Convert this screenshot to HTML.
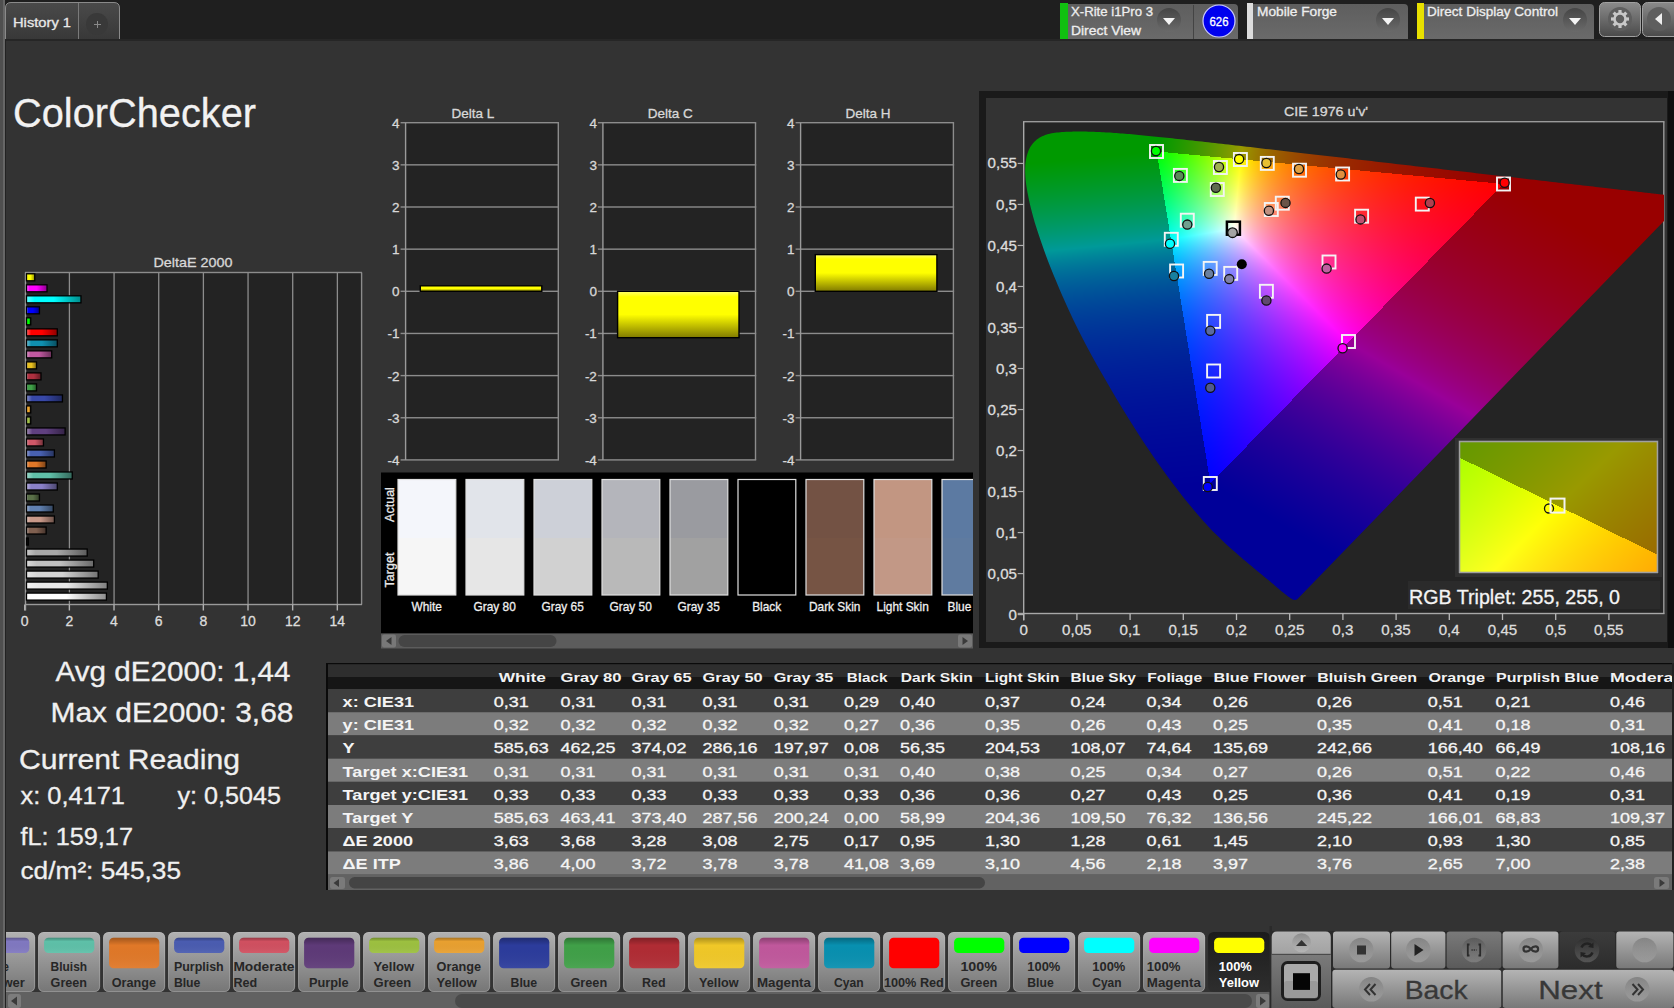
<!DOCTYPE html>
<html><head><meta charset="utf-8"><style>
html,body{margin:0;padding:0;background:#333;overflow:hidden;width:1674px;height:1008px}
svg,canvas{position:absolute;left:0;top:0}
text{font-family:"Liberation Sans", sans-serif}
</style></head><body>
<svg id="base" width="1674" height="1008" viewBox="0 0 1674 1008"><rect x="0" y="0" width="1674" height="1008" fill="#333333"/><rect x="0" y="0" width="1674" height="40" fill="#1f1f1f"/><rect x="5" y="39" width="1669" height="2" fill="#262626"/><rect x="0" y="0" width="5" height="1008" fill="#4f4f4f"/><rect x="3" y="0" width="2" height="1008" fill="#666"/><rect x="5" y="40" width="1" height="968" fill="#222"/><defs><linearGradient id="tabg" x1="0" y1="0" x2="0" y2="1"><stop offset="0" stop-color="#4a4a4a"/><stop offset="1" stop-color="#383838"/></linearGradient><linearGradient id="boxg" x1="0" y1="0" x2="0" y2="1"><stop offset="0" stop-color="#5e5e5e"/><stop offset="1" stop-color="#6a6a6a"/></linearGradient><radialGradient id="ddg" cx="0.5" cy="0.3" r="0.7"><stop offset="0" stop-color="#474747"/><stop offset="1" stop-color="#5a5a5a"/></radialGradient><linearGradient id="ddg2" x1="0" y1="0" x2="0" y2="1"><stop offset="0" stop-color="#454545"/><stop offset="1" stop-color="#6a6a6a"/></linearGradient><linearGradient id="btng" x1="0" y1="0" x2="0" y2="1"><stop offset="0" stop-color="#8a8a8a"/><stop offset="1" stop-color="#4a4a4a"/></linearGradient></defs><path d="M5.5,39 V8 Q5.5,2.5 11,2.5 H114 Q119.5,2.5 119.5,8 V39" fill="url(#tabg)" stroke="#8a8a8a" stroke-width="1"/><rect x="78" y="3" width="1" height="36" fill="#7a7a7a"/><circle cx="97" cy="24" r="11" fill="#393939"/><path d="M94,24.5 H101 M97.5,21 V28" stroke="#8a8a8a" stroke-width="1"/><text x="13" y="27" font-size="13" fill="#e8e8e8" stroke="#e8e8e8" stroke-width="0.3" text-anchor="start" font-weight="400" textLength="58" lengthAdjust="spacingAndGlyphs" >History 1</text><path d="M1060,39 V4 H1234 Q1238,4 1238,8 V39 Z" fill="url(#boxg)"/><rect x="1060" y="3" width="8" height="36" fill="#10c010"/><text x="1071" y="16" font-size="13" fill="#eeeeee" stroke="#eeeeee" stroke-width="0.3" text-anchor="start" font-weight="400" textLength="82" lengthAdjust="spacingAndGlyphs" >X-Rite i1Pro 3</text><text x="1071" y="35" font-size="13" fill="#eeeeee" stroke="#eeeeee" stroke-width="0.3" text-anchor="start" font-weight="400" textLength="70" lengthAdjust="spacingAndGlyphs" >Direct View</text><circle cx="1169" cy="20" r="12" fill="url(#ddg2)"/><path d="M1163,18 L1175,18 L1169,25 Z" fill="#f4f4f4"/><rect x="1193" y="5" width="1" height="34" fill="#444"/><circle cx="1219" cy="21" r="16" fill="#0000ee" stroke="#c8c8ff" stroke-width="1.2"/><text x="1219" y="25.5" font-size="12" fill="#ffffff" stroke="#ffffff" stroke-width="0.3" text-anchor="middle" font-weight="400" textLength="19" lengthAdjust="spacingAndGlyphs" >626</text><path d="M1247,39 V4 H1404 Q1408,4 1408,8 V39 Z" fill="url(#boxg)"/><rect x="1247" y="3" width="6" height="36" fill="#dddddd"/><text x="1257" y="16" font-size="13" fill="#eeeeee" stroke="#eeeeee" stroke-width="0.3" text-anchor="start" font-weight="400" textLength="80" lengthAdjust="spacingAndGlyphs" >Mobile Forge</text><circle cx="1388" cy="20" r="12" fill="url(#ddg2)"/><path d="M1382,18 L1394,18 L1388,25 Z" fill="#f4f4f4"/><path d="M1417,39 V4 H1590 Q1594,4 1594,8 V39 Z" fill="url(#boxg)"/><rect x="1417" y="3" width="7" height="36" fill="#e8e000"/><text x="1427" y="16" font-size="13" fill="#eeeeee" stroke="#eeeeee" stroke-width="0.3" text-anchor="start" font-weight="400" textLength="131" lengthAdjust="spacingAndGlyphs" >Direct Display Control</text><circle cx="1575" cy="20" r="12" fill="url(#ddg2)"/><path d="M1569,18 L1581,18 L1575,25 Z" fill="#f4f4f4"/><rect x="1599.5" y="2.5" width="41" height="34" rx="5" fill="url(#btng)" stroke="#a0a0a0" stroke-width="1"/><circle cx="1620" cy="19" r="12" fill="#5e5e5e"/><rect x="1618.4" y="10" width="3.2" height="4" fill="#c8c8c8" transform="rotate(0 1620 19)"/><rect x="1618.4" y="10" width="3.2" height="4" fill="#c8c8c8" transform="rotate(45 1620 19)"/><rect x="1618.4" y="10" width="3.2" height="4" fill="#c8c8c8" transform="rotate(90 1620 19)"/><rect x="1618.4" y="10" width="3.2" height="4" fill="#c8c8c8" transform="rotate(135 1620 19)"/><rect x="1618.4" y="10" width="3.2" height="4" fill="#c8c8c8" transform="rotate(180 1620 19)"/><rect x="1618.4" y="10" width="3.2" height="4" fill="#c8c8c8" transform="rotate(225 1620 19)"/><rect x="1618.4" y="10" width="3.2" height="4" fill="#c8c8c8" transform="rotate(270 1620 19)"/><rect x="1618.4" y="10" width="3.2" height="4" fill="#c8c8c8" transform="rotate(315 1620 19)"/><circle cx="1620" cy="19" r="5.5" fill="none" stroke="#c8c8c8" stroke-width="2.6"/><rect x="1642.5" y="2.5" width="40" height="34" rx="5" fill="url(#btng)" stroke="#a0a0a0" stroke-width="1"/><circle cx="1659" cy="19" r="12" fill="#5e5e5e"/><path d="M1655,19 L1662,13 L1662,25 Z" fill="#eeeeee"/><text x="13" y="127" font-size="40" fill="#f2f2f2" stroke="#f2f2f2" stroke-width="0.3" text-anchor="start" font-weight="400" textLength="243" lengthAdjust="spacingAndGlyphs" >ColorChecker</text><rect x="25.5" y="272.5" width="336.0" height="332.0" fill="#232323"/><rect x="68.76" y="272.5" width="1.3" height="332.0" fill="#8c8c8c"/><rect x="113.42" y="272.5" width="1.3" height="332.0" fill="#8c8c8c"/><rect x="158.08" y="272.5" width="1.3" height="332.0" fill="#8c8c8c"/><rect x="202.74" y="272.5" width="1.3" height="332.0" fill="#8c8c8c"/><rect x="247.40" y="272.5" width="1.3" height="332.0" fill="#8c8c8c"/><rect x="292.06" y="272.5" width="1.3" height="332.0" fill="#8c8c8c"/><rect x="336.72" y="272.5" width="1.3" height="332.0" fill="#8c8c8c"/><rect x="25.0" y="271.8" width="337.0" height="1.4" fill="#8c8c8c"/><rect x="360.9" y="272.5" width="1.4" height="332.0" fill="#8c8c8c"/><rect x="24.8" y="272.5" width="1.4" height="338.0" fill="#9a9a9a"/><rect x="25.0" y="603.8" width="337.0" height="1.4" fill="#9a9a9a"/><rect x="24.00" y="604.5" width="1.4" height="6" fill="#b0b0b0"/><text x="24.7" y="626" font-size="14" fill="#dcdcdc" stroke="#dcdcdc" stroke-width="0.3" text-anchor="middle" font-weight="400" >0</text><rect x="68.66" y="604.5" width="1.4" height="6" fill="#b0b0b0"/><text x="69.4" y="626" font-size="14" fill="#dcdcdc" stroke="#dcdcdc" stroke-width="0.3" text-anchor="middle" font-weight="400" >2</text><rect x="113.32" y="604.5" width="1.4" height="6" fill="#b0b0b0"/><text x="114.0" y="626" font-size="14" fill="#dcdcdc" stroke="#dcdcdc" stroke-width="0.3" text-anchor="middle" font-weight="400" >4</text><rect x="157.98" y="604.5" width="1.4" height="6" fill="#b0b0b0"/><text x="158.7" y="626" font-size="14" fill="#dcdcdc" stroke="#dcdcdc" stroke-width="0.3" text-anchor="middle" font-weight="400" >6</text><rect x="202.64" y="604.5" width="1.4" height="6" fill="#b0b0b0"/><text x="203.3" y="626" font-size="14" fill="#dcdcdc" stroke="#dcdcdc" stroke-width="0.3" text-anchor="middle" font-weight="400" >8</text><rect x="247.30" y="604.5" width="1.4" height="6" fill="#b0b0b0"/><text x="248.0" y="626" font-size="14" fill="#dcdcdc" stroke="#dcdcdc" stroke-width="0.3" text-anchor="middle" font-weight="400" >10</text><rect x="291.96" y="604.5" width="1.4" height="6" fill="#b0b0b0"/><text x="292.7" y="626" font-size="14" fill="#dcdcdc" stroke="#dcdcdc" stroke-width="0.3" text-anchor="middle" font-weight="400" >12</text><rect x="336.62" y="604.5" width="1.4" height="6" fill="#b0b0b0"/><text x="337.3" y="626" font-size="14" fill="#dcdcdc" stroke="#dcdcdc" stroke-width="0.3" text-anchor="middle" font-weight="400" >14</text><text x="193" y="267" font-size="13.5" fill="#d8d8d8" stroke="#d8d8d8" stroke-width="0.3" text-anchor="middle" font-weight="400" textLength="79" lengthAdjust="spacingAndGlyphs" >DeltaE 2000</text><rect x="26.5" y="273.80" width="8.25" height="7" fill="url(#bg0)" stroke="#000" stroke-width="1.3"/><rect x="26.5" y="284.81" width="20.53" height="7" fill="url(#bg1)" stroke="#000" stroke-width="1.3"/><rect x="26.5" y="295.82" width="54.47" height="7" fill="url(#bg2)" stroke="#000" stroke-width="1.3"/><rect x="26.5" y="306.83" width="12.94" height="7" fill="url(#bg3)" stroke="#000" stroke-width="1.3"/><rect x="26.5" y="317.84" width="4.23" height="7" fill="url(#bg4)" stroke="#000" stroke-width="1.3"/><rect x="26.5" y="328.85" width="30.80" height="7" fill="url(#bg5)" stroke="#000" stroke-width="1.3"/><rect x="26.5" y="339.86" width="30.80" height="7" fill="url(#bg6)" stroke="#000" stroke-width="1.3"/><rect x="26.5" y="350.87" width="25.22" height="7" fill="url(#bg7)" stroke="#000" stroke-width="1.3"/><rect x="26.5" y="361.88" width="10.03" height="7" fill="url(#bg8)" stroke="#000" stroke-width="1.3"/><rect x="26.5" y="372.89" width="14.50" height="7" fill="url(#bg9)" stroke="#000" stroke-width="1.3"/><rect x="26.5" y="383.90" width="10.03" height="7" fill="url(#bg10)" stroke="#000" stroke-width="1.3"/><rect x="26.5" y="394.91" width="35.94" height="7" fill="url(#bg11)" stroke="#000" stroke-width="1.3"/><rect x="26.5" y="405.92" width="4.23" height="7" fill="url(#bg12)" stroke="#000" stroke-width="1.3"/><rect x="26.5" y="416.93" width="4.23" height="7" fill="url(#bg13)" stroke="#000" stroke-width="1.3"/><rect x="26.5" y="427.94" width="38.62" height="7" fill="url(#bg14)" stroke="#000" stroke-width="1.3"/><rect x="26.5" y="438.95" width="16.96" height="7" fill="url(#bg15)" stroke="#000" stroke-width="1.3"/><rect x="26.5" y="449.96" width="27.90" height="7" fill="url(#bg16)" stroke="#000" stroke-width="1.3"/><rect x="26.5" y="460.97" width="19.64" height="7" fill="url(#bg17)" stroke="#000" stroke-width="1.3"/><rect x="26.5" y="471.98" width="45.76" height="7" fill="url(#bg18)" stroke="#000" stroke-width="1.3"/><rect x="26.5" y="482.99" width="30.80" height="7" fill="url(#bg19)" stroke="#000" stroke-width="1.3"/><rect x="26.5" y="494.00" width="12.94" height="7" fill="url(#bg20)" stroke="#000" stroke-width="1.3"/><rect x="26.5" y="505.01" width="26.78" height="7" fill="url(#bg21)" stroke="#000" stroke-width="1.3"/><rect x="26.5" y="516.02" width="27.90" height="7" fill="url(#bg22)" stroke="#000" stroke-width="1.3"/><rect x="26.5" y="527.03" width="19.64" height="7" fill="url(#bg23)" stroke="#000" stroke-width="1.3"/><rect x="26.5" y="538.04" width="1.77" height="7" fill="url(#bg24)" stroke="#000" stroke-width="1.3"/><rect x="26.5" y="549.05" width="60.72" height="7" fill="url(#bg25)" stroke="#000" stroke-width="1.3"/><rect x="26.5" y="560.06" width="67.20" height="7" fill="url(#bg26)" stroke="#000" stroke-width="1.3"/><rect x="26.5" y="571.07" width="71.67" height="7" fill="url(#bg27)" stroke="#000" stroke-width="1.3"/><rect x="26.5" y="582.08" width="80.82" height="7" fill="url(#bg28)" stroke="#000" stroke-width="1.3"/><rect x="26.5" y="593.09" width="79.93" height="7" fill="url(#bg29)" stroke="#000" stroke-width="1.3"/><defs><linearGradient id="bg0" x1="0" y1="0" x2="1" y2="0"><stop offset="0" stop-color="#ffff66"/><stop offset="0.15" stop-color="#ffff00"/><stop offset="0.5" stop-color="#ffff00"/><stop offset="1" stop-color="#8c8c00"/></linearGradient><linearGradient id="bg1" x1="0" y1="0" x2="1" y2="0"><stop offset="0" stop-color="#ff66ff"/><stop offset="0.15" stop-color="#ff00ff"/><stop offset="0.5" stop-color="#ff00ff"/><stop offset="1" stop-color="#8c008c"/></linearGradient><linearGradient id="bg2" x1="0" y1="0" x2="1" y2="0"><stop offset="0" stop-color="#66ffff"/><stop offset="0.15" stop-color="#00ffff"/><stop offset="0.5" stop-color="#00ffff"/><stop offset="1" stop-color="#008c8c"/></linearGradient><linearGradient id="bg3" x1="0" y1="0" x2="1" y2="0"><stop offset="0" stop-color="#6666ff"/><stop offset="0.15" stop-color="#0000ff"/><stop offset="0.5" stop-color="#0000ff"/><stop offset="1" stop-color="#00008c"/></linearGradient><linearGradient id="bg4" x1="0" y1="0" x2="1" y2="0"><stop offset="0" stop-color="#66ff66"/><stop offset="0.15" stop-color="#00ff00"/><stop offset="0.5" stop-color="#00ff00"/><stop offset="1" stop-color="#008c00"/></linearGradient><linearGradient id="bg5" x1="0" y1="0" x2="1" y2="0"><stop offset="0" stop-color="#ff6666"/><stop offset="0.15" stop-color="#ff0000"/><stop offset="0.5" stop-color="#ff0000"/><stop offset="1" stop-color="#8c0000"/></linearGradient><linearGradient id="bg6" x1="0" y1="0" x2="1" y2="0"><stop offset="0" stop-color="#6fbccf"/><stop offset="0.15" stop-color="#1090b0"/><stop offset="0.5" stop-color="#1090b0"/><stop offset="1" stop-color="#084f60"/></linearGradient><linearGradient id="bg7" x1="0" y1="0" x2="1" y2="0"><stop offset="0" stop-color="#d99ac6"/><stop offset="0.15" stop-color="#c058a0"/><stop offset="0.5" stop-color="#c058a0"/><stop offset="1" stop-color="#693058"/></linearGradient><linearGradient id="bg8" x1="0" y1="0" x2="1" y2="0"><stop offset="0" stop-color="#f1d979"/><stop offset="0.15" stop-color="#e8c020"/><stop offset="0.5" stop-color="#e8c020"/><stop offset="1" stop-color="#7f6911"/></linearGradient><linearGradient id="bg9" x1="0" y1="0" x2="1" y2="0"><stop offset="0" stop-color="#cf828c"/><stop offset="0.15" stop-color="#b03040"/><stop offset="0.5" stop-color="#b03040"/><stop offset="1" stop-color="#601a23"/></linearGradient><linearGradient id="bg10" x1="0" y1="0" x2="1" y2="0"><stop offset="0" stop-color="#8cc691"/><stop offset="0.15" stop-color="#40a048"/><stop offset="0.5" stop-color="#40a048"/><stop offset="1" stop-color="#235827"/></linearGradient><linearGradient id="bg11" x1="0" y1="0" x2="1" y2="0"><stop offset="0" stop-color="#8791ca"/><stop offset="0.15" stop-color="#3848a8"/><stop offset="0.5" stop-color="#3848a8"/><stop offset="1" stop-color="#1e275c"/></linearGradient><linearGradient id="bg12" x1="0" y1="0" x2="1" y2="0"><stop offset="0" stop-color="#f6ca82"/><stop offset="0.15" stop-color="#f0a830"/><stop offset="0.5" stop-color="#f0a830"/><stop offset="1" stop-color="#845c1a"/></linearGradient><linearGradient id="bg13" x1="0" y1="0" x2="1" y2="0"><stop offset="0" stop-color="#c6d991"/><stop offset="0.15" stop-color="#a0c048"/><stop offset="0.5" stop-color="#a0c048"/><stop offset="1" stop-color="#586927"/></linearGradient><linearGradient id="bg14" x1="0" y1="0" x2="1" y2="0"><stop offset="0" stop-color="#9f8cb2"/><stop offset="0.15" stop-color="#604080"/><stop offset="0.5" stop-color="#604080"/><stop offset="1" stop-color="#342346"/></linearGradient><linearGradient id="bg15" x1="0" y1="0" x2="1" y2="0"><stop offset="0" stop-color="#e29aa4"/><stop offset="0.15" stop-color="#d05868"/><stop offset="0.5" stop-color="#d05868"/><stop offset="1" stop-color="#723039"/></linearGradient><linearGradient id="bg16" x1="0" y1="0" x2="1" y2="0"><stop offset="0" stop-color="#919fcf"/><stop offset="0.15" stop-color="#4860b0"/><stop offset="0.5" stop-color="#4860b0"/><stop offset="1" stop-color="#273460"/></linearGradient><linearGradient id="bg17" x1="0" y1="0" x2="1" y2="0"><stop offset="0" stop-color="#ecae7e"/><stop offset="0.15" stop-color="#e07828"/><stop offset="0.5" stop-color="#e07828"/><stop offset="1" stop-color="#7b4216"/></linearGradient><linearGradient id="bg18" x1="0" y1="0" x2="1" y2="0"><stop offset="0" stop-color="#9fd9ca"/><stop offset="0.15" stop-color="#60c0a8"/><stop offset="0.5" stop-color="#60c0a8"/><stop offset="1" stop-color="#34695c"/></linearGradient><linearGradient id="bg19" x1="0" y1="0" x2="1" y2="0"><stop offset="0" stop-color="#b8b2de"/><stop offset="0.15" stop-color="#8a80c8"/><stop offset="0.5" stop-color="#8a80c8"/><stop offset="1" stop-color="#4b466e"/></linearGradient><linearGradient id="bg20" x1="0" y1="0" x2="1" y2="0"><stop offset="0" stop-color="#9ca991"/><stop offset="0.15" stop-color="#5a7048"/><stop offset="0.5" stop-color="#5a7048"/><stop offset="1" stop-color="#313d27"/></linearGradient><linearGradient id="bg21" x1="0" y1="0" x2="1" y2="0"><stop offset="0" stop-color="#9fb2cf"/><stop offset="0.15" stop-color="#6080b0"/><stop offset="0.5" stop-color="#6080b0"/><stop offset="1" stop-color="#344660"/></linearGradient><linearGradient id="bg22" x1="0" y1="0" x2="1" y2="0"><stop offset="0" stop-color="#dec1b7"/><stop offset="0.15" stop-color="#c89888"/><stop offset="0.5" stop-color="#c89888"/><stop offset="1" stop-color="#6e534a"/></linearGradient><linearGradient id="bg23" x1="0" y1="0" x2="1" y2="0"><stop offset="0" stop-color="#b29f96"/><stop offset="0.15" stop-color="#806050"/><stop offset="0.5" stop-color="#806050"/><stop offset="1" stop-color="#46342c"/></linearGradient><linearGradient id="bg24" x1="0" y1="0" x2="1" y2="0"><stop offset="0" stop-color="#6f6f6f"/><stop offset="0.15" stop-color="#101010"/><stop offset="0.5" stop-color="#101010"/><stop offset="1" stop-color="#080808"/></linearGradient><linearGradient id="bg25" x1="0" y1="0" x2="1" y2="0"><stop offset="0" stop-color="#cacaca"/><stop offset="0.15" stop-color="#a8a8a8"/><stop offset="0.5" stop-color="#a8a8a8"/><stop offset="1" stop-color="#5c5c5c"/></linearGradient><linearGradient id="bg26" x1="0" y1="0" x2="1" y2="0"><stop offset="0" stop-color="#d9d9d9"/><stop offset="0.15" stop-color="#c0c0c0"/><stop offset="0.5" stop-color="#c0c0c0"/><stop offset="1" stop-color="#696969"/></linearGradient><linearGradient id="bg27" x1="0" y1="0" x2="1" y2="0"><stop offset="0" stop-color="#e5e5e5"/><stop offset="0.15" stop-color="#d4d4d4"/><stop offset="0.5" stop-color="#d4d4d4"/><stop offset="1" stop-color="#747474"/></linearGradient><linearGradient id="bg28" x1="0" y1="0" x2="1" y2="0"><stop offset="0" stop-color="#f1f1f1"/><stop offset="0.15" stop-color="#e8e8e8"/><stop offset="0.5" stop-color="#e8e8e8"/><stop offset="1" stop-color="#7f7f7f"/></linearGradient><linearGradient id="bg29" x1="0" y1="0" x2="1" y2="0"><stop offset="0" stop-color="#ffffff"/><stop offset="0.15" stop-color="#ffffff"/><stop offset="0.5" stop-color="#ffffff"/><stop offset="1" stop-color="#8c8c8c"/></linearGradient></defs><defs><linearGradient id="ybar" x1="0" y1="0" x2="0" y2="1"><stop offset="0" stop-color="#ffff70"/><stop offset="0.12" stop-color="#ffff00"/><stop offset="0.5" stop-color="#ffff00"/><stop offset="1" stop-color="#807a00"/></linearGradient></defs><rect x="405.6" y="122.7" width="152.7" height="337.2" fill="#232323"/><rect x="400.6" y="459.20" width="158.4" height="1.4" fill="#8c8c8c"/><text x="399.6" y="464.9" font-size="13.5" fill="#d8d8d8" stroke="#d8d8d8" stroke-width="0.3" text-anchor="end" font-weight="400" >-4</text><rect x="400.6" y="417.05" width="158.4" height="1.4" fill="#8c8c8c"/><text x="399.6" y="422.8" font-size="13.5" fill="#d8d8d8" stroke="#d8d8d8" stroke-width="0.3" text-anchor="end" font-weight="400" >-3</text><rect x="400.6" y="374.90" width="158.4" height="1.4" fill="#8c8c8c"/><text x="399.6" y="380.6" font-size="13.5" fill="#d8d8d8" stroke="#d8d8d8" stroke-width="0.3" text-anchor="end" font-weight="400" >-2</text><rect x="400.6" y="332.75" width="158.4" height="1.4" fill="#8c8c8c"/><text x="399.6" y="338.4" font-size="13.5" fill="#d8d8d8" stroke="#d8d8d8" stroke-width="0.3" text-anchor="end" font-weight="400" >-1</text><rect x="400.6" y="290.60" width="158.4" height="1.4" fill="#8c8c8c"/><text x="399.6" y="296.3" font-size="13.5" fill="#d8d8d8" stroke="#d8d8d8" stroke-width="0.3" text-anchor="end" font-weight="400" >0</text><rect x="400.6" y="248.45" width="158.4" height="1.4" fill="#8c8c8c"/><text x="399.6" y="254.2" font-size="13.5" fill="#d8d8d8" stroke="#d8d8d8" stroke-width="0.3" text-anchor="end" font-weight="400" >1</text><rect x="400.6" y="206.30" width="158.4" height="1.4" fill="#8c8c8c"/><text x="399.6" y="212.0" font-size="13.5" fill="#d8d8d8" stroke="#d8d8d8" stroke-width="0.3" text-anchor="end" font-weight="400" >2</text><rect x="400.6" y="164.15" width="158.4" height="1.4" fill="#8c8c8c"/><text x="399.6" y="169.9" font-size="13.5" fill="#d8d8d8" stroke="#d8d8d8" stroke-width="0.3" text-anchor="end" font-weight="400" >3</text><rect x="400.6" y="122.00" width="158.4" height="1.4" fill="#8c8c8c"/><text x="399.6" y="127.7" font-size="13.5" fill="#d8d8d8" stroke="#d8d8d8" stroke-width="0.3" text-anchor="end" font-weight="400" >4</text><rect x="404.90000000000003" y="122.7" width="1.4" height="337.2" fill="#9a9a9a"/><rect x="557.5999999999999" y="122.7" width="1.4" height="337.2" fill="#8c8c8c"/><text x="472.95" y="118" font-size="13.5" fill="#d8d8d8" stroke="#d8d8d8" stroke-width="0.3" text-anchor="middle" font-weight="400" >Delta L</text><rect x="420.3" y="285.8" width="121.5" height="5.5" fill="url(#ybar)" stroke="#000" stroke-width="1.4"/><rect x="602.9" y="122.7" width="152.6" height="337.2" fill="#232323"/><rect x="597.9" y="459.20" width="158.3" height="1.4" fill="#8c8c8c"/><text x="596.9" y="464.9" font-size="13.5" fill="#d8d8d8" stroke="#d8d8d8" stroke-width="0.3" text-anchor="end" font-weight="400" >-4</text><rect x="597.9" y="417.05" width="158.3" height="1.4" fill="#8c8c8c"/><text x="596.9" y="422.8" font-size="13.5" fill="#d8d8d8" stroke="#d8d8d8" stroke-width="0.3" text-anchor="end" font-weight="400" >-3</text><rect x="597.9" y="374.90" width="158.3" height="1.4" fill="#8c8c8c"/><text x="596.9" y="380.6" font-size="13.5" fill="#d8d8d8" stroke="#d8d8d8" stroke-width="0.3" text-anchor="end" font-weight="400" >-2</text><rect x="597.9" y="332.75" width="158.3" height="1.4" fill="#8c8c8c"/><text x="596.9" y="338.4" font-size="13.5" fill="#d8d8d8" stroke="#d8d8d8" stroke-width="0.3" text-anchor="end" font-weight="400" >-1</text><rect x="597.9" y="290.60" width="158.3" height="1.4" fill="#8c8c8c"/><text x="596.9" y="296.3" font-size="13.5" fill="#d8d8d8" stroke="#d8d8d8" stroke-width="0.3" text-anchor="end" font-weight="400" >0</text><rect x="597.9" y="248.45" width="158.3" height="1.4" fill="#8c8c8c"/><text x="596.9" y="254.2" font-size="13.5" fill="#d8d8d8" stroke="#d8d8d8" stroke-width="0.3" text-anchor="end" font-weight="400" >1</text><rect x="597.9" y="206.30" width="158.3" height="1.4" fill="#8c8c8c"/><text x="596.9" y="212.0" font-size="13.5" fill="#d8d8d8" stroke="#d8d8d8" stroke-width="0.3" text-anchor="end" font-weight="400" >2</text><rect x="597.9" y="164.15" width="158.3" height="1.4" fill="#8c8c8c"/><text x="596.9" y="169.9" font-size="13.5" fill="#d8d8d8" stroke="#d8d8d8" stroke-width="0.3" text-anchor="end" font-weight="400" >3</text><rect x="597.9" y="122.00" width="158.3" height="1.4" fill="#8c8c8c"/><text x="596.9" y="127.7" font-size="13.5" fill="#d8d8d8" stroke="#d8d8d8" stroke-width="0.3" text-anchor="end" font-weight="400" >4</text><rect x="602.1999999999999" y="122.7" width="1.4" height="337.2" fill="#9a9a9a"/><rect x="754.8" y="122.7" width="1.4" height="337.2" fill="#8c8c8c"/><text x="670.2" y="118" font-size="13.5" fill="#d8d8d8" stroke="#d8d8d8" stroke-width="0.3" text-anchor="middle" font-weight="400" >Delta C</text><rect x="617.6" y="291.3" width="121.4" height="46.4" fill="url(#ybar)" stroke="#000" stroke-width="1.4"/><rect x="800.6" y="122.7" width="152.8" height="337.2" fill="#232323"/><rect x="795.6" y="459.20" width="158.5" height="1.4" fill="#8c8c8c"/><text x="794.6" y="464.9" font-size="13.5" fill="#d8d8d8" stroke="#d8d8d8" stroke-width="0.3" text-anchor="end" font-weight="400" >-4</text><rect x="795.6" y="417.05" width="158.5" height="1.4" fill="#8c8c8c"/><text x="794.6" y="422.8" font-size="13.5" fill="#d8d8d8" stroke="#d8d8d8" stroke-width="0.3" text-anchor="end" font-weight="400" >-3</text><rect x="795.6" y="374.90" width="158.5" height="1.4" fill="#8c8c8c"/><text x="794.6" y="380.6" font-size="13.5" fill="#d8d8d8" stroke="#d8d8d8" stroke-width="0.3" text-anchor="end" font-weight="400" >-2</text><rect x="795.6" y="332.75" width="158.5" height="1.4" fill="#8c8c8c"/><text x="794.6" y="338.4" font-size="13.5" fill="#d8d8d8" stroke="#d8d8d8" stroke-width="0.3" text-anchor="end" font-weight="400" >-1</text><rect x="795.6" y="290.60" width="158.5" height="1.4" fill="#8c8c8c"/><text x="794.6" y="296.3" font-size="13.5" fill="#d8d8d8" stroke="#d8d8d8" stroke-width="0.3" text-anchor="end" font-weight="400" >0</text><rect x="795.6" y="248.45" width="158.5" height="1.4" fill="#8c8c8c"/><text x="794.6" y="254.2" font-size="13.5" fill="#d8d8d8" stroke="#d8d8d8" stroke-width="0.3" text-anchor="end" font-weight="400" >1</text><rect x="795.6" y="206.30" width="158.5" height="1.4" fill="#8c8c8c"/><text x="794.6" y="212.0" font-size="13.5" fill="#d8d8d8" stroke="#d8d8d8" stroke-width="0.3" text-anchor="end" font-weight="400" >2</text><rect x="795.6" y="164.15" width="158.5" height="1.4" fill="#8c8c8c"/><text x="794.6" y="169.9" font-size="13.5" fill="#d8d8d8" stroke="#d8d8d8" stroke-width="0.3" text-anchor="end" font-weight="400" >3</text><rect x="795.6" y="122.00" width="158.5" height="1.4" fill="#8c8c8c"/><text x="794.6" y="127.7" font-size="13.5" fill="#d8d8d8" stroke="#d8d8d8" stroke-width="0.3" text-anchor="end" font-weight="400" >4</text><rect x="799.9" y="122.7" width="1.4" height="337.2" fill="#9a9a9a"/><rect x="952.6999999999999" y="122.7" width="1.4" height="337.2" fill="#8c8c8c"/><text x="868.0" y="118" font-size="13.5" fill="#d8d8d8" stroke="#d8d8d8" stroke-width="0.3" text-anchor="middle" font-weight="400" >Delta H</text><rect x="815.3" y="254.6" width="121.6" height="36.7" fill="url(#ybar)" stroke="#000" stroke-width="1.4"/><rect x="381" y="472.5" width="592" height="161" fill="#000"/><clipPath id="swclip"><rect x="381" y="472" width="592" height="162"/></clipPath><g clip-path="url(#swclip)"><rect x="398.0" y="479" width="57.8" height="59" fill="#f4f6fb"/><rect x="398.0" y="538" width="57.8" height="57" fill="#f6f6f6"/><rect x="398.0" y="479.5" width="57.8" height="115.5" fill="none" stroke="#e0e0e0" stroke-width="1.2"/><text x="426.7" y="611" font-size="13.5" fill="#f0f0f0" stroke="#f0f0f0" stroke-width="0.3" text-anchor="middle" font-weight="400" textLength="30.4" lengthAdjust="spacingAndGlyphs" >White</text><rect x="466.0" y="479" width="57.8" height="59" fill="#e1e4ea"/><rect x="466.0" y="538" width="57.8" height="57" fill="#e6e6e6"/><rect x="466.0" y="479.5" width="57.8" height="115.5" fill="none" stroke="#e0e0e0" stroke-width="1.2"/><text x="494.7" y="611" font-size="13.5" fill="#f0f0f0" stroke="#f0f0f0" stroke-width="0.3" text-anchor="middle" font-weight="400" textLength="42.3" lengthAdjust="spacingAndGlyphs" >Gray 80</text><rect x="534.0" y="479" width="57.8" height="59" fill="#cdd0d8"/><rect x="534.0" y="538" width="57.8" height="57" fill="#d1d1d1"/><rect x="534.0" y="479.5" width="57.8" height="115.5" fill="none" stroke="#e0e0e0" stroke-width="1.2"/><text x="562.7" y="611" font-size="13.5" fill="#f0f0f0" stroke="#f0f0f0" stroke-width="0.3" text-anchor="middle" font-weight="400" textLength="42.3" lengthAdjust="spacingAndGlyphs" >Gray 65</text><rect x="602.0" y="479" width="57.8" height="59" fill="#b4b5bb"/><rect x="602.0" y="538" width="57.8" height="57" fill="#b9b9b9"/><rect x="602.0" y="479.5" width="57.8" height="115.5" fill="none" stroke="#e0e0e0" stroke-width="1.2"/><text x="630.7" y="611" font-size="13.5" fill="#f0f0f0" stroke="#f0f0f0" stroke-width="0.3" text-anchor="middle" font-weight="400" textLength="42.3" lengthAdjust="spacingAndGlyphs" >Gray 50</text><rect x="670.0" y="479" width="57.8" height="59" fill="#9a9ba0"/><rect x="670.0" y="538" width="57.8" height="57" fill="#a1a1a1"/><rect x="670.0" y="479.5" width="57.8" height="115.5" fill="none" stroke="#e0e0e0" stroke-width="1.2"/><text x="698.7" y="611" font-size="13.5" fill="#f0f0f0" stroke="#f0f0f0" stroke-width="0.3" text-anchor="middle" font-weight="400" textLength="42.3" lengthAdjust="spacingAndGlyphs" >Gray 35</text><rect x="738.0" y="479" width="57.8" height="59" fill="#000000"/><rect x="738.0" y="538" width="57.8" height="57" fill="#000000"/><rect x="738.0" y="479.5" width="57.8" height="115.5" fill="none" stroke="#e0e0e0" stroke-width="1.2"/><text x="766.7" y="611" font-size="13.5" fill="#f0f0f0" stroke="#f0f0f0" stroke-width="0.3" text-anchor="middle" font-weight="400" textLength="29.1" lengthAdjust="spacingAndGlyphs" >Black</text><rect x="806.0" y="479" width="57.8" height="59" fill="#735244"/><rect x="806.0" y="538" width="57.8" height="57" fill="#765444"/><rect x="806.0" y="479.5" width="57.8" height="115.5" fill="none" stroke="#e0e0e0" stroke-width="1.2"/><text x="834.7" y="611" font-size="13.5" fill="#f0f0f0" stroke="#f0f0f0" stroke-width="0.3" text-anchor="middle" font-weight="400" textLength="51.5" lengthAdjust="spacingAndGlyphs" >Dark Skin</text><rect x="874.0" y="479" width="57.8" height="59" fill="#c29682"/><rect x="874.0" y="538" width="57.8" height="57" fill="#c29886"/><rect x="874.0" y="479.5" width="57.8" height="115.5" fill="none" stroke="#e0e0e0" stroke-width="1.2"/><text x="902.7" y="611" font-size="13.5" fill="#f0f0f0" stroke="#f0f0f0" stroke-width="0.3" text-anchor="middle" font-weight="400" textLength="52.2" lengthAdjust="spacingAndGlyphs" >Light Skin</text><rect x="942.0" y="479" width="57.8" height="59" fill="#5c7aa2"/><rect x="942.0" y="538" width="57.8" height="57" fill="#5f7ba0"/><rect x="942.0" y="479.5" width="57.8" height="115.5" fill="none" stroke="#e0e0e0" stroke-width="1.2"/><text x="947.5" y="611" font-size="13.5" fill="#f0f0f0" stroke="#f0f0f0" stroke-width="0.3" text-anchor="start" font-weight="400" textLength="23.8" lengthAdjust="spacingAndGlyphs" >Blue</text></g><text x="0" y="0" font-size="12.5" fill="#e8e8e8" stroke="#e8e8e8" stroke-width="0.3" text-anchor="middle" font-weight="400" transform="translate(394,504.5) rotate(-90)">Actual</text><text x="0" y="0" font-size="12.5" fill="#e8e8e8" stroke="#e8e8e8" stroke-width="0.3" text-anchor="middle" font-weight="400" transform="translate(394,570) rotate(-90)">Target</text><rect x="381" y="633.5" width="592" height="15" fill="#5c5c5c"/><rect x="398.5" y="635" width="158" height="12" rx="6" fill="#454545"/><rect x="382" y="634.5" width="14" height="13" rx="2" fill="#787878"/><path d="M386,641 L391.5,637 L391.5,645 Z" fill="#3a3a3a"/><rect x="958" y="634.5" width="14" height="13" rx="2" fill="#787878"/><path d="M968,641 L962.5,637 L962.5,645 Z" fill="#3a3a3a"/><text x="55.5" y="681" font-size="27.5" fill="#f0f0f0" stroke="#f0f0f0" stroke-width="0.3" text-anchor="start" font-weight="400" textLength="235" lengthAdjust="spacingAndGlyphs" >Avg dE2000: 1,44</text><text x="50.5" y="722" font-size="27.5" fill="#f0f0f0" stroke="#f0f0f0" stroke-width="0.3" text-anchor="start" font-weight="400" textLength="243" lengthAdjust="spacingAndGlyphs" >Max dE2000: 3,68</text><text x="19" y="769" font-size="27.5" fill="#f0f0f0" stroke="#f0f0f0" stroke-width="0.3" text-anchor="start" font-weight="400" textLength="221" lengthAdjust="spacingAndGlyphs" >Current Reading</text><text x="20.5" y="804" font-size="23.5" fill="#f0f0f0" stroke="#f0f0f0" stroke-width="0.3" text-anchor="start" font-weight="400" textLength="104.5" lengthAdjust="spacingAndGlyphs" >x: 0,4171</text><text x="177.5" y="804" font-size="23.5" fill="#f0f0f0" stroke="#f0f0f0" stroke-width="0.3" text-anchor="start" font-weight="400" textLength="103.5" lengthAdjust="spacingAndGlyphs" >y: 0,5045</text><text x="20.5" y="845" font-size="23.5" fill="#f0f0f0" stroke="#f0f0f0" stroke-width="0.3" text-anchor="start" font-weight="400" textLength="112.5" lengthAdjust="spacingAndGlyphs" >fL: 159,17</text><text x="20.5" y="879" font-size="23.5" fill="#f0f0f0" stroke="#f0f0f0" stroke-width="0.3" text-anchor="start" font-weight="400" textLength="160.5" lengthAdjust="spacingAndGlyphs" >cd/m²: 545,35</text><rect x="326" y="663" width="1346" height="227" fill="#2e2e2e"/><rect x="326" y="663" width="1346" height="1.2" fill="#0a0a0a"/><rect x="326" y="663" width="2" height="227" fill="#0a0a0a"/><rect x="328" y="677" width="1344" height="12" fill="#161616"/><clipPath id="tclip"><rect x="328" y="664" width="1344" height="226"/></clipPath><g clip-path="url(#tclip)"><text x="498.8" y="682" font-size="13" fill="#f2f2f2" text-anchor="start" font-weight="700" textLength="47" lengthAdjust="spacingAndGlyphs" >White</text><text x="560.5" y="682" font-size="13" fill="#f2f2f2" text-anchor="start" font-weight="700" textLength="61" lengthAdjust="spacingAndGlyphs" >Gray 80</text><text x="631.5" y="682" font-size="13" fill="#f2f2f2" text-anchor="start" font-weight="700" textLength="60" lengthAdjust="spacingAndGlyphs" >Gray 65</text><text x="702.6" y="682" font-size="13" fill="#f2f2f2" text-anchor="start" font-weight="700" textLength="60" lengthAdjust="spacingAndGlyphs" >Gray 50</text><text x="773.7" y="682" font-size="13" fill="#f2f2f2" text-anchor="start" font-weight="700" textLength="59.5" lengthAdjust="spacingAndGlyphs" >Gray 35</text><text x="846.8" y="682" font-size="13" fill="#f2f2f2" text-anchor="start" font-weight="700" textLength="40.6" lengthAdjust="spacingAndGlyphs" >Black</text><text x="900.8" y="682" font-size="13" fill="#f2f2f2" text-anchor="start" font-weight="700" textLength="72" lengthAdjust="spacingAndGlyphs" >Dark Skin</text><text x="985" y="682" font-size="13" fill="#f2f2f2" text-anchor="start" font-weight="700" textLength="74.5" lengthAdjust="spacingAndGlyphs" >Light Skin</text><text x="1070.5" y="682" font-size="13" fill="#f2f2f2" text-anchor="start" font-weight="700" textLength="65.4" lengthAdjust="spacingAndGlyphs" >Blue Sky</text><text x="1147.3" y="682" font-size="13" fill="#f2f2f2" text-anchor="start" font-weight="700" textLength="54.8" lengthAdjust="spacingAndGlyphs" >Foliage</text><text x="1213.5" y="682" font-size="13" fill="#f2f2f2" text-anchor="start" font-weight="700" textLength="92.4" lengthAdjust="spacingAndGlyphs" >Blue Flower</text><text x="1317.3" y="682" font-size="13" fill="#f2f2f2" text-anchor="start" font-weight="700" textLength="99.7" lengthAdjust="spacingAndGlyphs" >Bluish Green</text><text x="1428.5" y="682" font-size="13" fill="#f2f2f2" text-anchor="start" font-weight="700" textLength="56.4" lengthAdjust="spacingAndGlyphs" >Orange</text><text x="1496" y="682" font-size="13" fill="#f2f2f2" text-anchor="start" font-weight="700" textLength="103" lengthAdjust="spacingAndGlyphs" >Purplish Blue</text><text x="1610" y="682" font-size="13" fill="#f2f2f2" text-anchor="start" font-weight="700" textLength="118" lengthAdjust="spacingAndGlyphs" >Moderate Red</text><rect x="328" y="689.0" width="1344" height="23.3" fill="#3e3e3e"/><text x="342.6" y="707.0" font-size="14.5" fill="#f4f4f4" text-anchor="start" font-weight="700" textLength="71.5" lengthAdjust="spacingAndGlyphs" >x: CIE31</text><text x="493.8" y="707.0" font-size="14.5" fill="#f4f4f4" stroke="#f4f4f4" stroke-width="0.3" text-anchor="start" font-weight="400" textLength="35.0" lengthAdjust="spacingAndGlyphs" >0,31</text><text x="560.5" y="707.0" font-size="14.5" fill="#f4f4f4" stroke="#f4f4f4" stroke-width="0.3" text-anchor="start" font-weight="400" textLength="35.0" lengthAdjust="spacingAndGlyphs" >0,31</text><text x="631.5" y="707.0" font-size="14.5" fill="#f4f4f4" stroke="#f4f4f4" stroke-width="0.3" text-anchor="start" font-weight="400" textLength="35.0" lengthAdjust="spacingAndGlyphs" >0,31</text><text x="702.6" y="707.0" font-size="14.5" fill="#f4f4f4" stroke="#f4f4f4" stroke-width="0.3" text-anchor="start" font-weight="400" textLength="35.0" lengthAdjust="spacingAndGlyphs" >0,31</text><text x="773.7" y="707.0" font-size="14.5" fill="#f4f4f4" stroke="#f4f4f4" stroke-width="0.3" text-anchor="start" font-weight="400" textLength="35.0" lengthAdjust="spacingAndGlyphs" >0,31</text><text x="844" y="707.0" font-size="14.5" fill="#f4f4f4" stroke="#f4f4f4" stroke-width="0.3" text-anchor="start" font-weight="400" textLength="35.0" lengthAdjust="spacingAndGlyphs" >0,29</text><text x="900" y="707.0" font-size="14.5" fill="#f4f4f4" stroke="#f4f4f4" stroke-width="0.3" text-anchor="start" font-weight="400" textLength="35.0" lengthAdjust="spacingAndGlyphs" >0,40</text><text x="985" y="707.0" font-size="14.5" fill="#f4f4f4" stroke="#f4f4f4" stroke-width="0.3" text-anchor="start" font-weight="400" textLength="35.0" lengthAdjust="spacingAndGlyphs" >0,37</text><text x="1070.5" y="707.0" font-size="14.5" fill="#f4f4f4" stroke="#f4f4f4" stroke-width="0.3" text-anchor="start" font-weight="400" textLength="35.0" lengthAdjust="spacingAndGlyphs" >0,24</text><text x="1146.5" y="707.0" font-size="14.5" fill="#f4f4f4" stroke="#f4f4f4" stroke-width="0.3" text-anchor="start" font-weight="400" textLength="35.0" lengthAdjust="spacingAndGlyphs" >0,34</text><text x="1213" y="707.0" font-size="14.5" fill="#f4f4f4" stroke="#f4f4f4" stroke-width="0.3" text-anchor="start" font-weight="400" textLength="35.0" lengthAdjust="spacingAndGlyphs" >0,26</text><text x="1317" y="707.0" font-size="14.5" fill="#f4f4f4" stroke="#f4f4f4" stroke-width="0.3" text-anchor="start" font-weight="400" textLength="35.0" lengthAdjust="spacingAndGlyphs" >0,26</text><text x="1427.7" y="707.0" font-size="14.5" fill="#f4f4f4" stroke="#f4f4f4" stroke-width="0.3" text-anchor="start" font-weight="400" textLength="35.0" lengthAdjust="spacingAndGlyphs" >0,51</text><text x="1495.5" y="707.0" font-size="14.5" fill="#f4f4f4" stroke="#f4f4f4" stroke-width="0.3" text-anchor="start" font-weight="400" textLength="35.0" lengthAdjust="spacingAndGlyphs" >0,21</text><text x="1610" y="707.0" font-size="14.5" fill="#f4f4f4" stroke="#f4f4f4" stroke-width="0.3" text-anchor="start" font-weight="400" textLength="35.0" lengthAdjust="spacingAndGlyphs" >0,46</text><rect x="328" y="712.2" width="1344" height="23.3" fill="#7c7c7c"/><text x="342.6" y="730.2" font-size="14.5" fill="#f4f4f4" text-anchor="start" font-weight="700" textLength="71.5" lengthAdjust="spacingAndGlyphs" >y: CIE31</text><text x="493.8" y="730.2" font-size="14.5" fill="#f4f4f4" stroke="#f4f4f4" stroke-width="0.3" text-anchor="start" font-weight="400" textLength="35.0" lengthAdjust="spacingAndGlyphs" >0,32</text><text x="560.5" y="730.2" font-size="14.5" fill="#f4f4f4" stroke="#f4f4f4" stroke-width="0.3" text-anchor="start" font-weight="400" textLength="35.0" lengthAdjust="spacingAndGlyphs" >0,32</text><text x="631.5" y="730.2" font-size="14.5" fill="#f4f4f4" stroke="#f4f4f4" stroke-width="0.3" text-anchor="start" font-weight="400" textLength="35.0" lengthAdjust="spacingAndGlyphs" >0,32</text><text x="702.6" y="730.2" font-size="14.5" fill="#f4f4f4" stroke="#f4f4f4" stroke-width="0.3" text-anchor="start" font-weight="400" textLength="35.0" lengthAdjust="spacingAndGlyphs" >0,32</text><text x="773.7" y="730.2" font-size="14.5" fill="#f4f4f4" stroke="#f4f4f4" stroke-width="0.3" text-anchor="start" font-weight="400" textLength="35.0" lengthAdjust="spacingAndGlyphs" >0,32</text><text x="844" y="730.2" font-size="14.5" fill="#f4f4f4" stroke="#f4f4f4" stroke-width="0.3" text-anchor="start" font-weight="400" textLength="35.0" lengthAdjust="spacingAndGlyphs" >0,27</text><text x="900" y="730.2" font-size="14.5" fill="#f4f4f4" stroke="#f4f4f4" stroke-width="0.3" text-anchor="start" font-weight="400" textLength="35.0" lengthAdjust="spacingAndGlyphs" >0,36</text><text x="985" y="730.2" font-size="14.5" fill="#f4f4f4" stroke="#f4f4f4" stroke-width="0.3" text-anchor="start" font-weight="400" textLength="35.0" lengthAdjust="spacingAndGlyphs" >0,35</text><text x="1070.5" y="730.2" font-size="14.5" fill="#f4f4f4" stroke="#f4f4f4" stroke-width="0.3" text-anchor="start" font-weight="400" textLength="35.0" lengthAdjust="spacingAndGlyphs" >0,26</text><text x="1146.5" y="730.2" font-size="14.5" fill="#f4f4f4" stroke="#f4f4f4" stroke-width="0.3" text-anchor="start" font-weight="400" textLength="35.0" lengthAdjust="spacingAndGlyphs" >0,43</text><text x="1213" y="730.2" font-size="14.5" fill="#f4f4f4" stroke="#f4f4f4" stroke-width="0.3" text-anchor="start" font-weight="400" textLength="35.0" lengthAdjust="spacingAndGlyphs" >0,25</text><text x="1317" y="730.2" font-size="14.5" fill="#f4f4f4" stroke="#f4f4f4" stroke-width="0.3" text-anchor="start" font-weight="400" textLength="35.0" lengthAdjust="spacingAndGlyphs" >0,35</text><text x="1427.7" y="730.2" font-size="14.5" fill="#f4f4f4" stroke="#f4f4f4" stroke-width="0.3" text-anchor="start" font-weight="400" textLength="35.0" lengthAdjust="spacingAndGlyphs" >0,41</text><text x="1495.5" y="730.2" font-size="14.5" fill="#f4f4f4" stroke="#f4f4f4" stroke-width="0.3" text-anchor="start" font-weight="400" textLength="35.0" lengthAdjust="spacingAndGlyphs" >0,18</text><text x="1610" y="730.2" font-size="14.5" fill="#f4f4f4" stroke="#f4f4f4" stroke-width="0.3" text-anchor="start" font-weight="400" textLength="35.0" lengthAdjust="spacingAndGlyphs" >0,31</text><rect x="328" y="735.4" width="1344" height="23.3" fill="#3e3e3e"/><text x="342.6" y="753.4" font-size="14.5" fill="#f4f4f4" text-anchor="start" font-weight="700" textLength="12.1" lengthAdjust="spacingAndGlyphs" >Y</text><text x="493.8" y="753.4" font-size="14.5" fill="#f4f4f4" stroke="#f4f4f4" stroke-width="0.3" text-anchor="start" font-weight="400" textLength="55.0" lengthAdjust="spacingAndGlyphs" >585,63</text><text x="560.5" y="753.4" font-size="14.5" fill="#f4f4f4" stroke="#f4f4f4" stroke-width="0.3" text-anchor="start" font-weight="400" textLength="55.0" lengthAdjust="spacingAndGlyphs" >462,25</text><text x="631.5" y="753.4" font-size="14.5" fill="#f4f4f4" stroke="#f4f4f4" stroke-width="0.3" text-anchor="start" font-weight="400" textLength="55.0" lengthAdjust="spacingAndGlyphs" >374,02</text><text x="702.6" y="753.4" font-size="14.5" fill="#f4f4f4" stroke="#f4f4f4" stroke-width="0.3" text-anchor="start" font-weight="400" textLength="55.0" lengthAdjust="spacingAndGlyphs" >286,16</text><text x="773.7" y="753.4" font-size="14.5" fill="#f4f4f4" stroke="#f4f4f4" stroke-width="0.3" text-anchor="start" font-weight="400" textLength="55.0" lengthAdjust="spacingAndGlyphs" >197,97</text><text x="844" y="753.4" font-size="14.5" fill="#f4f4f4" stroke="#f4f4f4" stroke-width="0.3" text-anchor="start" font-weight="400" textLength="35.0" lengthAdjust="spacingAndGlyphs" >0,08</text><text x="900" y="753.4" font-size="14.5" fill="#f4f4f4" stroke="#f4f4f4" stroke-width="0.3" text-anchor="start" font-weight="400" textLength="45.0" lengthAdjust="spacingAndGlyphs" >56,35</text><text x="985" y="753.4" font-size="14.5" fill="#f4f4f4" stroke="#f4f4f4" stroke-width="0.3" text-anchor="start" font-weight="400" textLength="55.0" lengthAdjust="spacingAndGlyphs" >204,53</text><text x="1070.5" y="753.4" font-size="14.5" fill="#f4f4f4" stroke="#f4f4f4" stroke-width="0.3" text-anchor="start" font-weight="400" textLength="55.0" lengthAdjust="spacingAndGlyphs" >108,07</text><text x="1146.5" y="753.4" font-size="14.5" fill="#f4f4f4" stroke="#f4f4f4" stroke-width="0.3" text-anchor="start" font-weight="400" textLength="45.0" lengthAdjust="spacingAndGlyphs" >74,64</text><text x="1213" y="753.4" font-size="14.5" fill="#f4f4f4" stroke="#f4f4f4" stroke-width="0.3" text-anchor="start" font-weight="400" textLength="55.0" lengthAdjust="spacingAndGlyphs" >135,69</text><text x="1317" y="753.4" font-size="14.5" fill="#f4f4f4" stroke="#f4f4f4" stroke-width="0.3" text-anchor="start" font-weight="400" textLength="55.0" lengthAdjust="spacingAndGlyphs" >242,66</text><text x="1427.7" y="753.4" font-size="14.5" fill="#f4f4f4" stroke="#f4f4f4" stroke-width="0.3" text-anchor="start" font-weight="400" textLength="55.0" lengthAdjust="spacingAndGlyphs" >166,40</text><text x="1495.5" y="753.4" font-size="14.5" fill="#f4f4f4" stroke="#f4f4f4" stroke-width="0.3" text-anchor="start" font-weight="400" textLength="45.0" lengthAdjust="spacingAndGlyphs" >66,49</text><text x="1610" y="753.4" font-size="14.5" fill="#f4f4f4" stroke="#f4f4f4" stroke-width="0.3" text-anchor="start" font-weight="400" textLength="55.0" lengthAdjust="spacingAndGlyphs" >108,16</text><rect x="328" y="758.6" width="1344" height="23.3" fill="#7c7c7c"/><text x="342.6" y="776.6" font-size="14.5" fill="#f4f4f4" text-anchor="start" font-weight="700" textLength="125.6" lengthAdjust="spacingAndGlyphs" >Target x:CIE31</text><text x="493.8" y="776.6" font-size="14.5" fill="#f4f4f4" stroke="#f4f4f4" stroke-width="0.3" text-anchor="start" font-weight="400" textLength="35.0" lengthAdjust="spacingAndGlyphs" >0,31</text><text x="560.5" y="776.6" font-size="14.5" fill="#f4f4f4" stroke="#f4f4f4" stroke-width="0.3" text-anchor="start" font-weight="400" textLength="35.0" lengthAdjust="spacingAndGlyphs" >0,31</text><text x="631.5" y="776.6" font-size="14.5" fill="#f4f4f4" stroke="#f4f4f4" stroke-width="0.3" text-anchor="start" font-weight="400" textLength="35.0" lengthAdjust="spacingAndGlyphs" >0,31</text><text x="702.6" y="776.6" font-size="14.5" fill="#f4f4f4" stroke="#f4f4f4" stroke-width="0.3" text-anchor="start" font-weight="400" textLength="35.0" lengthAdjust="spacingAndGlyphs" >0,31</text><text x="773.7" y="776.6" font-size="14.5" fill="#f4f4f4" stroke="#f4f4f4" stroke-width="0.3" text-anchor="start" font-weight="400" textLength="35.0" lengthAdjust="spacingAndGlyphs" >0,31</text><text x="844" y="776.6" font-size="14.5" fill="#f4f4f4" stroke="#f4f4f4" stroke-width="0.3" text-anchor="start" font-weight="400" textLength="35.0" lengthAdjust="spacingAndGlyphs" >0,31</text><text x="900" y="776.6" font-size="14.5" fill="#f4f4f4" stroke="#f4f4f4" stroke-width="0.3" text-anchor="start" font-weight="400" textLength="35.0" lengthAdjust="spacingAndGlyphs" >0,40</text><text x="985" y="776.6" font-size="14.5" fill="#f4f4f4" stroke="#f4f4f4" stroke-width="0.3" text-anchor="start" font-weight="400" textLength="35.0" lengthAdjust="spacingAndGlyphs" >0,38</text><text x="1070.5" y="776.6" font-size="14.5" fill="#f4f4f4" stroke="#f4f4f4" stroke-width="0.3" text-anchor="start" font-weight="400" textLength="35.0" lengthAdjust="spacingAndGlyphs" >0,25</text><text x="1146.5" y="776.6" font-size="14.5" fill="#f4f4f4" stroke="#f4f4f4" stroke-width="0.3" text-anchor="start" font-weight="400" textLength="35.0" lengthAdjust="spacingAndGlyphs" >0,34</text><text x="1213" y="776.6" font-size="14.5" fill="#f4f4f4" stroke="#f4f4f4" stroke-width="0.3" text-anchor="start" font-weight="400" textLength="35.0" lengthAdjust="spacingAndGlyphs" >0,27</text><text x="1317" y="776.6" font-size="14.5" fill="#f4f4f4" stroke="#f4f4f4" stroke-width="0.3" text-anchor="start" font-weight="400" textLength="35.0" lengthAdjust="spacingAndGlyphs" >0,26</text><text x="1427.7" y="776.6" font-size="14.5" fill="#f4f4f4" stroke="#f4f4f4" stroke-width="0.3" text-anchor="start" font-weight="400" textLength="35.0" lengthAdjust="spacingAndGlyphs" >0,51</text><text x="1495.5" y="776.6" font-size="14.5" fill="#f4f4f4" stroke="#f4f4f4" stroke-width="0.3" text-anchor="start" font-weight="400" textLength="35.0" lengthAdjust="spacingAndGlyphs" >0,22</text><text x="1610" y="776.6" font-size="14.5" fill="#f4f4f4" stroke="#f4f4f4" stroke-width="0.3" text-anchor="start" font-weight="400" textLength="35.0" lengthAdjust="spacingAndGlyphs" >0,46</text><rect x="328" y="781.8" width="1344" height="23.3" fill="#3e3e3e"/><text x="342.6" y="799.8" font-size="14.5" fill="#f4f4f4" text-anchor="start" font-weight="700" textLength="125.6" lengthAdjust="spacingAndGlyphs" >Target y:CIE31</text><text x="493.8" y="799.8" font-size="14.5" fill="#f4f4f4" stroke="#f4f4f4" stroke-width="0.3" text-anchor="start" font-weight="400" textLength="35.0" lengthAdjust="spacingAndGlyphs" >0,33</text><text x="560.5" y="799.8" font-size="14.5" fill="#f4f4f4" stroke="#f4f4f4" stroke-width="0.3" text-anchor="start" font-weight="400" textLength="35.0" lengthAdjust="spacingAndGlyphs" >0,33</text><text x="631.5" y="799.8" font-size="14.5" fill="#f4f4f4" stroke="#f4f4f4" stroke-width="0.3" text-anchor="start" font-weight="400" textLength="35.0" lengthAdjust="spacingAndGlyphs" >0,33</text><text x="702.6" y="799.8" font-size="14.5" fill="#f4f4f4" stroke="#f4f4f4" stroke-width="0.3" text-anchor="start" font-weight="400" textLength="35.0" lengthAdjust="spacingAndGlyphs" >0,33</text><text x="773.7" y="799.8" font-size="14.5" fill="#f4f4f4" stroke="#f4f4f4" stroke-width="0.3" text-anchor="start" font-weight="400" textLength="35.0" lengthAdjust="spacingAndGlyphs" >0,33</text><text x="844" y="799.8" font-size="14.5" fill="#f4f4f4" stroke="#f4f4f4" stroke-width="0.3" text-anchor="start" font-weight="400" textLength="35.0" lengthAdjust="spacingAndGlyphs" >0,33</text><text x="900" y="799.8" font-size="14.5" fill="#f4f4f4" stroke="#f4f4f4" stroke-width="0.3" text-anchor="start" font-weight="400" textLength="35.0" lengthAdjust="spacingAndGlyphs" >0,36</text><text x="985" y="799.8" font-size="14.5" fill="#f4f4f4" stroke="#f4f4f4" stroke-width="0.3" text-anchor="start" font-weight="400" textLength="35.0" lengthAdjust="spacingAndGlyphs" >0,36</text><text x="1070.5" y="799.8" font-size="14.5" fill="#f4f4f4" stroke="#f4f4f4" stroke-width="0.3" text-anchor="start" font-weight="400" textLength="35.0" lengthAdjust="spacingAndGlyphs" >0,27</text><text x="1146.5" y="799.8" font-size="14.5" fill="#f4f4f4" stroke="#f4f4f4" stroke-width="0.3" text-anchor="start" font-weight="400" textLength="35.0" lengthAdjust="spacingAndGlyphs" >0,43</text><text x="1213" y="799.8" font-size="14.5" fill="#f4f4f4" stroke="#f4f4f4" stroke-width="0.3" text-anchor="start" font-weight="400" textLength="35.0" lengthAdjust="spacingAndGlyphs" >0,25</text><text x="1317" y="799.8" font-size="14.5" fill="#f4f4f4" stroke="#f4f4f4" stroke-width="0.3" text-anchor="start" font-weight="400" textLength="35.0" lengthAdjust="spacingAndGlyphs" >0,36</text><text x="1427.7" y="799.8" font-size="14.5" fill="#f4f4f4" stroke="#f4f4f4" stroke-width="0.3" text-anchor="start" font-weight="400" textLength="35.0" lengthAdjust="spacingAndGlyphs" >0,41</text><text x="1495.5" y="799.8" font-size="14.5" fill="#f4f4f4" stroke="#f4f4f4" stroke-width="0.3" text-anchor="start" font-weight="400" textLength="35.0" lengthAdjust="spacingAndGlyphs" >0,19</text><text x="1610" y="799.8" font-size="14.5" fill="#f4f4f4" stroke="#f4f4f4" stroke-width="0.3" text-anchor="start" font-weight="400" textLength="35.0" lengthAdjust="spacingAndGlyphs" >0,31</text><rect x="328" y="805.0" width="1344" height="23.3" fill="#7c7c7c"/><text x="342.6" y="823.0" font-size="14.5" fill="#f4f4f4" text-anchor="start" font-weight="700" textLength="70.8" lengthAdjust="spacingAndGlyphs" >Target Y</text><text x="493.8" y="823.0" font-size="14.5" fill="#f4f4f4" stroke="#f4f4f4" stroke-width="0.3" text-anchor="start" font-weight="400" textLength="55.0" lengthAdjust="spacingAndGlyphs" >585,63</text><text x="560.5" y="823.0" font-size="14.5" fill="#f4f4f4" stroke="#f4f4f4" stroke-width="0.3" text-anchor="start" font-weight="400" textLength="55.0" lengthAdjust="spacingAndGlyphs" >463,41</text><text x="631.5" y="823.0" font-size="14.5" fill="#f4f4f4" stroke="#f4f4f4" stroke-width="0.3" text-anchor="start" font-weight="400" textLength="55.0" lengthAdjust="spacingAndGlyphs" >373,40</text><text x="702.6" y="823.0" font-size="14.5" fill="#f4f4f4" stroke="#f4f4f4" stroke-width="0.3" text-anchor="start" font-weight="400" textLength="55.0" lengthAdjust="spacingAndGlyphs" >287,56</text><text x="773.7" y="823.0" font-size="14.5" fill="#f4f4f4" stroke="#f4f4f4" stroke-width="0.3" text-anchor="start" font-weight="400" textLength="55.0" lengthAdjust="spacingAndGlyphs" >200,24</text><text x="844" y="823.0" font-size="14.5" fill="#f4f4f4" stroke="#f4f4f4" stroke-width="0.3" text-anchor="start" font-weight="400" textLength="35.0" lengthAdjust="spacingAndGlyphs" >0,00</text><text x="900" y="823.0" font-size="14.5" fill="#f4f4f4" stroke="#f4f4f4" stroke-width="0.3" text-anchor="start" font-weight="400" textLength="45.0" lengthAdjust="spacingAndGlyphs" >58,99</text><text x="985" y="823.0" font-size="14.5" fill="#f4f4f4" stroke="#f4f4f4" stroke-width="0.3" text-anchor="start" font-weight="400" textLength="55.0" lengthAdjust="spacingAndGlyphs" >204,36</text><text x="1070.5" y="823.0" font-size="14.5" fill="#f4f4f4" stroke="#f4f4f4" stroke-width="0.3" text-anchor="start" font-weight="400" textLength="55.0" lengthAdjust="spacingAndGlyphs" >109,50</text><text x="1146.5" y="823.0" font-size="14.5" fill="#f4f4f4" stroke="#f4f4f4" stroke-width="0.3" text-anchor="start" font-weight="400" textLength="45.0" lengthAdjust="spacingAndGlyphs" >76,32</text><text x="1213" y="823.0" font-size="14.5" fill="#f4f4f4" stroke="#f4f4f4" stroke-width="0.3" text-anchor="start" font-weight="400" textLength="55.0" lengthAdjust="spacingAndGlyphs" >136,56</text><text x="1317" y="823.0" font-size="14.5" fill="#f4f4f4" stroke="#f4f4f4" stroke-width="0.3" text-anchor="start" font-weight="400" textLength="55.0" lengthAdjust="spacingAndGlyphs" >245,22</text><text x="1427.7" y="823.0" font-size="14.5" fill="#f4f4f4" stroke="#f4f4f4" stroke-width="0.3" text-anchor="start" font-weight="400" textLength="55.0" lengthAdjust="spacingAndGlyphs" >166,01</text><text x="1495.5" y="823.0" font-size="14.5" fill="#f4f4f4" stroke="#f4f4f4" stroke-width="0.3" text-anchor="start" font-weight="400" textLength="45.0" lengthAdjust="spacingAndGlyphs" >68,83</text><text x="1610" y="823.0" font-size="14.5" fill="#f4f4f4" stroke="#f4f4f4" stroke-width="0.3" text-anchor="start" font-weight="400" textLength="55.0" lengthAdjust="spacingAndGlyphs" >109,37</text><rect x="328" y="828.2" width="1344" height="23.3" fill="#3e3e3e"/><text x="342.6" y="846.2" font-size="14.5" fill="#f4f4f4" text-anchor="start" font-weight="700" textLength="70.5" lengthAdjust="spacingAndGlyphs" >ΔE 2000</text><text x="493.8" y="846.2" font-size="14.5" fill="#f4f4f4" stroke="#f4f4f4" stroke-width="0.3" text-anchor="start" font-weight="400" textLength="35.0" lengthAdjust="spacingAndGlyphs" >3,63</text><text x="560.5" y="846.2" font-size="14.5" fill="#f4f4f4" stroke="#f4f4f4" stroke-width="0.3" text-anchor="start" font-weight="400" textLength="35.0" lengthAdjust="spacingAndGlyphs" >3,68</text><text x="631.5" y="846.2" font-size="14.5" fill="#f4f4f4" stroke="#f4f4f4" stroke-width="0.3" text-anchor="start" font-weight="400" textLength="35.0" lengthAdjust="spacingAndGlyphs" >3,28</text><text x="702.6" y="846.2" font-size="14.5" fill="#f4f4f4" stroke="#f4f4f4" stroke-width="0.3" text-anchor="start" font-weight="400" textLength="35.0" lengthAdjust="spacingAndGlyphs" >3,08</text><text x="773.7" y="846.2" font-size="14.5" fill="#f4f4f4" stroke="#f4f4f4" stroke-width="0.3" text-anchor="start" font-weight="400" textLength="35.0" lengthAdjust="spacingAndGlyphs" >2,75</text><text x="844" y="846.2" font-size="14.5" fill="#f4f4f4" stroke="#f4f4f4" stroke-width="0.3" text-anchor="start" font-weight="400" textLength="35.0" lengthAdjust="spacingAndGlyphs" >0,17</text><text x="900" y="846.2" font-size="14.5" fill="#f4f4f4" stroke="#f4f4f4" stroke-width="0.3" text-anchor="start" font-weight="400" textLength="35.0" lengthAdjust="spacingAndGlyphs" >0,95</text><text x="985" y="846.2" font-size="14.5" fill="#f4f4f4" stroke="#f4f4f4" stroke-width="0.3" text-anchor="start" font-weight="400" textLength="35.0" lengthAdjust="spacingAndGlyphs" >1,30</text><text x="1070.5" y="846.2" font-size="14.5" fill="#f4f4f4" stroke="#f4f4f4" stroke-width="0.3" text-anchor="start" font-weight="400" textLength="35.0" lengthAdjust="spacingAndGlyphs" >1,28</text><text x="1146.5" y="846.2" font-size="14.5" fill="#f4f4f4" stroke="#f4f4f4" stroke-width="0.3" text-anchor="start" font-weight="400" textLength="35.0" lengthAdjust="spacingAndGlyphs" >0,61</text><text x="1213" y="846.2" font-size="14.5" fill="#f4f4f4" stroke="#f4f4f4" stroke-width="0.3" text-anchor="start" font-weight="400" textLength="35.0" lengthAdjust="spacingAndGlyphs" >1,45</text><text x="1317" y="846.2" font-size="14.5" fill="#f4f4f4" stroke="#f4f4f4" stroke-width="0.3" text-anchor="start" font-weight="400" textLength="35.0" lengthAdjust="spacingAndGlyphs" >2,10</text><text x="1427.7" y="846.2" font-size="14.5" fill="#f4f4f4" stroke="#f4f4f4" stroke-width="0.3" text-anchor="start" font-weight="400" textLength="35.0" lengthAdjust="spacingAndGlyphs" >0,93</text><text x="1495.5" y="846.2" font-size="14.5" fill="#f4f4f4" stroke="#f4f4f4" stroke-width="0.3" text-anchor="start" font-weight="400" textLength="35.0" lengthAdjust="spacingAndGlyphs" >1,30</text><text x="1610" y="846.2" font-size="14.5" fill="#f4f4f4" stroke="#f4f4f4" stroke-width="0.3" text-anchor="start" font-weight="400" textLength="35.0" lengthAdjust="spacingAndGlyphs" >0,85</text><rect x="328" y="851.4" width="1344" height="23.3" fill="#7c7c7c"/><text x="342.6" y="869.4" font-size="14.5" fill="#f4f4f4" text-anchor="start" font-weight="700" textLength="58.3" lengthAdjust="spacingAndGlyphs" >ΔE ITP</text><text x="493.8" y="869.4" font-size="14.5" fill="#f4f4f4" stroke="#f4f4f4" stroke-width="0.3" text-anchor="start" font-weight="400" textLength="35.0" lengthAdjust="spacingAndGlyphs" >3,86</text><text x="560.5" y="869.4" font-size="14.5" fill="#f4f4f4" stroke="#f4f4f4" stroke-width="0.3" text-anchor="start" font-weight="400" textLength="35.0" lengthAdjust="spacingAndGlyphs" >4,00</text><text x="631.5" y="869.4" font-size="14.5" fill="#f4f4f4" stroke="#f4f4f4" stroke-width="0.3" text-anchor="start" font-weight="400" textLength="35.0" lengthAdjust="spacingAndGlyphs" >3,72</text><text x="702.6" y="869.4" font-size="14.5" fill="#f4f4f4" stroke="#f4f4f4" stroke-width="0.3" text-anchor="start" font-weight="400" textLength="35.0" lengthAdjust="spacingAndGlyphs" >3,78</text><text x="773.7" y="869.4" font-size="14.5" fill="#f4f4f4" stroke="#f4f4f4" stroke-width="0.3" text-anchor="start" font-weight="400" textLength="35.0" lengthAdjust="spacingAndGlyphs" >3,78</text><text x="844" y="869.4" font-size="14.5" fill="#f4f4f4" stroke="#f4f4f4" stroke-width="0.3" text-anchor="start" font-weight="400" textLength="45.0" lengthAdjust="spacingAndGlyphs" >41,08</text><text x="900" y="869.4" font-size="14.5" fill="#f4f4f4" stroke="#f4f4f4" stroke-width="0.3" text-anchor="start" font-weight="400" textLength="35.0" lengthAdjust="spacingAndGlyphs" >3,69</text><text x="985" y="869.4" font-size="14.5" fill="#f4f4f4" stroke="#f4f4f4" stroke-width="0.3" text-anchor="start" font-weight="400" textLength="35.0" lengthAdjust="spacingAndGlyphs" >3,10</text><text x="1070.5" y="869.4" font-size="14.5" fill="#f4f4f4" stroke="#f4f4f4" stroke-width="0.3" text-anchor="start" font-weight="400" textLength="35.0" lengthAdjust="spacingAndGlyphs" >4,56</text><text x="1146.5" y="869.4" font-size="14.5" fill="#f4f4f4" stroke="#f4f4f4" stroke-width="0.3" text-anchor="start" font-weight="400" textLength="35.0" lengthAdjust="spacingAndGlyphs" >2,18</text><text x="1213" y="869.4" font-size="14.5" fill="#f4f4f4" stroke="#f4f4f4" stroke-width="0.3" text-anchor="start" font-weight="400" textLength="35.0" lengthAdjust="spacingAndGlyphs" >3,97</text><text x="1317" y="869.4" font-size="14.5" fill="#f4f4f4" stroke="#f4f4f4" stroke-width="0.3" text-anchor="start" font-weight="400" textLength="35.0" lengthAdjust="spacingAndGlyphs" >3,76</text><text x="1427.7" y="869.4" font-size="14.5" fill="#f4f4f4" stroke="#f4f4f4" stroke-width="0.3" text-anchor="start" font-weight="400" textLength="35.0" lengthAdjust="spacingAndGlyphs" >2,65</text><text x="1495.5" y="869.4" font-size="14.5" fill="#f4f4f4" stroke="#f4f4f4" stroke-width="0.3" text-anchor="start" font-weight="400" textLength="35.0" lengthAdjust="spacingAndGlyphs" >7,00</text><text x="1610" y="869.4" font-size="14.5" fill="#f4f4f4" stroke="#f4f4f4" stroke-width="0.3" text-anchor="start" font-weight="400" textLength="35.0" lengthAdjust="spacingAndGlyphs" >2,38</text></g><rect x="328" y="875" width="1344" height="15" fill="#626262"/><rect x="349" y="877" width="636" height="11.5" rx="5.7" fill="#444"/><rect x="330" y="877" width="15" height="12" rx="2.5" fill="#7a7a7a"/><path d="M333.5,883 L339,879 L339,887 Z" fill="#3a3a3a"/><rect x="1654" y="877" width="15" height="12" rx="2.5" fill="#7a7a7a"/><path d="M1665,883 L1659.5,879 L1659.5,887 Z" fill="#3a3a3a"/><rect x="1672" y="663" width="2" height="227" fill="#222"/><rect x="979" y="91" width="695" height="557" fill="#1a1a1a"/><rect x="1668" y="91" width="6" height="557" fill="#0f0f0f"/><rect x="986" y="98" width="681" height="544" fill="#333333"/><rect x="1023.7" y="121.7" width="640.1" height="491.8" fill="#242424"/><rect x="1023.0" y="121.0" width="641.5" height="1.4" fill="#9a9a9a"/><rect x="1663.1" y="121.7" width="1.4" height="491.8" fill="#9a9a9a"/><rect x="1023.0" y="121.7" width="1.4" height="498.8" fill="#a8a8a8"/><rect x="1017.7" y="612.8" width="646.8" height="1.4" fill="#a8a8a8"/><text x="1326" y="116" font-size="13.5" fill="#d8d8d8" stroke="#d8d8d8" stroke-width="0.3" text-anchor="middle" font-weight="400" textLength="84" lengthAdjust="spacingAndGlyphs" >CIE 1976 u'v'</text><rect x="1017.7" y="614.00" width="6" height="1.2" fill="#b0b0b0"/><text x="1017" y="619.6" font-size="14" fill="#dcdcdc" stroke="#dcdcdc" stroke-width="0.3" text-anchor="end" font-weight="400" textLength="8.4" lengthAdjust="spacingAndGlyphs" >0</text><rect x="1023.05" y="613.5" width="1.3" height="6.5" fill="#b8b8b8"/><text x="1023.6" y="635" font-size="14" fill="#dcdcdc" stroke="#dcdcdc" stroke-width="0.3" text-anchor="middle" font-weight="400" textLength="8.4" lengthAdjust="spacingAndGlyphs" >0</text><rect x="1017.7" y="572.99" width="6" height="1.2" fill="#b0b0b0"/><text x="1017" y="578.6" font-size="14" fill="#dcdcdc" stroke="#dcdcdc" stroke-width="0.3" text-anchor="end" font-weight="400" textLength="29.4" lengthAdjust="spacingAndGlyphs" >0,05</text><rect x="1076.25" y="613.5" width="1.3" height="6.5" fill="#b8b8b8"/><text x="1076.8" y="635" font-size="14" fill="#dcdcdc" stroke="#dcdcdc" stroke-width="0.3" text-anchor="middle" font-weight="400" textLength="29.4" lengthAdjust="spacingAndGlyphs" >0,05</text><rect x="1017.7" y="531.97" width="6" height="1.2" fill="#b0b0b0"/><text x="1017" y="537.6" font-size="14" fill="#dcdcdc" stroke="#dcdcdc" stroke-width="0.3" text-anchor="end" font-weight="400" textLength="21.0" lengthAdjust="spacingAndGlyphs" >0,1</text><rect x="1129.45" y="613.5" width="1.3" height="6.5" fill="#b8b8b8"/><text x="1130.0" y="635" font-size="14" fill="#dcdcdc" stroke="#dcdcdc" stroke-width="0.3" text-anchor="middle" font-weight="400" textLength="21.0" lengthAdjust="spacingAndGlyphs" >0,1</text><rect x="1017.7" y="490.95" width="6" height="1.2" fill="#b0b0b0"/><text x="1017" y="496.6" font-size="14" fill="#dcdcdc" stroke="#dcdcdc" stroke-width="0.3" text-anchor="end" font-weight="400" textLength="29.4" lengthAdjust="spacingAndGlyphs" >0,15</text><rect x="1182.65" y="613.5" width="1.3" height="6.5" fill="#b8b8b8"/><text x="1183.2" y="635" font-size="14" fill="#dcdcdc" stroke="#dcdcdc" stroke-width="0.3" text-anchor="middle" font-weight="400" textLength="29.4" lengthAdjust="spacingAndGlyphs" >0,15</text><rect x="1017.7" y="449.94" width="6" height="1.2" fill="#b0b0b0"/><text x="1017" y="455.5" font-size="14" fill="#dcdcdc" stroke="#dcdcdc" stroke-width="0.3" text-anchor="end" font-weight="400" textLength="21.0" lengthAdjust="spacingAndGlyphs" >0,2</text><rect x="1235.85" y="613.5" width="1.3" height="6.5" fill="#b8b8b8"/><text x="1236.5" y="635" font-size="14" fill="#dcdcdc" stroke="#dcdcdc" stroke-width="0.3" text-anchor="middle" font-weight="400" textLength="21.0" lengthAdjust="spacingAndGlyphs" >0,2</text><rect x="1017.7" y="408.93" width="6" height="1.2" fill="#b0b0b0"/><text x="1017" y="414.5" font-size="14" fill="#dcdcdc" stroke="#dcdcdc" stroke-width="0.3" text-anchor="end" font-weight="400" textLength="29.4" lengthAdjust="spacingAndGlyphs" >0,25</text><rect x="1289.05" y="613.5" width="1.3" height="6.5" fill="#b8b8b8"/><text x="1289.7" y="635" font-size="14" fill="#dcdcdc" stroke="#dcdcdc" stroke-width="0.3" text-anchor="middle" font-weight="400" textLength="29.4" lengthAdjust="spacingAndGlyphs" >0,25</text><rect x="1017.7" y="367.91" width="6" height="1.2" fill="#b0b0b0"/><text x="1017" y="373.5" font-size="14" fill="#dcdcdc" stroke="#dcdcdc" stroke-width="0.3" text-anchor="end" font-weight="400" textLength="21.0" lengthAdjust="spacingAndGlyphs" >0,3</text><rect x="1342.25" y="613.5" width="1.3" height="6.5" fill="#b8b8b8"/><text x="1342.8" y="635" font-size="14" fill="#dcdcdc" stroke="#dcdcdc" stroke-width="0.3" text-anchor="middle" font-weight="400" textLength="21.0" lengthAdjust="spacingAndGlyphs" >0,3</text><rect x="1017.7" y="326.89" width="6" height="1.2" fill="#b0b0b0"/><text x="1017" y="332.5" font-size="14" fill="#dcdcdc" stroke="#dcdcdc" stroke-width="0.3" text-anchor="end" font-weight="400" textLength="29.4" lengthAdjust="spacingAndGlyphs" >0,35</text><rect x="1395.45" y="613.5" width="1.3" height="6.5" fill="#b8b8b8"/><text x="1396.0" y="635" font-size="14" fill="#dcdcdc" stroke="#dcdcdc" stroke-width="0.3" text-anchor="middle" font-weight="400" textLength="29.4" lengthAdjust="spacingAndGlyphs" >0,35</text><rect x="1017.7" y="285.88" width="6" height="1.2" fill="#b0b0b0"/><text x="1017" y="291.5" font-size="14" fill="#dcdcdc" stroke="#dcdcdc" stroke-width="0.3" text-anchor="end" font-weight="400" textLength="21.0" lengthAdjust="spacingAndGlyphs" >0,4</text><rect x="1448.65" y="613.5" width="1.3" height="6.5" fill="#b8b8b8"/><text x="1449.2" y="635" font-size="14" fill="#dcdcdc" stroke="#dcdcdc" stroke-width="0.3" text-anchor="middle" font-weight="400" textLength="21.0" lengthAdjust="spacingAndGlyphs" >0,4</text><rect x="1017.7" y="244.87" width="6" height="1.2" fill="#b0b0b0"/><text x="1017" y="250.5" font-size="14" fill="#dcdcdc" stroke="#dcdcdc" stroke-width="0.3" text-anchor="end" font-weight="400" textLength="29.4" lengthAdjust="spacingAndGlyphs" >0,45</text><rect x="1501.85" y="613.5" width="1.3" height="6.5" fill="#b8b8b8"/><text x="1502.5" y="635" font-size="14" fill="#dcdcdc" stroke="#dcdcdc" stroke-width="0.3" text-anchor="middle" font-weight="400" textLength="29.4" lengthAdjust="spacingAndGlyphs" >0,45</text><rect x="1017.7" y="203.85" width="6" height="1.2" fill="#b0b0b0"/><text x="1017" y="209.5" font-size="14" fill="#dcdcdc" stroke="#dcdcdc" stroke-width="0.3" text-anchor="end" font-weight="400" textLength="21.0" lengthAdjust="spacingAndGlyphs" >0,5</text><rect x="1555.05" y="613.5" width="1.3" height="6.5" fill="#b8b8b8"/><text x="1555.7" y="635" font-size="14" fill="#dcdcdc" stroke="#dcdcdc" stroke-width="0.3" text-anchor="middle" font-weight="400" textLength="21.0" lengthAdjust="spacingAndGlyphs" >0,5</text><rect x="1017.7" y="162.84" width="6" height="1.2" fill="#b0b0b0"/><text x="1017" y="168.4" font-size="14" fill="#dcdcdc" stroke="#dcdcdc" stroke-width="0.3" text-anchor="end" font-weight="400" textLength="29.4" lengthAdjust="spacingAndGlyphs" >0,55</text><rect x="1608.25" y="613.5" width="1.3" height="6.5" fill="#b8b8b8"/><text x="1608.8" y="635" font-size="14" fill="#dcdcdc" stroke="#dcdcdc" stroke-width="0.3" text-anchor="middle" font-weight="400" textLength="29.4" lengthAdjust="spacingAndGlyphs" >0,55</text><defs><clipPath id="fbclip"><path d="M1297.0,599.5 L1296.8,599.4 L1296.5,599.6 L1296.1,599.6 L1295.8,599.9 L1295.3,600.0 L1294.5,599.9 L1293.6,599.9 L1292.1,599.1 L1289.3,597.3 L1285.5,594.4 L1280.2,590.2 L1273.5,584.4 L1264.8,577.2 L1253.7,567.9 L1240.0,556.5 L1223.4,541.5 L1203.5,521.2 L1177.0,489.1 L1145.7,445.3 L1111.8,390.8 L1079.2,331.8 L1053.7,275.2 L1036.3,227.5 L1027.4,192.0 L1025.2,167.3 L1028.6,150.4 L1036.8,139.6 L1048.3,134.1 L1062.0,132.1 L1077.0,131.6 L1092.1,131.8 L1108.0,132.5 L1125.1,133.7 L1143.6,135.4 L1164.0,137.5 L1186.6,139.9 L1211.6,142.7 L1239.2,145.8 L1269.6,149.3 L1302.8,153.2 L1338.6,157.3 L1376.4,161.6 L1415.3,166.1 L1453.0,170.5 L1489.7,174.7 L1522.8,178.5 L1552.2,181.9 L1577.2,184.8 L1598.2,187.2 L1615.8,189.2 L1631.1,191.0 L1644.0,192.5 L1654.6,193.7 L1662.6,194.6 L1668.9,195.3 L1673.6,195.9 L1676.7,196.2 L1679.3,196.5 L1681.3,196.8 L1683.3,197.0 L1685.1,197.2 L1686.1,197.3 L1686.7,197.4 L1687.0,197.4 Z"/></clipPath><filter id="fbblur" x="-5%" y="-5%" width="110%" height="110%"><feGaussianBlur stdDeviation="6"/></filter></defs><g id="ciefb" clip-path="url(#fbclip)"><g filter="url(#fbblur)"><rect x="1024" y="120" width="16" height="16" fill="#009900"/><rect x="1040" y="120" width="16" height="16" fill="#009900"/><rect x="1056" y="120" width="16" height="16" fill="#009900"/><rect x="1072" y="120" width="16" height="16" fill="#009900"/><rect x="1088" y="120" width="16" height="16" fill="#009900"/><rect x="1104" y="120" width="16" height="16" fill="#009900"/><rect x="1120" y="120" width="16" height="16" fill="#009900"/><rect x="1136" y="120" width="16" height="16" fill="#009900"/><rect x="1152" y="120" width="16" height="16" fill="#009900"/><rect x="1168" y="120" width="16" height="16" fill="#169900"/><rect x="1184" y="120" width="16" height="16" fill="#2f9900"/><rect x="1200" y="120" width="16" height="16" fill="#4a9900"/><rect x="1216" y="120" width="16" height="16" fill="#699900"/><rect x="1232" y="120" width="16" height="16" fill="#8b9900"/><rect x="1248" y="120" width="16" height="16" fill="#998300"/><rect x="1264" y="120" width="16" height="16" fill="#996900"/><rect x="1280" y="120" width="16" height="16" fill="#995600"/><rect x="1296" y="120" width="16" height="16" fill="#994700"/><rect x="1312" y="120" width="16" height="16" fill="#993a00"/><rect x="1328" y="120" width="16" height="16" fill="#993100"/><rect x="1344" y="120" width="16" height="16" fill="#992800"/><rect x="1360" y="120" width="16" height="16" fill="#992200"/><rect x="1376" y="120" width="16" height="16" fill="#991c00"/><rect x="1392" y="120" width="16" height="16" fill="#991600"/><rect x="1408" y="120" width="16" height="16" fill="#991200"/><rect x="1424" y="120" width="16" height="16" fill="#990e00"/><rect x="1440" y="120" width="16" height="16" fill="#990a00"/><rect x="1456" y="120" width="16" height="16" fill="#990700"/><rect x="1472" y="120" width="16" height="16" fill="#990400"/><rect x="1488" y="120" width="16" height="16" fill="#990200"/><rect x="1504" y="120" width="16" height="16" fill="#990000"/><rect x="1520" y="120" width="16" height="16" fill="#990000"/><rect x="1536" y="120" width="16" height="16" fill="#990000"/><rect x="1552" y="120" width="16" height="16" fill="#990000"/><rect x="1568" y="120" width="16" height="16" fill="#990000"/><rect x="1584" y="120" width="16" height="16" fill="#990000"/><rect x="1600" y="120" width="16" height="16" fill="#990000"/><rect x="1616" y="120" width="16" height="16" fill="#990000"/><rect x="1632" y="120" width="16" height="16" fill="#990000"/><rect x="1648" y="120" width="16" height="16" fill="#990000"/><rect x="1024" y="136" width="16" height="16" fill="#009900"/><rect x="1040" y="136" width="16" height="16" fill="#009900"/><rect x="1056" y="136" width="16" height="16" fill="#009900"/><rect x="1072" y="136" width="16" height="16" fill="#009900"/><rect x="1088" y="136" width="16" height="16" fill="#009900"/><rect x="1104" y="136" width="16" height="16" fill="#009900"/><rect x="1120" y="136" width="16" height="16" fill="#009900"/><rect x="1136" y="136" width="16" height="16" fill="#009900"/><rect x="1152" y="136" width="16" height="16" fill="#039900"/><rect x="1168" y="136" width="16" height="16" fill="#1a9900"/><rect x="1184" y="136" width="16" height="16" fill="#339900"/><rect x="1200" y="136" width="16" height="16" fill="#4f9900"/><rect x="1216" y="136" width="16" height="16" fill="#6e9900"/><rect x="1232" y="136" width="16" height="16" fill="#919900"/><rect x="1248" y="136" width="16" height="16" fill="#997e00"/><rect x="1264" y="136" width="16" height="16" fill="#996500"/><rect x="1280" y="136" width="16" height="16" fill="#995300"/><rect x="1296" y="136" width="16" height="16" fill="#994400"/><rect x="1312" y="136" width="16" height="16" fill="#993900"/><rect x="1328" y="136" width="16" height="16" fill="#992f00"/><rect x="1344" y="136" width="16" height="16" fill="#992700"/><rect x="1360" y="136" width="16" height="16" fill="#992100"/><rect x="1376" y="136" width="16" height="16" fill="#991b00"/><rect x="1392" y="136" width="16" height="16" fill="#991600"/><rect x="1408" y="136" width="16" height="16" fill="#991100"/><rect x="1424" y="136" width="16" height="16" fill="#990d00"/><rect x="1440" y="136" width="16" height="16" fill="#990a00"/><rect x="1456" y="136" width="16" height="16" fill="#990700"/><rect x="1472" y="136" width="16" height="16" fill="#990400"/><rect x="1488" y="136" width="16" height="16" fill="#990200"/><rect x="1504" y="136" width="16" height="16" fill="#990000"/><rect x="1520" y="136" width="16" height="16" fill="#990000"/><rect x="1536" y="136" width="16" height="16" fill="#990000"/><rect x="1552" y="136" width="16" height="16" fill="#990000"/><rect x="1568" y="136" width="16" height="16" fill="#990000"/><rect x="1584" y="136" width="16" height="16" fill="#990000"/><rect x="1600" y="136" width="16" height="16" fill="#990000"/><rect x="1616" y="136" width="16" height="16" fill="#990000"/><rect x="1632" y="136" width="16" height="16" fill="#990000"/><rect x="1648" y="136" width="16" height="16" fill="#990000"/><rect x="1024" y="152" width="16" height="16" fill="#009900"/><rect x="1040" y="152" width="16" height="16" fill="#009900"/><rect x="1056" y="152" width="16" height="16" fill="#009900"/><rect x="1072" y="152" width="16" height="16" fill="#009901"/><rect x="1088" y="152" width="16" height="16" fill="#009903"/><rect x="1104" y="152" width="16" height="16" fill="#009905"/><rect x="1120" y="152" width="16" height="16" fill="#009907"/><rect x="1136" y="152" width="16" height="16" fill="#009909"/><rect x="1152" y="152" width="16" height="16" fill="#04ff12"/><rect x="1168" y="152" width="16" height="16" fill="#2dff0f"/><rect x="1184" y="152" width="16" height="16" fill="#59ff0c"/><rect x="1200" y="152" width="16" height="16" fill="#8aff09"/><rect x="1216" y="152" width="16" height="16" fill="#c0ff06"/><rect x="1232" y="152" width="16" height="16" fill="#fcff02"/><rect x="1248" y="152" width="16" height="16" fill="#997a00"/><rect x="1264" y="152" width="16" height="16" fill="#996200"/><rect x="1280" y="152" width="16" height="16" fill="#995000"/><rect x="1296" y="152" width="16" height="16" fill="#994200"/><rect x="1312" y="152" width="16" height="16" fill="#993700"/><rect x="1328" y="152" width="16" height="16" fill="#992e00"/><rect x="1344" y="152" width="16" height="16" fill="#992600"/><rect x="1360" y="152" width="16" height="16" fill="#992000"/><rect x="1376" y="152" width="16" height="16" fill="#991a00"/><rect x="1392" y="152" width="16" height="16" fill="#991500"/><rect x="1408" y="152" width="16" height="16" fill="#991100"/><rect x="1424" y="152" width="16" height="16" fill="#990d00"/><rect x="1440" y="152" width="16" height="16" fill="#990900"/><rect x="1456" y="152" width="16" height="16" fill="#990600"/><rect x="1472" y="152" width="16" height="16" fill="#990400"/><rect x="1488" y="152" width="16" height="16" fill="#990100"/><rect x="1504" y="152" width="16" height="16" fill="#990000"/><rect x="1520" y="152" width="16" height="16" fill="#990000"/><rect x="1536" y="152" width="16" height="16" fill="#990000"/><rect x="1552" y="152" width="16" height="16" fill="#990000"/><rect x="1568" y="152" width="16" height="16" fill="#990000"/><rect x="1584" y="152" width="16" height="16" fill="#990000"/><rect x="1600" y="152" width="16" height="16" fill="#990000"/><rect x="1616" y="152" width="16" height="16" fill="#990000"/><rect x="1632" y="152" width="16" height="16" fill="#990000"/><rect x="1648" y="152" width="16" height="16" fill="#990000"/><rect x="1024" y="168" width="16" height="16" fill="#009910"/><rect x="1040" y="168" width="16" height="16" fill="#009912"/><rect x="1056" y="168" width="16" height="16" fill="#009914"/><rect x="1072" y="168" width="16" height="16" fill="#009916"/><rect x="1088" y="168" width="16" height="16" fill="#009919"/><rect x="1104" y="168" width="16" height="16" fill="#00991b"/><rect x="1120" y="168" width="16" height="16" fill="#00991d"/><rect x="1136" y="168" width="16" height="16" fill="#00991f"/><rect x="1152" y="168" width="16" height="16" fill="#009922"/><rect x="1168" y="168" width="16" height="16" fill="#28ff37"/><rect x="1184" y="168" width="16" height="16" fill="#56ff36"/><rect x="1200" y="168" width="16" height="16" fill="#8aff35"/><rect x="1216" y="168" width="16" height="16" fill="#c2ff34"/><rect x="1232" y="168" width="16" height="16" fill="#fffb31"/><rect x="1248" y="168" width="16" height="16" fill="#ffc425"/><rect x="1264" y="168" width="16" height="16" fill="#ff9e1d"/><rect x="1280" y="168" width="16" height="16" fill="#ff8016"/><rect x="1296" y="168" width="16" height="16" fill="#ff6a11"/><rect x="1312" y="168" width="16" height="16" fill="#ff580d"/><rect x="1328" y="168" width="16" height="16" fill="#ff490a"/><rect x="1344" y="168" width="16" height="16" fill="#ff3d07"/><rect x="1360" y="168" width="16" height="16" fill="#ff3205"/><rect x="1376" y="168" width="16" height="16" fill="#ff2903"/><rect x="1392" y="168" width="16" height="16" fill="#ff2201"/><rect x="1408" y="168" width="16" height="16" fill="#ff1b00"/><rect x="1424" y="168" width="16" height="16" fill="#990c00"/><rect x="1440" y="168" width="16" height="16" fill="#990900"/><rect x="1456" y="168" width="16" height="16" fill="#990600"/><rect x="1472" y="168" width="16" height="16" fill="#990300"/><rect x="1488" y="168" width="16" height="16" fill="#990100"/><rect x="1504" y="168" width="16" height="16" fill="#990000"/><rect x="1520" y="168" width="16" height="16" fill="#990000"/><rect x="1536" y="168" width="16" height="16" fill="#990000"/><rect x="1552" y="168" width="16" height="16" fill="#990000"/><rect x="1568" y="168" width="16" height="16" fill="#990000"/><rect x="1584" y="168" width="16" height="16" fill="#990000"/><rect x="1600" y="168" width="16" height="16" fill="#990000"/><rect x="1616" y="168" width="16" height="16" fill="#990000"/><rect x="1632" y="168" width="16" height="16" fill="#990000"/><rect x="1648" y="168" width="16" height="16" fill="#990000"/><rect x="1024" y="184" width="16" height="16" fill="#009927"/><rect x="1040" y="184" width="16" height="16" fill="#009929"/><rect x="1056" y="184" width="16" height="16" fill="#00992c"/><rect x="1072" y="184" width="16" height="16" fill="#00992e"/><rect x="1088" y="184" width="16" height="16" fill="#009930"/><rect x="1104" y="184" width="16" height="16" fill="#009933"/><rect x="1120" y="184" width="16" height="16" fill="#009935"/><rect x="1136" y="184" width="16" height="16" fill="#009938"/><rect x="1152" y="184" width="16" height="16" fill="#00993a"/><rect x="1168" y="184" width="16" height="16" fill="#23ff63"/><rect x="1184" y="184" width="16" height="16" fill="#53ff64"/><rect x="1200" y="184" width="16" height="16" fill="#89ff65"/><rect x="1216" y="184" width="16" height="16" fill="#c5ff67"/><rect x="1232" y="184" width="16" height="16" fill="#fff464"/><rect x="1248" y="184" width="16" height="16" fill="#ffbd4f"/><rect x="1264" y="184" width="16" height="16" fill="#ff9740"/><rect x="1280" y="184" width="16" height="16" fill="#ff7a35"/><rect x="1296" y="184" width="16" height="16" fill="#ff642c"/><rect x="1312" y="184" width="16" height="16" fill="#ff5226"/><rect x="1328" y="184" width="16" height="16" fill="#ff4320"/><rect x="1344" y="184" width="16" height="16" fill="#ff371b"/><rect x="1360" y="184" width="16" height="16" fill="#ff2d17"/><rect x="1376" y="184" width="16" height="16" fill="#ff2514"/><rect x="1392" y="184" width="16" height="16" fill="#ff1d11"/><rect x="1408" y="184" width="16" height="16" fill="#ff170f"/><rect x="1424" y="184" width="16" height="16" fill="#ff110c"/><rect x="1440" y="184" width="16" height="16" fill="#ff0c0a"/><rect x="1456" y="184" width="16" height="16" fill="#ff0709"/><rect x="1472" y="184" width="16" height="16" fill="#ff0307"/><rect x="1488" y="184" width="16" height="16" fill="#990003"/><rect x="1504" y="184" width="16" height="16" fill="#990000"/><rect x="1520" y="184" width="16" height="16" fill="#990000"/><rect x="1536" y="184" width="16" height="16" fill="#990000"/><rect x="1552" y="184" width="16" height="16" fill="#990000"/><rect x="1568" y="184" width="16" height="16" fill="#990000"/><rect x="1584" y="184" width="16" height="16" fill="#990000"/><rect x="1600" y="184" width="16" height="16" fill="#990000"/><rect x="1616" y="184" width="16" height="16" fill="#990000"/><rect x="1632" y="184" width="16" height="16" fill="#990000"/><rect x="1648" y="184" width="16" height="16" fill="#990000"/><rect x="1024" y="200" width="16" height="16" fill="#009940"/><rect x="1040" y="200" width="16" height="16" fill="#009943"/><rect x="1056" y="200" width="16" height="16" fill="#009946"/><rect x="1072" y="200" width="16" height="16" fill="#009948"/><rect x="1088" y="200" width="16" height="16" fill="#00994b"/><rect x="1104" y="200" width="16" height="16" fill="#00994e"/><rect x="1120" y="200" width="16" height="16" fill="#009950"/><rect x="1136" y="200" width="16" height="16" fill="#009953"/><rect x="1152" y="200" width="16" height="16" fill="#009956"/><rect x="1168" y="200" width="16" height="16" fill="#1dff93"/><rect x="1184" y="200" width="16" height="16" fill="#50ff97"/><rect x="1200" y="200" width="16" height="16" fill="#89ff9c"/><rect x="1216" y="200" width="16" height="16" fill="#c8ffa1"/><rect x="1232" y="200" width="16" height="16" fill="#ffed9b"/><rect x="1248" y="200" width="16" height="16" fill="#ffb67c"/><rect x="1264" y="200" width="16" height="16" fill="#ff9065"/><rect x="1280" y="200" width="16" height="16" fill="#ff7355"/><rect x="1296" y="200" width="16" height="16" fill="#ff5d49"/><rect x="1312" y="200" width="16" height="16" fill="#ff4c3f"/><rect x="1328" y="200" width="16" height="16" fill="#ff3e37"/><rect x="1344" y="200" width="16" height="16" fill="#ff3230"/><rect x="1360" y="200" width="16" height="16" fill="#ff282b"/><rect x="1376" y="200" width="16" height="16" fill="#ff2026"/><rect x="1392" y="200" width="16" height="16" fill="#ff1922"/><rect x="1408" y="200" width="16" height="16" fill="#ff121e"/><rect x="1424" y="200" width="16" height="16" fill="#ff0d1b"/><rect x="1440" y="200" width="16" height="16" fill="#ff0818"/><rect x="1456" y="200" width="16" height="16" fill="#ff0316"/><rect x="1472" y="200" width="16" height="16" fill="#99000b"/><rect x="1488" y="200" width="16" height="16" fill="#990008"/><rect x="1504" y="200" width="16" height="16" fill="#990005"/><rect x="1520" y="200" width="16" height="16" fill="#990002"/><rect x="1536" y="200" width="16" height="16" fill="#990000"/><rect x="1552" y="200" width="16" height="16" fill="#990000"/><rect x="1568" y="200" width="16" height="16" fill="#990000"/><rect x="1584" y="200" width="16" height="16" fill="#990000"/><rect x="1600" y="200" width="16" height="16" fill="#990000"/><rect x="1616" y="200" width="16" height="16" fill="#990000"/><rect x="1632" y="200" width="16" height="16" fill="#990000"/><rect x="1648" y="200" width="16" height="16" fill="#990000"/><rect x="1024" y="216" width="16" height="16" fill="#00995d"/><rect x="1040" y="216" width="16" height="16" fill="#009960"/><rect x="1056" y="216" width="16" height="16" fill="#009963"/><rect x="1072" y="216" width="16" height="16" fill="#009966"/><rect x="1088" y="216" width="16" height="16" fill="#009969"/><rect x="1104" y="216" width="16" height="16" fill="#00996c"/><rect x="1120" y="216" width="16" height="16" fill="#00996f"/><rect x="1136" y="216" width="16" height="16" fill="#009972"/><rect x="1152" y="216" width="16" height="16" fill="#009975"/><rect x="1168" y="216" width="16" height="16" fill="#17ffc9"/><rect x="1184" y="216" width="16" height="16" fill="#4cffd0"/><rect x="1200" y="216" width="16" height="16" fill="#88ffd8"/><rect x="1216" y="216" width="16" height="16" fill="#ccffe2"/><rect x="1232" y="216" width="16" height="16" fill="#ffe6d6"/><rect x="1248" y="216" width="16" height="16" fill="#ffaeaa"/><rect x="1264" y="216" width="16" height="16" fill="#ff888d"/><rect x="1280" y="216" width="16" height="16" fill="#ff6c77"/><rect x="1296" y="216" width="16" height="16" fill="#ff5666"/><rect x="1312" y="216" width="16" height="16" fill="#ff4559"/><rect x="1328" y="216" width="16" height="16" fill="#ff384e"/><rect x="1344" y="216" width="16" height="16" fill="#ff2c45"/><rect x="1360" y="216" width="16" height="16" fill="#ff233e"/><rect x="1376" y="216" width="16" height="16" fill="#ff1b38"/><rect x="1392" y="216" width="16" height="16" fill="#ff1432"/><rect x="1408" y="216" width="16" height="16" fill="#ff0e2e"/><rect x="1424" y="216" width="16" height="16" fill="#ff0829"/><rect x="1440" y="216" width="16" height="16" fill="#ff0426"/><rect x="1456" y="216" width="16" height="16" fill="#ff0023"/><rect x="1472" y="216" width="16" height="16" fill="#990011"/><rect x="1488" y="216" width="16" height="16" fill="#99000e"/><rect x="1504" y="216" width="16" height="16" fill="#99000a"/><rect x="1520" y="216" width="16" height="16" fill="#990007"/><rect x="1536" y="216" width="16" height="16" fill="#990004"/><rect x="1552" y="216" width="16" height="16" fill="#990002"/><rect x="1568" y="216" width="16" height="16" fill="#990000"/><rect x="1584" y="216" width="16" height="16" fill="#990000"/><rect x="1600" y="216" width="16" height="16" fill="#990000"/><rect x="1616" y="216" width="16" height="16" fill="#990000"/><rect x="1632" y="216" width="16" height="16" fill="#990000"/><rect x="1648" y="216" width="16" height="16" fill="#990000"/><rect x="1024" y="232" width="16" height="16" fill="#00997d"/><rect x="1040" y="232" width="16" height="16" fill="#009980"/><rect x="1056" y="232" width="16" height="16" fill="#009983"/><rect x="1072" y="232" width="16" height="16" fill="#009986"/><rect x="1088" y="232" width="16" height="16" fill="#00998a"/><rect x="1104" y="232" width="16" height="16" fill="#00998d"/><rect x="1120" y="232" width="16" height="16" fill="#009991"/><rect x="1136" y="232" width="16" height="16" fill="#009994"/><rect x="1152" y="232" width="16" height="16" fill="#009998"/><rect x="1168" y="232" width="16" height="16" fill="#0ff8ff"/><rect x="1184" y="232" width="16" height="16" fill="#43eeff"/><rect x="1200" y="232" width="16" height="16" fill="#79e3ff"/><rect x="1216" y="232" width="16" height="16" fill="#b0d8ff"/><rect x="1232" y="232" width="16" height="16" fill="#eaccff"/><rect x="1248" y="232" width="16" height="16" fill="#ffa6dc"/><rect x="1264" y="232" width="16" height="16" fill="#ff80b6"/><rect x="1280" y="232" width="16" height="16" fill="#ff649a"/><rect x="1296" y="232" width="16" height="16" fill="#ff4f85"/><rect x="1312" y="232" width="16" height="16" fill="#ff3f74"/><rect x="1328" y="232" width="16" height="16" fill="#ff3266"/><rect x="1344" y="232" width="16" height="16" fill="#ff275b"/><rect x="1360" y="232" width="16" height="16" fill="#ff1e52"/><rect x="1376" y="232" width="16" height="16" fill="#ff164a"/><rect x="1392" y="232" width="16" height="16" fill="#ff0f43"/><rect x="1408" y="232" width="16" height="16" fill="#ff093e"/><rect x="1424" y="232" width="16" height="16" fill="#ff0438"/><rect x="1440" y="232" width="16" height="16" fill="#ff0034"/><rect x="1456" y="232" width="16" height="16" fill="#99001b"/><rect x="1472" y="232" width="16" height="16" fill="#990017"/><rect x="1488" y="232" width="16" height="16" fill="#990014"/><rect x="1504" y="232" width="16" height="16" fill="#990010"/><rect x="1520" y="232" width="16" height="16" fill="#99000d"/><rect x="1536" y="232" width="16" height="16" fill="#99000a"/><rect x="1552" y="232" width="16" height="16" fill="#990007"/><rect x="1568" y="232" width="16" height="16" fill="#990004"/><rect x="1584" y="232" width="16" height="16" fill="#990001"/><rect x="1600" y="232" width="16" height="16" fill="#990000"/><rect x="1616" y="232" width="16" height="16" fill="#990000"/><rect x="1632" y="232" width="16" height="16" fill="#990000"/><rect x="1648" y="232" width="16" height="16" fill="#990000"/><rect x="1024" y="248" width="16" height="16" fill="#009199"/><rect x="1040" y="248" width="16" height="16" fill="#008e99"/><rect x="1056" y="248" width="16" height="16" fill="#008a99"/><rect x="1072" y="248" width="16" height="16" fill="#008799"/><rect x="1088" y="248" width="16" height="16" fill="#008499"/><rect x="1104" y="248" width="16" height="16" fill="#008299"/><rect x="1120" y="248" width="16" height="16" fill="#007f99"/><rect x="1136" y="248" width="16" height="16" fill="#007c99"/><rect x="1152" y="248" width="16" height="16" fill="#007999"/><rect x="1168" y="248" width="16" height="16" fill="#06c6ff"/><rect x="1184" y="248" width="16" height="16" fill="#31bcff"/><rect x="1200" y="248" width="16" height="16" fill="#5eb2ff"/><rect x="1216" y="248" width="16" height="16" fill="#8ca8ff"/><rect x="1232" y="248" width="16" height="16" fill="#bc9dff"/><rect x="1248" y="248" width="16" height="16" fill="#ed93ff"/><rect x="1264" y="248" width="16" height="16" fill="#ff78e1"/><rect x="1280" y="248" width="16" height="16" fill="#ff5dbe"/><rect x="1296" y="248" width="16" height="16" fill="#ff48a4"/><rect x="1312" y="248" width="16" height="16" fill="#ff3890"/><rect x="1328" y="248" width="16" height="16" fill="#ff2b7f"/><rect x="1344" y="248" width="16" height="16" fill="#ff2172"/><rect x="1360" y="248" width="16" height="16" fill="#ff1867"/><rect x="1376" y="248" width="16" height="16" fill="#ff115d"/><rect x="1392" y="248" width="16" height="16" fill="#ff0a55"/><rect x="1408" y="248" width="16" height="16" fill="#ff054e"/><rect x="1424" y="248" width="16" height="16" fill="#ff0048"/><rect x="1440" y="248" width="16" height="16" fill="#990026"/><rect x="1456" y="248" width="16" height="16" fill="#990022"/><rect x="1472" y="248" width="16" height="16" fill="#99001e"/><rect x="1488" y="248" width="16" height="16" fill="#99001a"/><rect x="1504" y="248" width="16" height="16" fill="#990016"/><rect x="1520" y="248" width="16" height="16" fill="#990013"/><rect x="1536" y="248" width="16" height="16" fill="#99000f"/><rect x="1552" y="248" width="16" height="16" fill="#99000c"/><rect x="1568" y="248" width="16" height="16" fill="#990009"/><rect x="1584" y="248" width="16" height="16" fill="#990006"/><rect x="1600" y="248" width="16" height="16" fill="#990003"/><rect x="1616" y="248" width="16" height="16" fill="#990000"/><rect x="1632" y="248" width="16" height="16" fill="#990000"/><rect x="1648" y="248" width="16" height="16" fill="#990000"/><rect x="1024" y="264" width="16" height="16" fill="#007399"/><rect x="1040" y="264" width="16" height="16" fill="#007199"/><rect x="1056" y="264" width="16" height="16" fill="#006f99"/><rect x="1072" y="264" width="16" height="16" fill="#006c99"/><rect x="1088" y="264" width="16" height="16" fill="#006a99"/><rect x="1104" y="264" width="16" height="16" fill="#006899"/><rect x="1120" y="264" width="16" height="16" fill="#006699"/><rect x="1136" y="264" width="16" height="16" fill="#006499"/><rect x="1152" y="264" width="16" height="16" fill="#006299"/><rect x="1168" y="264" width="16" height="16" fill="#006099"/><rect x="1184" y="264" width="16" height="16" fill="#2598ff"/><rect x="1200" y="264" width="16" height="16" fill="#4b8fff"/><rect x="1216" y="264" width="16" height="16" fill="#7286ff"/><rect x="1232" y="264" width="16" height="16" fill="#9b7cff"/><rect x="1248" y="264" width="16" height="16" fill="#c572ff"/><rect x="1264" y="264" width="16" height="16" fill="#ef68ff"/><rect x="1280" y="264" width="16" height="16" fill="#ff55e5"/><rect x="1296" y="264" width="16" height="16" fill="#ff41c5"/><rect x="1312" y="264" width="16" height="16" fill="#ff31ad"/><rect x="1328" y="264" width="16" height="16" fill="#ff2599"/><rect x="1344" y="264" width="16" height="16" fill="#ff1b89"/><rect x="1360" y="264" width="16" height="16" fill="#ff127c"/><rect x="1376" y="264" width="16" height="16" fill="#ff0b71"/><rect x="1392" y="264" width="16" height="16" fill="#ff0567"/><rect x="1408" y="264" width="16" height="16" fill="#ff005f"/><rect x="1424" y="264" width="16" height="16" fill="#990033"/><rect x="1440" y="264" width="16" height="16" fill="#99002e"/><rect x="1456" y="264" width="16" height="16" fill="#99002a"/><rect x="1472" y="264" width="16" height="16" fill="#990025"/><rect x="1488" y="264" width="16" height="16" fill="#990021"/><rect x="1504" y="264" width="16" height="16" fill="#99001d"/><rect x="1520" y="264" width="16" height="16" fill="#990019"/><rect x="1536" y="264" width="16" height="16" fill="#990015"/><rect x="1552" y="264" width="16" height="16" fill="#990012"/><rect x="1568" y="264" width="16" height="16" fill="#99000e"/><rect x="1584" y="264" width="16" height="16" fill="#99000b"/><rect x="1600" y="264" width="16" height="16" fill="#990008"/><rect x="1616" y="264" width="16" height="16" fill="#990005"/><rect x="1632" y="264" width="16" height="16" fill="#990002"/><rect x="1648" y="264" width="16" height="16" fill="#990000"/><rect x="1024" y="280" width="16" height="16" fill="#005d99"/><rect x="1040" y="280" width="16" height="16" fill="#005c99"/><rect x="1056" y="280" width="16" height="16" fill="#005a99"/><rect x="1072" y="280" width="16" height="16" fill="#005899"/><rect x="1088" y="280" width="16" height="16" fill="#005699"/><rect x="1104" y="280" width="16" height="16" fill="#005599"/><rect x="1120" y="280" width="16" height="16" fill="#005399"/><rect x="1136" y="280" width="16" height="16" fill="#005299"/><rect x="1152" y="280" width="16" height="16" fill="#005099"/><rect x="1168" y="280" width="16" height="16" fill="#004f99"/><rect x="1184" y="280" width="16" height="16" fill="#1b7cff"/><rect x="1200" y="280" width="16" height="16" fill="#3c74ff"/><rect x="1216" y="280" width="16" height="16" fill="#5f6cff"/><rect x="1232" y="280" width="16" height="16" fill="#8263ff"/><rect x="1248" y="280" width="16" height="16" fill="#a65aff"/><rect x="1264" y="280" width="16" height="16" fill="#cb51ff"/><rect x="1280" y="280" width="16" height="16" fill="#f148ff"/><rect x="1296" y="280" width="16" height="16" fill="#ff39e8"/><rect x="1312" y="280" width="16" height="16" fill="#ff2acb"/><rect x="1328" y="280" width="16" height="16" fill="#ff1eb4"/><rect x="1344" y="280" width="16" height="16" fill="#ff15a1"/><rect x="1360" y="280" width="16" height="16" fill="#ff0d92"/><rect x="1376" y="280" width="16" height="16" fill="#ff0684"/><rect x="1392" y="280" width="16" height="16" fill="#ff0079"/><rect x="1408" y="280" width="16" height="16" fill="#990042"/><rect x="1424" y="280" width="16" height="16" fill="#99003d"/><rect x="1440" y="280" width="16" height="16" fill="#990037"/><rect x="1456" y="280" width="16" height="16" fill="#990032"/><rect x="1472" y="280" width="16" height="16" fill="#99002d"/><rect x="1488" y="280" width="16" height="16" fill="#990028"/><rect x="1504" y="280" width="16" height="16" fill="#990024"/><rect x="1520" y="280" width="16" height="16" fill="#990020"/><rect x="1536" y="280" width="16" height="16" fill="#99001c"/><rect x="1552" y="280" width="16" height="16" fill="#990018"/><rect x="1568" y="280" width="16" height="16" fill="#990014"/><rect x="1584" y="280" width="16" height="16" fill="#990011"/><rect x="1600" y="280" width="16" height="16" fill="#99000d"/><rect x="1616" y="280" width="16" height="16" fill="#99000a"/><rect x="1632" y="280" width="16" height="16" fill="#990007"/><rect x="1648" y="280" width="16" height="16" fill="#990004"/><rect x="1024" y="296" width="16" height="16" fill="#004d99"/><rect x="1040" y="296" width="16" height="16" fill="#004b99"/><rect x="1056" y="296" width="16" height="16" fill="#004a99"/><rect x="1072" y="296" width="16" height="16" fill="#004899"/><rect x="1088" y="296" width="16" height="16" fill="#004799"/><rect x="1104" y="296" width="16" height="16" fill="#004699"/><rect x="1120" y="296" width="16" height="16" fill="#004499"/><rect x="1136" y="296" width="16" height="16" fill="#004399"/><rect x="1152" y="296" width="16" height="16" fill="#004299"/><rect x="1168" y="296" width="16" height="16" fill="#004199"/><rect x="1184" y="296" width="16" height="16" fill="#1366ff"/><rect x="1200" y="296" width="16" height="16" fill="#315fff"/><rect x="1216" y="296" width="16" height="16" fill="#5057ff"/><rect x="1232" y="296" width="16" height="16" fill="#6f4fff"/><rect x="1248" y="296" width="16" height="16" fill="#8f47ff"/><rect x="1264" y="296" width="16" height="16" fill="#af3fff"/><rect x="1280" y="296" width="16" height="16" fill="#d037ff"/><rect x="1296" y="296" width="16" height="16" fill="#f22eff"/><rect x="1312" y="296" width="16" height="16" fill="#ff22ea"/><rect x="1328" y="296" width="16" height="16" fill="#ff17cf"/><rect x="1344" y="296" width="16" height="16" fill="#ff0eba"/><rect x="1360" y="296" width="16" height="16" fill="#ff07a8"/><rect x="1376" y="296" width="16" height="16" fill="#ff0099"/><rect x="1392" y="296" width="16" height="16" fill="#990054"/><rect x="1408" y="296" width="16" height="16" fill="#99004d"/><rect x="1424" y="296" width="16" height="16" fill="#990047"/><rect x="1440" y="296" width="16" height="16" fill="#990041"/><rect x="1456" y="296" width="16" height="16" fill="#99003b"/><rect x="1472" y="296" width="16" height="16" fill="#990036"/><rect x="1488" y="296" width="16" height="16" fill="#990030"/><rect x="1504" y="296" width="16" height="16" fill="#99002c"/><rect x="1520" y="296" width="16" height="16" fill="#990027"/><rect x="1536" y="296" width="16" height="16" fill="#990023"/><rect x="1552" y="296" width="16" height="16" fill="#99001e"/><rect x="1568" y="296" width="16" height="16" fill="#99001b"/><rect x="1584" y="296" width="16" height="16" fill="#990017"/><rect x="1600" y="296" width="16" height="16" fill="#990013"/><rect x="1616" y="296" width="16" height="16" fill="#990010"/><rect x="1632" y="296" width="16" height="16" fill="#99000c"/><rect x="1648" y="296" width="16" height="16" fill="#990009"/><rect x="1024" y="312" width="16" height="16" fill="#003f99"/><rect x="1040" y="312" width="16" height="16" fill="#003e99"/><rect x="1056" y="312" width="16" height="16" fill="#003d99"/><rect x="1072" y="312" width="16" height="16" fill="#003c99"/><rect x="1088" y="312" width="16" height="16" fill="#003b99"/><rect x="1104" y="312" width="16" height="16" fill="#003a99"/><rect x="1120" y="312" width="16" height="16" fill="#003899"/><rect x="1136" y="312" width="16" height="16" fill="#003799"/><rect x="1152" y="312" width="16" height="16" fill="#003699"/><rect x="1168" y="312" width="16" height="16" fill="#003599"/><rect x="1184" y="312" width="16" height="16" fill="#0d55ff"/><rect x="1200" y="312" width="16" height="16" fill="#284eff"/><rect x="1216" y="312" width="16" height="16" fill="#4347ff"/><rect x="1232" y="312" width="16" height="16" fill="#5f40ff"/><rect x="1248" y="312" width="16" height="16" fill="#7c38ff"/><rect x="1264" y="312" width="16" height="16" fill="#9931ff"/><rect x="1280" y="312" width="16" height="16" fill="#b629ff"/><rect x="1296" y="312" width="16" height="16" fill="#d521ff"/><rect x="1312" y="312" width="16" height="16" fill="#f319ff"/><rect x="1328" y="312" width="16" height="16" fill="#ff10ec"/><rect x="1344" y="312" width="16" height="16" fill="#ff08d3"/><rect x="1360" y="312" width="16" height="16" fill="#ff00bf"/><rect x="1376" y="312" width="16" height="16" fill="#990069"/><rect x="1392" y="312" width="16" height="16" fill="#990061"/><rect x="1408" y="312" width="16" height="16" fill="#990059"/><rect x="1424" y="312" width="16" height="16" fill="#990052"/><rect x="1440" y="312" width="16" height="16" fill="#99004b"/><rect x="1456" y="312" width="16" height="16" fill="#990045"/><rect x="1472" y="312" width="16" height="16" fill="#99003f"/><rect x="1488" y="312" width="16" height="16" fill="#990039"/><rect x="1504" y="312" width="16" height="16" fill="#990034"/><rect x="1520" y="312" width="16" height="16" fill="#99002f"/><rect x="1536" y="312" width="16" height="16" fill="#99002a"/><rect x="1552" y="312" width="16" height="16" fill="#990026"/><rect x="1568" y="312" width="16" height="16" fill="#990021"/><rect x="1584" y="312" width="16" height="16" fill="#99001d"/><rect x="1600" y="312" width="16" height="16" fill="#990019"/><rect x="1616" y="312" width="16" height="16" fill="#990016"/><rect x="1632" y="312" width="16" height="16" fill="#990012"/><rect x="1648" y="312" width="16" height="16" fill="#99000f"/><rect x="1024" y="328" width="16" height="16" fill="#003499"/><rect x="1040" y="328" width="16" height="16" fill="#003399"/><rect x="1056" y="328" width="16" height="16" fill="#003299"/><rect x="1072" y="328" width="16" height="16" fill="#003199"/><rect x="1088" y="328" width="16" height="16" fill="#003099"/><rect x="1104" y="328" width="16" height="16" fill="#002f99"/><rect x="1120" y="328" width="16" height="16" fill="#002f99"/><rect x="1136" y="328" width="16" height="16" fill="#002e99"/><rect x="1152" y="328" width="16" height="16" fill="#002d99"/><rect x="1168" y="328" width="16" height="16" fill="#002c99"/><rect x="1184" y="328" width="16" height="16" fill="#0847ff"/><rect x="1200" y="328" width="16" height="16" fill="#2040ff"/><rect x="1216" y="328" width="16" height="16" fill="#393aff"/><rect x="1232" y="328" width="16" height="16" fill="#5333ff"/><rect x="1248" y="328" width="16" height="16" fill="#6c2cff"/><rect x="1264" y="328" width="16" height="16" fill="#8725ff"/><rect x="1280" y="328" width="16" height="16" fill="#a11eff"/><rect x="1296" y="328" width="16" height="16" fill="#bc17ff"/><rect x="1312" y="328" width="16" height="16" fill="#d810ff"/><rect x="1328" y="328" width="16" height="16" fill="#f408ff"/><rect x="1344" y="328" width="16" height="16" fill="#ff01ed"/><rect x="1360" y="328" width="16" height="16" fill="#990083"/><rect x="1376" y="328" width="16" height="16" fill="#990079"/><rect x="1392" y="328" width="16" height="16" fill="#990070"/><rect x="1408" y="328" width="16" height="16" fill="#990067"/><rect x="1424" y="328" width="16" height="16" fill="#99005f"/><rect x="1440" y="328" width="16" height="16" fill="#990057"/><rect x="1456" y="328" width="16" height="16" fill="#990050"/><rect x="1472" y="328" width="16" height="16" fill="#99004a"/><rect x="1488" y="328" width="16" height="16" fill="#990043"/><rect x="1504" y="328" width="16" height="16" fill="#99003d"/><rect x="1520" y="328" width="16" height="16" fill="#990038"/><rect x="1536" y="328" width="16" height="16" fill="#990033"/><rect x="1552" y="328" width="16" height="16" fill="#99002e"/><rect x="1568" y="328" width="16" height="16" fill="#990029"/><rect x="1584" y="328" width="16" height="16" fill="#990025"/><rect x="1600" y="328" width="16" height="16" fill="#990020"/><rect x="1616" y="328" width="16" height="16" fill="#99001c"/><rect x="1632" y="328" width="16" height="16" fill="#990018"/><rect x="1648" y="328" width="16" height="16" fill="#990015"/><rect x="1024" y="344" width="16" height="16" fill="#002b99"/><rect x="1040" y="344" width="16" height="16" fill="#002a99"/><rect x="1056" y="344" width="16" height="16" fill="#002999"/><rect x="1072" y="344" width="16" height="16" fill="#002999"/><rect x="1088" y="344" width="16" height="16" fill="#002899"/><rect x="1104" y="344" width="16" height="16" fill="#002799"/><rect x="1120" y="344" width="16" height="16" fill="#002699"/><rect x="1136" y="344" width="16" height="16" fill="#002699"/><rect x="1152" y="344" width="16" height="16" fill="#002599"/><rect x="1168" y="344" width="16" height="16" fill="#002499"/><rect x="1184" y="344" width="16" height="16" fill="#043bff"/><rect x="1200" y="344" width="16" height="16" fill="#1a35ff"/><rect x="1216" y="344" width="16" height="16" fill="#312eff"/><rect x="1232" y="344" width="16" height="16" fill="#4828ff"/><rect x="1248" y="344" width="16" height="16" fill="#6022ff"/><rect x="1264" y="344" width="16" height="16" fill="#771bff"/><rect x="1280" y="344" width="16" height="16" fill="#9015ff"/><rect x="1296" y="344" width="16" height="16" fill="#a80eff"/><rect x="1312" y="344" width="16" height="16" fill="#c208ff"/><rect x="1328" y="344" width="16" height="16" fill="#db01ff"/><rect x="1344" y="344" width="16" height="16" fill="#8f0099"/><rect x="1360" y="344" width="16" height="16" fill="#990096"/><rect x="1376" y="344" width="16" height="16" fill="#99008b"/><rect x="1392" y="344" width="16" height="16" fill="#990080"/><rect x="1408" y="344" width="16" height="16" fill="#990076"/><rect x="1424" y="344" width="16" height="16" fill="#99006d"/><rect x="1440" y="344" width="16" height="16" fill="#990065"/><rect x="1456" y="344" width="16" height="16" fill="#99005d"/><rect x="1472" y="344" width="16" height="16" fill="#990055"/><rect x="1488" y="344" width="16" height="16" fill="#99004e"/><rect x="1504" y="344" width="16" height="16" fill="#990048"/><rect x="1520" y="344" width="16" height="16" fill="#990042"/><rect x="1536" y="344" width="16" height="16" fill="#99003c"/><rect x="1552" y="344" width="16" height="16" fill="#990036"/><rect x="1568" y="344" width="16" height="16" fill="#990031"/><rect x="1584" y="344" width="16" height="16" fill="#99002c"/><rect x="1600" y="344" width="16" height="16" fill="#990028"/><rect x="1616" y="344" width="16" height="16" fill="#990023"/><rect x="1632" y="344" width="16" height="16" fill="#99001f"/><rect x="1648" y="344" width="16" height="16" fill="#99001b"/><rect x="1024" y="360" width="16" height="16" fill="#002399"/><rect x="1040" y="360" width="16" height="16" fill="#002399"/><rect x="1056" y="360" width="16" height="16" fill="#002299"/><rect x="1072" y="360" width="16" height="16" fill="#002199"/><rect x="1088" y="360" width="16" height="16" fill="#002199"/><rect x="1104" y="360" width="16" height="16" fill="#002099"/><rect x="1120" y="360" width="16" height="16" fill="#001f99"/><rect x="1136" y="360" width="16" height="16" fill="#001f99"/><rect x="1152" y="360" width="16" height="16" fill="#001e99"/><rect x="1168" y="360" width="16" height="16" fill="#001e99"/><rect x="1184" y="360" width="16" height="16" fill="#0030ff"/><rect x="1200" y="360" width="16" height="16" fill="#152bff"/><rect x="1216" y="360" width="16" height="16" fill="#2a25ff"/><rect x="1232" y="360" width="16" height="16" fill="#3f1fff"/><rect x="1248" y="360" width="16" height="16" fill="#5519ff"/><rect x="1264" y="360" width="16" height="16" fill="#6b13ff"/><rect x="1280" y="360" width="16" height="16" fill="#810dff"/><rect x="1296" y="360" width="16" height="16" fill="#9807ff"/><rect x="1312" y="360" width="16" height="16" fill="#af01ff"/><rect x="1328" y="360" width="16" height="16" fill="#730099"/><rect x="1344" y="360" width="16" height="16" fill="#7d0099"/><rect x="1360" y="360" width="16" height="16" fill="#870099"/><rect x="1376" y="360" width="16" height="16" fill="#920099"/><rect x="1392" y="360" width="16" height="16" fill="#990093"/><rect x="1408" y="360" width="16" height="16" fill="#990087"/><rect x="1424" y="360" width="16" height="16" fill="#99007d"/><rect x="1440" y="360" width="16" height="16" fill="#990074"/><rect x="1456" y="360" width="16" height="16" fill="#99006b"/><rect x="1472" y="360" width="16" height="16" fill="#990062"/><rect x="1488" y="360" width="16" height="16" fill="#99005b"/><rect x="1504" y="360" width="16" height="16" fill="#990053"/><rect x="1520" y="360" width="16" height="16" fill="#99004c"/><rect x="1536" y="360" width="16" height="16" fill="#990046"/><rect x="1552" y="360" width="16" height="16" fill="#990040"/><rect x="1568" y="360" width="16" height="16" fill="#99003a"/><rect x="1584" y="360" width="16" height="16" fill="#990035"/><rect x="1600" y="360" width="16" height="16" fill="#990030"/><rect x="1616" y="360" width="16" height="16" fill="#99002b"/><rect x="1632" y="360" width="16" height="16" fill="#990026"/><rect x="1648" y="360" width="16" height="16" fill="#990022"/><rect x="1024" y="376" width="16" height="16" fill="#001d99"/><rect x="1040" y="376" width="16" height="16" fill="#001c99"/><rect x="1056" y="376" width="16" height="16" fill="#001c99"/><rect x="1072" y="376" width="16" height="16" fill="#001b99"/><rect x="1088" y="376" width="16" height="16" fill="#001a99"/><rect x="1104" y="376" width="16" height="16" fill="#001a99"/><rect x="1120" y="376" width="16" height="16" fill="#001999"/><rect x="1136" y="376" width="16" height="16" fill="#001999"/><rect x="1152" y="376" width="16" height="16" fill="#001899"/><rect x="1168" y="376" width="16" height="16" fill="#001899"/><rect x="1184" y="376" width="16" height="16" fill="#001799"/><rect x="1200" y="376" width="16" height="16" fill="#1022ff"/><rect x="1216" y="376" width="16" height="16" fill="#241dff"/><rect x="1232" y="376" width="16" height="16" fill="#3717ff"/><rect x="1248" y="376" width="16" height="16" fill="#4b12ff"/><rect x="1264" y="376" width="16" height="16" fill="#600cff"/><rect x="1280" y="376" width="16" height="16" fill="#7407ff"/><rect x="1296" y="376" width="16" height="16" fill="#8901ff"/><rect x="1312" y="376" width="16" height="16" fill="#5b0099"/><rect x="1328" y="376" width="16" height="16" fill="#630099"/><rect x="1344" y="376" width="16" height="16" fill="#6c0099"/><rect x="1360" y="376" width="16" height="16" fill="#750099"/><rect x="1376" y="376" width="16" height="16" fill="#7f0099"/><rect x="1392" y="376" width="16" height="16" fill="#8a0099"/><rect x="1408" y="376" width="16" height="16" fill="#960099"/><rect x="1424" y="376" width="16" height="16" fill="#99008f"/><rect x="1440" y="376" width="16" height="16" fill="#990084"/><rect x="1456" y="376" width="16" height="16" fill="#99007a"/><rect x="1472" y="376" width="16" height="16" fill="#990071"/><rect x="1488" y="376" width="16" height="16" fill="#990068"/><rect x="1504" y="376" width="16" height="16" fill="#990060"/><rect x="1520" y="376" width="16" height="16" fill="#990058"/><rect x="1536" y="376" width="16" height="16" fill="#990051"/><rect x="1552" y="376" width="16" height="16" fill="#99004b"/><rect x="1568" y="376" width="16" height="16" fill="#990044"/><rect x="1584" y="376" width="16" height="16" fill="#99003e"/><rect x="1600" y="376" width="16" height="16" fill="#990039"/><rect x="1616" y="376" width="16" height="16" fill="#990034"/><rect x="1632" y="376" width="16" height="16" fill="#99002f"/><rect x="1648" y="376" width="16" height="16" fill="#99002a"/><rect x="1024" y="392" width="16" height="16" fill="#001799"/><rect x="1040" y="392" width="16" height="16" fill="#001699"/><rect x="1056" y="392" width="16" height="16" fill="#001699"/><rect x="1072" y="392" width="16" height="16" fill="#001599"/><rect x="1088" y="392" width="16" height="16" fill="#001599"/><rect x="1104" y="392" width="16" height="16" fill="#001599"/><rect x="1120" y="392" width="16" height="16" fill="#001499"/><rect x="1136" y="392" width="16" height="16" fill="#001499"/><rect x="1152" y="392" width="16" height="16" fill="#001399"/><rect x="1168" y="392" width="16" height="16" fill="#001399"/><rect x="1184" y="392" width="16" height="16" fill="#001299"/><rect x="1200" y="392" width="16" height="16" fill="#0c1bff"/><rect x="1216" y="392" width="16" height="16" fill="#1e16ff"/><rect x="1232" y="392" width="16" height="16" fill="#3111ff"/><rect x="1248" y="392" width="16" height="16" fill="#430bff"/><rect x="1264" y="392" width="16" height="16" fill="#5606ff"/><rect x="1280" y="392" width="16" height="16" fill="#6901ff"/><rect x="1296" y="392" width="16" height="16" fill="#470099"/><rect x="1312" y="392" width="16" height="16" fill="#4e0099"/><rect x="1328" y="392" width="16" height="16" fill="#550099"/><rect x="1344" y="392" width="16" height="16" fill="#5d0099"/><rect x="1360" y="392" width="16" height="16" fill="#660099"/><rect x="1376" y="392" width="16" height="16" fill="#6f0099"/><rect x="1392" y="392" width="16" height="16" fill="#780099"/><rect x="1408" y="392" width="16" height="16" fill="#820099"/><rect x="1424" y="392" width="16" height="16" fill="#8d0099"/><rect x="1440" y="392" width="16" height="16" fill="#990098"/><rect x="1456" y="392" width="16" height="16" fill="#99008c"/><rect x="1472" y="392" width="16" height="16" fill="#990082"/><rect x="1488" y="392" width="16" height="16" fill="#990078"/><rect x="1504" y="392" width="16" height="16" fill="#99006e"/><rect x="1520" y="392" width="16" height="16" fill="#990066"/><rect x="1536" y="392" width="16" height="16" fill="#99005e"/><rect x="1552" y="392" width="16" height="16" fill="#990056"/><rect x="1568" y="392" width="16" height="16" fill="#99004f"/><rect x="1584" y="392" width="16" height="16" fill="#990049"/><rect x="1600" y="392" width="16" height="16" fill="#990043"/><rect x="1616" y="392" width="16" height="16" fill="#99003d"/><rect x="1632" y="392" width="16" height="16" fill="#990037"/><rect x="1648" y="392" width="16" height="16" fill="#990032"/><rect x="1024" y="408" width="16" height="16" fill="#001299"/><rect x="1040" y="408" width="16" height="16" fill="#001299"/><rect x="1056" y="408" width="16" height="16" fill="#001199"/><rect x="1072" y="408" width="16" height="16" fill="#001199"/><rect x="1088" y="408" width="16" height="16" fill="#001099"/><rect x="1104" y="408" width="16" height="16" fill="#001099"/><rect x="1120" y="408" width="16" height="16" fill="#000f99"/><rect x="1136" y="408" width="16" height="16" fill="#000f99"/><rect x="1152" y="408" width="16" height="16" fill="#000f99"/><rect x="1168" y="408" width="16" height="16" fill="#000e99"/><rect x="1184" y="408" width="16" height="16" fill="#000e99"/><rect x="1200" y="408" width="16" height="16" fill="#0914ff"/><rect x="1216" y="408" width="16" height="16" fill="#1a10ff"/><rect x="1232" y="408" width="16" height="16" fill="#2b0bff"/><rect x="1248" y="408" width="16" height="16" fill="#3c06ff"/><rect x="1264" y="408" width="16" height="16" fill="#4e01ff"/><rect x="1280" y="408" width="16" height="16" fill="#360099"/><rect x="1296" y="408" width="16" height="16" fill="#3c0099"/><rect x="1312" y="408" width="16" height="16" fill="#420099"/><rect x="1328" y="408" width="16" height="16" fill="#490099"/><rect x="1344" y="408" width="16" height="16" fill="#500099"/><rect x="1360" y="408" width="16" height="16" fill="#580099"/><rect x="1376" y="408" width="16" height="16" fill="#600099"/><rect x="1392" y="408" width="16" height="16" fill="#680099"/><rect x="1408" y="408" width="16" height="16" fill="#710099"/><rect x="1424" y="408" width="16" height="16" fill="#7b0099"/><rect x="1440" y="408" width="16" height="16" fill="#850099"/><rect x="1456" y="408" width="16" height="16" fill="#910099"/><rect x="1472" y="408" width="16" height="16" fill="#990095"/><rect x="1488" y="408" width="16" height="16" fill="#990089"/><rect x="1504" y="408" width="16" height="16" fill="#99007f"/><rect x="1520" y="408" width="16" height="16" fill="#990075"/><rect x="1536" y="408" width="16" height="16" fill="#99006c"/><rect x="1552" y="408" width="16" height="16" fill="#990064"/><rect x="1568" y="408" width="16" height="16" fill="#99005c"/><rect x="1584" y="408" width="16" height="16" fill="#990054"/><rect x="1600" y="408" width="16" height="16" fill="#99004e"/><rect x="1616" y="408" width="16" height="16" fill="#990047"/><rect x="1632" y="408" width="16" height="16" fill="#990041"/><rect x="1648" y="408" width="16" height="16" fill="#99003b"/><rect x="1024" y="424" width="16" height="16" fill="#000e99"/><rect x="1040" y="424" width="16" height="16" fill="#000d99"/><rect x="1056" y="424" width="16" height="16" fill="#000d99"/><rect x="1072" y="424" width="16" height="16" fill="#000c99"/><rect x="1088" y="424" width="16" height="16" fill="#000c99"/><rect x="1104" y="424" width="16" height="16" fill="#000c99"/><rect x="1120" y="424" width="16" height="16" fill="#000b99"/><rect x="1136" y="424" width="16" height="16" fill="#000b99"/><rect x="1152" y="424" width="16" height="16" fill="#000b99"/><rect x="1168" y="424" width="16" height="16" fill="#000a99"/><rect x="1184" y="424" width="16" height="16" fill="#000a99"/><rect x="1200" y="424" width="16" height="16" fill="#050fff"/><rect x="1216" y="424" width="16" height="16" fill="#150aff"/><rect x="1232" y="424" width="16" height="16" fill="#2606ff"/><rect x="1248" y="424" width="16" height="16" fill="#3601ff"/><rect x="1264" y="424" width="16" height="16" fill="#270099"/><rect x="1280" y="424" width="16" height="16" fill="#2c0099"/><rect x="1296" y="424" width="16" height="16" fill="#320099"/><rect x="1312" y="424" width="16" height="16" fill="#370099"/><rect x="1328" y="424" width="16" height="16" fill="#3e0099"/><rect x="1344" y="424" width="16" height="16" fill="#440099"/><rect x="1360" y="424" width="16" height="16" fill="#4b0099"/><rect x="1376" y="424" width="16" height="16" fill="#520099"/><rect x="1392" y="424" width="16" height="16" fill="#5a0099"/><rect x="1408" y="424" width="16" height="16" fill="#620099"/><rect x="1424" y="424" width="16" height="16" fill="#6b0099"/><rect x="1440" y="424" width="16" height="16" fill="#740099"/><rect x="1456" y="424" width="16" height="16" fill="#7e0099"/><rect x="1472" y="424" width="16" height="16" fill="#880099"/><rect x="1488" y="424" width="16" height="16" fill="#940099"/><rect x="1504" y="424" width="16" height="16" fill="#990091"/><rect x="1520" y="424" width="16" height="16" fill="#990086"/><rect x="1536" y="424" width="16" height="16" fill="#99007c"/><rect x="1552" y="424" width="16" height="16" fill="#990072"/><rect x="1568" y="424" width="16" height="16" fill="#99006a"/><rect x="1584" y="424" width="16" height="16" fill="#990061"/><rect x="1600" y="424" width="16" height="16" fill="#99005a"/><rect x="1616" y="424" width="16" height="16" fill="#990052"/><rect x="1632" y="424" width="16" height="16" fill="#99004c"/><rect x="1648" y="424" width="16" height="16" fill="#990045"/><rect x="1024" y="440" width="16" height="16" fill="#000a99"/><rect x="1040" y="440" width="16" height="16" fill="#000999"/><rect x="1056" y="440" width="16" height="16" fill="#000999"/><rect x="1072" y="440" width="16" height="16" fill="#000999"/><rect x="1088" y="440" width="16" height="16" fill="#000899"/><rect x="1104" y="440" width="16" height="16" fill="#000899"/><rect x="1120" y="440" width="16" height="16" fill="#000899"/><rect x="1136" y="440" width="16" height="16" fill="#000799"/><rect x="1152" y="440" width="16" height="16" fill="#000799"/><rect x="1168" y="440" width="16" height="16" fill="#000799"/><rect x="1184" y="440" width="16" height="16" fill="#000699"/><rect x="1200" y="440" width="16" height="16" fill="#030aff"/><rect x="1216" y="440" width="16" height="16" fill="#1205ff"/><rect x="1232" y="440" width="16" height="16" fill="#2101ff"/><rect x="1248" y="440" width="16" height="16" fill="#1a0099"/><rect x="1264" y="440" width="16" height="16" fill="#1e0099"/><rect x="1280" y="440" width="16" height="16" fill="#230099"/><rect x="1296" y="440" width="16" height="16" fill="#280099"/><rect x="1312" y="440" width="16" height="16" fill="#2e0099"/><rect x="1328" y="440" width="16" height="16" fill="#330099"/><rect x="1344" y="440" width="16" height="16" fill="#390099"/><rect x="1360" y="440" width="16" height="16" fill="#3f0099"/><rect x="1376" y="440" width="16" height="16" fill="#460099"/><rect x="1392" y="440" width="16" height="16" fill="#4d0099"/><rect x="1408" y="440" width="16" height="16" fill="#540099"/><rect x="1424" y="440" width="16" height="16" fill="#5c0099"/><rect x="1440" y="440" width="16" height="16" fill="#640099"/><rect x="1456" y="440" width="16" height="16" fill="#6d0099"/><rect x="1472" y="440" width="16" height="16" fill="#770099"/><rect x="1488" y="440" width="16" height="16" fill="#810099"/><rect x="1504" y="440" width="16" height="16" fill="#8c0099"/><rect x="1520" y="440" width="16" height="16" fill="#970099"/><rect x="1536" y="440" width="16" height="16" fill="#99008e"/><rect x="1552" y="440" width="16" height="16" fill="#990083"/><rect x="1568" y="440" width="16" height="16" fill="#990079"/><rect x="1584" y="440" width="16" height="16" fill="#990070"/><rect x="1600" y="440" width="16" height="16" fill="#990067"/><rect x="1616" y="440" width="16" height="16" fill="#99005f"/><rect x="1632" y="440" width="16" height="16" fill="#990058"/><rect x="1648" y="440" width="16" height="16" fill="#990050"/><rect x="1024" y="456" width="16" height="16" fill="#000699"/><rect x="1040" y="456" width="16" height="16" fill="#000699"/><rect x="1056" y="456" width="16" height="16" fill="#000699"/><rect x="1072" y="456" width="16" height="16" fill="#000599"/><rect x="1088" y="456" width="16" height="16" fill="#000599"/><rect x="1104" y="456" width="16" height="16" fill="#000599"/><rect x="1120" y="456" width="16" height="16" fill="#000499"/><rect x="1136" y="456" width="16" height="16" fill="#000499"/><rect x="1152" y="456" width="16" height="16" fill="#000499"/><rect x="1168" y="456" width="16" height="16" fill="#000499"/><rect x="1184" y="456" width="16" height="16" fill="#000399"/><rect x="1200" y="456" width="16" height="16" fill="#0005ff"/><rect x="1216" y="456" width="16" height="16" fill="#0f01ff"/><rect x="1232" y="456" width="16" height="16" fill="#0e0099"/><rect x="1248" y="456" width="16" height="16" fill="#120099"/><rect x="1264" y="456" width="16" height="16" fill="#160099"/><rect x="1280" y="456" width="16" height="16" fill="#1b0099"/><rect x="1296" y="456" width="16" height="16" fill="#200099"/><rect x="1312" y="456" width="16" height="16" fill="#250099"/><rect x="1328" y="456" width="16" height="16" fill="#2a0099"/><rect x="1344" y="456" width="16" height="16" fill="#2f0099"/><rect x="1360" y="456" width="16" height="16" fill="#350099"/><rect x="1376" y="456" width="16" height="16" fill="#3b0099"/><rect x="1392" y="456" width="16" height="16" fill="#410099"/><rect x="1408" y="456" width="16" height="16" fill="#480099"/><rect x="1424" y="456" width="16" height="16" fill="#4f0099"/><rect x="1440" y="456" width="16" height="16" fill="#560099"/><rect x="1456" y="456" width="16" height="16" fill="#5e0099"/><rect x="1472" y="456" width="16" height="16" fill="#670099"/><rect x="1488" y="456" width="16" height="16" fill="#700099"/><rect x="1504" y="456" width="16" height="16" fill="#790099"/><rect x="1520" y="456" width="16" height="16" fill="#840099"/><rect x="1536" y="456" width="16" height="16" fill="#8f0099"/><rect x="1552" y="456" width="16" height="16" fill="#990096"/><rect x="1568" y="456" width="16" height="16" fill="#99008b"/><rect x="1584" y="456" width="16" height="16" fill="#990080"/><rect x="1600" y="456" width="16" height="16" fill="#990076"/><rect x="1616" y="456" width="16" height="16" fill="#99006d"/><rect x="1632" y="456" width="16" height="16" fill="#990065"/><rect x="1648" y="456" width="16" height="16" fill="#99005d"/><rect x="1024" y="472" width="16" height="16" fill="#000399"/><rect x="1040" y="472" width="16" height="16" fill="#000399"/><rect x="1056" y="472" width="16" height="16" fill="#000399"/><rect x="1072" y="472" width="16" height="16" fill="#000299"/><rect x="1088" y="472" width="16" height="16" fill="#000299"/><rect x="1104" y="472" width="16" height="16" fill="#000299"/><rect x="1120" y="472" width="16" height="16" fill="#000199"/><rect x="1136" y="472" width="16" height="16" fill="#000199"/><rect x="1152" y="472" width="16" height="16" fill="#000199"/><rect x="1168" y="472" width="16" height="16" fill="#000199"/><rect x="1184" y="472" width="16" height="16" fill="#000099"/><rect x="1200" y="472" width="16" height="16" fill="#000099"/><rect x="1216" y="472" width="16" height="16" fill="#040099"/><rect x="1232" y="472" width="16" height="16" fill="#070099"/><rect x="1248" y="472" width="16" height="16" fill="#0b0099"/><rect x="1264" y="472" width="16" height="16" fill="#0f0099"/><rect x="1280" y="472" width="16" height="16" fill="#130099"/><rect x="1296" y="472" width="16" height="16" fill="#180099"/><rect x="1312" y="472" width="16" height="16" fill="#1c0099"/><rect x="1328" y="472" width="16" height="16" fill="#210099"/><rect x="1344" y="472" width="16" height="16" fill="#260099"/><rect x="1360" y="472" width="16" height="16" fill="#2b0099"/><rect x="1376" y="472" width="16" height="16" fill="#310099"/><rect x="1392" y="472" width="16" height="16" fill="#360099"/><rect x="1408" y="472" width="16" height="16" fill="#3d0099"/><rect x="1424" y="472" width="16" height="16" fill="#430099"/><rect x="1440" y="472" width="16" height="16" fill="#4a0099"/><rect x="1456" y="472" width="16" height="16" fill="#510099"/><rect x="1472" y="472" width="16" height="16" fill="#590099"/><rect x="1488" y="472" width="16" height="16" fill="#610099"/><rect x="1504" y="472" width="16" height="16" fill="#690099"/><rect x="1520" y="472" width="16" height="16" fill="#720099"/><rect x="1536" y="472" width="16" height="16" fill="#7c0099"/><rect x="1552" y="472" width="16" height="16" fill="#870099"/><rect x="1568" y="472" width="16" height="16" fill="#920099"/><rect x="1584" y="472" width="16" height="16" fill="#990093"/><rect x="1600" y="472" width="16" height="16" fill="#990088"/><rect x="1616" y="472" width="16" height="16" fill="#99007d"/><rect x="1632" y="472" width="16" height="16" fill="#990074"/><rect x="1648" y="472" width="16" height="16" fill="#99006b"/><rect x="1024" y="488" width="16" height="16" fill="#000099"/><rect x="1040" y="488" width="16" height="16" fill="#000099"/><rect x="1056" y="488" width="16" height="16" fill="#000099"/><rect x="1072" y="488" width="16" height="16" fill="#000099"/><rect x="1088" y="488" width="16" height="16" fill="#000099"/><rect x="1104" y="488" width="16" height="16" fill="#000099"/><rect x="1120" y="488" width="16" height="16" fill="#000099"/><rect x="1136" y="488" width="16" height="16" fill="#000099"/><rect x="1152" y="488" width="16" height="16" fill="#000099"/><rect x="1168" y="488" width="16" height="16" fill="#000099"/><rect x="1184" y="488" width="16" height="16" fill="#000099"/><rect x="1200" y="488" width="16" height="16" fill="#000099"/><rect x="1216" y="488" width="16" height="16" fill="#000099"/><rect x="1232" y="488" width="16" height="16" fill="#010099"/><rect x="1248" y="488" width="16" height="16" fill="#050099"/><rect x="1264" y="488" width="16" height="16" fill="#090099"/><rect x="1280" y="488" width="16" height="16" fill="#0c0099"/><rect x="1296" y="488" width="16" height="16" fill="#100099"/><rect x="1312" y="488" width="16" height="16" fill="#150099"/><rect x="1328" y="488" width="16" height="16" fill="#190099"/><rect x="1344" y="488" width="16" height="16" fill="#1e0099"/><rect x="1360" y="488" width="16" height="16" fill="#220099"/><rect x="1376" y="488" width="16" height="16" fill="#270099"/><rect x="1392" y="488" width="16" height="16" fill="#2d0099"/><rect x="1408" y="488" width="16" height="16" fill="#320099"/><rect x="1424" y="488" width="16" height="16" fill="#380099"/><rect x="1440" y="488" width="16" height="16" fill="#3e0099"/><rect x="1456" y="488" width="16" height="16" fill="#450099"/><rect x="1472" y="488" width="16" height="16" fill="#4c0099"/><rect x="1488" y="488" width="16" height="16" fill="#530099"/><rect x="1504" y="488" width="16" height="16" fill="#5b0099"/><rect x="1520" y="488" width="16" height="16" fill="#630099"/><rect x="1536" y="488" width="16" height="16" fill="#6c0099"/><rect x="1552" y="488" width="16" height="16" fill="#750099"/><rect x="1568" y="488" width="16" height="16" fill="#7f0099"/><rect x="1584" y="488" width="16" height="16" fill="#8a0099"/><rect x="1600" y="488" width="16" height="16" fill="#950099"/><rect x="1616" y="488" width="16" height="16" fill="#990090"/><rect x="1632" y="488" width="16" height="16" fill="#990085"/><rect x="1648" y="488" width="16" height="16" fill="#99007b"/><rect x="1024" y="504" width="16" height="16" fill="#000099"/><rect x="1040" y="504" width="16" height="16" fill="#000099"/><rect x="1056" y="504" width="16" height="16" fill="#000099"/><rect x="1072" y="504" width="16" height="16" fill="#000099"/><rect x="1088" y="504" width="16" height="16" fill="#000099"/><rect x="1104" y="504" width="16" height="16" fill="#000099"/><rect x="1120" y="504" width="16" height="16" fill="#000099"/><rect x="1136" y="504" width="16" height="16" fill="#000099"/><rect x="1152" y="504" width="16" height="16" fill="#000099"/><rect x="1168" y="504" width="16" height="16" fill="#000099"/><rect x="1184" y="504" width="16" height="16" fill="#000099"/><rect x="1200" y="504" width="16" height="16" fill="#000099"/><rect x="1216" y="504" width="16" height="16" fill="#000099"/><rect x="1232" y="504" width="16" height="16" fill="#000099"/><rect x="1248" y="504" width="16" height="16" fill="#000099"/><rect x="1264" y="504" width="16" height="16" fill="#020099"/><rect x="1280" y="504" width="16" height="16" fill="#060099"/><rect x="1296" y="504" width="16" height="16" fill="#0a0099"/><rect x="1312" y="504" width="16" height="16" fill="#0d0099"/><rect x="1328" y="504" width="16" height="16" fill="#120099"/><rect x="1344" y="504" width="16" height="16" fill="#160099"/><rect x="1360" y="504" width="16" height="16" fill="#1a0099"/><rect x="1376" y="504" width="16" height="16" fill="#1f0099"/><rect x="1392" y="504" width="16" height="16" fill="#240099"/><rect x="1408" y="504" width="16" height="16" fill="#290099"/><rect x="1424" y="504" width="16" height="16" fill="#2e0099"/><rect x="1440" y="504" width="16" height="16" fill="#340099"/><rect x="1456" y="504" width="16" height="16" fill="#3a0099"/><rect x="1472" y="504" width="16" height="16" fill="#400099"/><rect x="1488" y="504" width="16" height="16" fill="#470099"/><rect x="1504" y="504" width="16" height="16" fill="#4e0099"/><rect x="1520" y="504" width="16" height="16" fill="#550099"/><rect x="1536" y="504" width="16" height="16" fill="#5d0099"/><rect x="1552" y="504" width="16" height="16" fill="#650099"/><rect x="1568" y="504" width="16" height="16" fill="#6e0099"/><rect x="1584" y="504" width="16" height="16" fill="#780099"/><rect x="1600" y="504" width="16" height="16" fill="#820099"/><rect x="1616" y="504" width="16" height="16" fill="#8d0099"/><rect x="1632" y="504" width="16" height="16" fill="#990098"/><rect x="1648" y="504" width="16" height="16" fill="#99008d"/><rect x="1024" y="520" width="16" height="16" fill="#000099"/><rect x="1040" y="520" width="16" height="16" fill="#000099"/><rect x="1056" y="520" width="16" height="16" fill="#000099"/><rect x="1072" y="520" width="16" height="16" fill="#000099"/><rect x="1088" y="520" width="16" height="16" fill="#000099"/><rect x="1104" y="520" width="16" height="16" fill="#000099"/><rect x="1120" y="520" width="16" height="16" fill="#000099"/><rect x="1136" y="520" width="16" height="16" fill="#000099"/><rect x="1152" y="520" width="16" height="16" fill="#000099"/><rect x="1168" y="520" width="16" height="16" fill="#000099"/><rect x="1184" y="520" width="16" height="16" fill="#000099"/><rect x="1200" y="520" width="16" height="16" fill="#000099"/><rect x="1216" y="520" width="16" height="16" fill="#000099"/><rect x="1232" y="520" width="16" height="16" fill="#000099"/><rect x="1248" y="520" width="16" height="16" fill="#000099"/><rect x="1264" y="520" width="16" height="16" fill="#000099"/><rect x="1280" y="520" width="16" height="16" fill="#000099"/><rect x="1296" y="520" width="16" height="16" fill="#030099"/><rect x="1312" y="520" width="16" height="16" fill="#070099"/><rect x="1328" y="520" width="16" height="16" fill="#0b0099"/><rect x="1344" y="520" width="16" height="16" fill="#0f0099"/><rect x="1360" y="520" width="16" height="16" fill="#130099"/><rect x="1376" y="520" width="16" height="16" fill="#170099"/><rect x="1392" y="520" width="16" height="16" fill="#1c0099"/><rect x="1408" y="520" width="16" height="16" fill="#200099"/><rect x="1424" y="520" width="16" height="16" fill="#250099"/><rect x="1440" y="520" width="16" height="16" fill="#2a0099"/><rect x="1456" y="520" width="16" height="16" fill="#300099"/><rect x="1472" y="520" width="16" height="16" fill="#360099"/><rect x="1488" y="520" width="16" height="16" fill="#3c0099"/><rect x="1504" y="520" width="16" height="16" fill="#420099"/><rect x="1520" y="520" width="16" height="16" fill="#490099"/><rect x="1536" y="520" width="16" height="16" fill="#500099"/><rect x="1552" y="520" width="16" height="16" fill="#570099"/><rect x="1568" y="520" width="16" height="16" fill="#5f0099"/><rect x="1584" y="520" width="16" height="16" fill="#680099"/><rect x="1600" y="520" width="16" height="16" fill="#710099"/><rect x="1616" y="520" width="16" height="16" fill="#7b0099"/><rect x="1632" y="520" width="16" height="16" fill="#850099"/><rect x="1648" y="520" width="16" height="16" fill="#900099"/><rect x="1024" y="536" width="16" height="16" fill="#000099"/><rect x="1040" y="536" width="16" height="16" fill="#000099"/><rect x="1056" y="536" width="16" height="16" fill="#000099"/><rect x="1072" y="536" width="16" height="16" fill="#000099"/><rect x="1088" y="536" width="16" height="16" fill="#000099"/><rect x="1104" y="536" width="16" height="16" fill="#000099"/><rect x="1120" y="536" width="16" height="16" fill="#000099"/><rect x="1136" y="536" width="16" height="16" fill="#000099"/><rect x="1152" y="536" width="16" height="16" fill="#000099"/><rect x="1168" y="536" width="16" height="16" fill="#000099"/><rect x="1184" y="536" width="16" height="16" fill="#000099"/><rect x="1200" y="536" width="16" height="16" fill="#000099"/><rect x="1216" y="536" width="16" height="16" fill="#000099"/><rect x="1232" y="536" width="16" height="16" fill="#000099"/><rect x="1248" y="536" width="16" height="16" fill="#000099"/><rect x="1264" y="536" width="16" height="16" fill="#000099"/><rect x="1280" y="536" width="16" height="16" fill="#000099"/><rect x="1296" y="536" width="16" height="16" fill="#000099"/><rect x="1312" y="536" width="16" height="16" fill="#010099"/><rect x="1328" y="536" width="16" height="16" fill="#040099"/><rect x="1344" y="536" width="16" height="16" fill="#080099"/><rect x="1360" y="536" width="16" height="16" fill="#0c0099"/><rect x="1376" y="536" width="16" height="16" fill="#100099"/><rect x="1392" y="536" width="16" height="16" fill="#140099"/><rect x="1408" y="536" width="16" height="16" fill="#180099"/><rect x="1424" y="536" width="16" height="16" fill="#1d0099"/><rect x="1440" y="536" width="16" height="16" fill="#220099"/><rect x="1456" y="536" width="16" height="16" fill="#270099"/><rect x="1472" y="536" width="16" height="16" fill="#2c0099"/><rect x="1488" y="536" width="16" height="16" fill="#310099"/><rect x="1504" y="536" width="16" height="16" fill="#370099"/><rect x="1520" y="536" width="16" height="16" fill="#3d0099"/><rect x="1536" y="536" width="16" height="16" fill="#440099"/><rect x="1552" y="536" width="16" height="16" fill="#4b0099"/><rect x="1568" y="536" width="16" height="16" fill="#520099"/><rect x="1584" y="536" width="16" height="16" fill="#5a0099"/><rect x="1600" y="536" width="16" height="16" fill="#620099"/><rect x="1616" y="536" width="16" height="16" fill="#6a0099"/><rect x="1632" y="536" width="16" height="16" fill="#740099"/><rect x="1648" y="536" width="16" height="16" fill="#7d0099"/><rect x="1024" y="552" width="16" height="16" fill="#000099"/><rect x="1040" y="552" width="16" height="16" fill="#000099"/><rect x="1056" y="552" width="16" height="16" fill="#000099"/><rect x="1072" y="552" width="16" height="16" fill="#000099"/><rect x="1088" y="552" width="16" height="16" fill="#000099"/><rect x="1104" y="552" width="16" height="16" fill="#000099"/><rect x="1120" y="552" width="16" height="16" fill="#000099"/><rect x="1136" y="552" width="16" height="16" fill="#000099"/><rect x="1152" y="552" width="16" height="16" fill="#000099"/><rect x="1168" y="552" width="16" height="16" fill="#000099"/><rect x="1184" y="552" width="16" height="16" fill="#000099"/><rect x="1200" y="552" width="16" height="16" fill="#000099"/><rect x="1216" y="552" width="16" height="16" fill="#000099"/><rect x="1232" y="552" width="16" height="16" fill="#000099"/><rect x="1248" y="552" width="16" height="16" fill="#000099"/><rect x="1264" y="552" width="16" height="16" fill="#000099"/><rect x="1280" y="552" width="16" height="16" fill="#000099"/><rect x="1296" y="552" width="16" height="16" fill="#000099"/><rect x="1312" y="552" width="16" height="16" fill="#000099"/><rect x="1328" y="552" width="16" height="16" fill="#000099"/><rect x="1344" y="552" width="16" height="16" fill="#020099"/><rect x="1360" y="552" width="16" height="16" fill="#050099"/><rect x="1376" y="552" width="16" height="16" fill="#090099"/><rect x="1392" y="552" width="16" height="16" fill="#0d0099"/><rect x="1408" y="552" width="16" height="16" fill="#110099"/><rect x="1424" y="552" width="16" height="16" fill="#150099"/><rect x="1440" y="552" width="16" height="16" fill="#1a0099"/><rect x="1456" y="552" width="16" height="16" fill="#1e0099"/><rect x="1472" y="552" width="16" height="16" fill="#230099"/><rect x="1488" y="552" width="16" height="16" fill="#280099"/><rect x="1504" y="552" width="16" height="16" fill="#2d0099"/><rect x="1520" y="552" width="16" height="16" fill="#330099"/><rect x="1536" y="552" width="16" height="16" fill="#390099"/><rect x="1552" y="552" width="16" height="16" fill="#3f0099"/><rect x="1568" y="552" width="16" height="16" fill="#460099"/><rect x="1584" y="552" width="16" height="16" fill="#4d0099"/><rect x="1600" y="552" width="16" height="16" fill="#540099"/><rect x="1616" y="552" width="16" height="16" fill="#5c0099"/><rect x="1632" y="552" width="16" height="16" fill="#640099"/><rect x="1648" y="552" width="16" height="16" fill="#6d0099"/><rect x="1024" y="568" width="16" height="16" fill="#000099"/><rect x="1040" y="568" width="16" height="16" fill="#000099"/><rect x="1056" y="568" width="16" height="16" fill="#000099"/><rect x="1072" y="568" width="16" height="16" fill="#000099"/><rect x="1088" y="568" width="16" height="16" fill="#000099"/><rect x="1104" y="568" width="16" height="16" fill="#000099"/><rect x="1120" y="568" width="16" height="16" fill="#000099"/><rect x="1136" y="568" width="16" height="16" fill="#000099"/><rect x="1152" y="568" width="16" height="16" fill="#000099"/><rect x="1168" y="568" width="16" height="16" fill="#000099"/><rect x="1184" y="568" width="16" height="16" fill="#000099"/><rect x="1200" y="568" width="16" height="16" fill="#000099"/><rect x="1216" y="568" width="16" height="16" fill="#000099"/><rect x="1232" y="568" width="16" height="16" fill="#000099"/><rect x="1248" y="568" width="16" height="16" fill="#000099"/><rect x="1264" y="568" width="16" height="16" fill="#000099"/><rect x="1280" y="568" width="16" height="16" fill="#000099"/><rect x="1296" y="568" width="16" height="16" fill="#000099"/><rect x="1312" y="568" width="16" height="16" fill="#000099"/><rect x="1328" y="568" width="16" height="16" fill="#000099"/><rect x="1344" y="568" width="16" height="16" fill="#000099"/><rect x="1360" y="568" width="16" height="16" fill="#000099"/><rect x="1376" y="568" width="16" height="16" fill="#030099"/><rect x="1392" y="568" width="16" height="16" fill="#060099"/><rect x="1408" y="568" width="16" height="16" fill="#0a0099"/><rect x="1424" y="568" width="16" height="16" fill="#0e0099"/><rect x="1440" y="568" width="16" height="16" fill="#120099"/><rect x="1456" y="568" width="16" height="16" fill="#160099"/><rect x="1472" y="568" width="16" height="16" fill="#1b0099"/><rect x="1488" y="568" width="16" height="16" fill="#1f0099"/><rect x="1504" y="568" width="16" height="16" fill="#240099"/><rect x="1520" y="568" width="16" height="16" fill="#2a0099"/><rect x="1536" y="568" width="16" height="16" fill="#2f0099"/><rect x="1552" y="568" width="16" height="16" fill="#350099"/><rect x="1568" y="568" width="16" height="16" fill="#3b0099"/><rect x="1584" y="568" width="16" height="16" fill="#410099"/><rect x="1600" y="568" width="16" height="16" fill="#480099"/><rect x="1616" y="568" width="16" height="16" fill="#4f0099"/><rect x="1632" y="568" width="16" height="16" fill="#560099"/><rect x="1648" y="568" width="16" height="16" fill="#5e0099"/><rect x="1024" y="584" width="16" height="16" fill="#000099"/><rect x="1040" y="584" width="16" height="16" fill="#000099"/><rect x="1056" y="584" width="16" height="16" fill="#000099"/><rect x="1072" y="584" width="16" height="16" fill="#000099"/><rect x="1088" y="584" width="16" height="16" fill="#000099"/><rect x="1104" y="584" width="16" height="16" fill="#000099"/><rect x="1120" y="584" width="16" height="16" fill="#000099"/><rect x="1136" y="584" width="16" height="16" fill="#000099"/><rect x="1152" y="584" width="16" height="16" fill="#000099"/><rect x="1168" y="584" width="16" height="16" fill="#000099"/><rect x="1184" y="584" width="16" height="16" fill="#000099"/><rect x="1200" y="584" width="16" height="16" fill="#000099"/><rect x="1216" y="584" width="16" height="16" fill="#000099"/><rect x="1232" y="584" width="16" height="16" fill="#000099"/><rect x="1248" y="584" width="16" height="16" fill="#000099"/><rect x="1264" y="584" width="16" height="16" fill="#000099"/><rect x="1280" y="584" width="16" height="16" fill="#000099"/><rect x="1296" y="584" width="16" height="16" fill="#000099"/><rect x="1312" y="584" width="16" height="16" fill="#000099"/><rect x="1328" y="584" width="16" height="16" fill="#000099"/><rect x="1344" y="584" width="16" height="16" fill="#000099"/><rect x="1360" y="584" width="16" height="16" fill="#000099"/><rect x="1376" y="584" width="16" height="16" fill="#000099"/><rect x="1392" y="584" width="16" height="16" fill="#000099"/><rect x="1408" y="584" width="16" height="16" fill="#040099"/><rect x="1424" y="584" width="16" height="16" fill="#070099"/><rect x="1440" y="584" width="16" height="16" fill="#0b0099"/><rect x="1456" y="584" width="16" height="16" fill="#0f0099"/><rect x="1472" y="584" width="16" height="16" fill="#130099"/><rect x="1488" y="584" width="16" height="16" fill="#180099"/><rect x="1504" y="584" width="16" height="16" fill="#1c0099"/><rect x="1520" y="584" width="16" height="16" fill="#210099"/><rect x="1536" y="584" width="16" height="16" fill="#260099"/><rect x="1552" y="584" width="16" height="16" fill="#2b0099"/><rect x="1568" y="584" width="16" height="16" fill="#310099"/><rect x="1584" y="584" width="16" height="16" fill="#360099"/><rect x="1600" y="584" width="16" height="16" fill="#3c0099"/><rect x="1616" y="584" width="16" height="16" fill="#430099"/><rect x="1632" y="584" width="16" height="16" fill="#4a0099"/><rect x="1648" y="584" width="16" height="16" fill="#510099"/><rect x="1024" y="600" width="16" height="16" fill="#000099"/><rect x="1040" y="600" width="16" height="16" fill="#000099"/><rect x="1056" y="600" width="16" height="16" fill="#000099"/><rect x="1072" y="600" width="16" height="16" fill="#000099"/><rect x="1088" y="600" width="16" height="16" fill="#000099"/><rect x="1104" y="600" width="16" height="16" fill="#000099"/><rect x="1120" y="600" width="16" height="16" fill="#000099"/><rect x="1136" y="600" width="16" height="16" fill="#000099"/><rect x="1152" y="600" width="16" height="16" fill="#000099"/><rect x="1168" y="600" width="16" height="16" fill="#000099"/><rect x="1184" y="600" width="16" height="16" fill="#000099"/><rect x="1200" y="600" width="16" height="16" fill="#000099"/><rect x="1216" y="600" width="16" height="16" fill="#000099"/><rect x="1232" y="600" width="16" height="16" fill="#000099"/><rect x="1248" y="600" width="16" height="16" fill="#000099"/><rect x="1264" y="600" width="16" height="16" fill="#000099"/><rect x="1280" y="600" width="16" height="16" fill="#000099"/><rect x="1296" y="600" width="16" height="16" fill="#000099"/><rect x="1312" y="600" width="16" height="16" fill="#000099"/><rect x="1328" y="600" width="16" height="16" fill="#000099"/><rect x="1344" y="600" width="16" height="16" fill="#000099"/><rect x="1360" y="600" width="16" height="16" fill="#000099"/><rect x="1376" y="600" width="16" height="16" fill="#000099"/><rect x="1392" y="600" width="16" height="16" fill="#000099"/><rect x="1408" y="600" width="16" height="16" fill="#000099"/><rect x="1424" y="600" width="16" height="16" fill="#010099"/><rect x="1440" y="600" width="16" height="16" fill="#050099"/><rect x="1456" y="600" width="16" height="16" fill="#080099"/><rect x="1472" y="600" width="16" height="16" fill="#0c0099"/><rect x="1488" y="600" width="16" height="16" fill="#100099"/><rect x="1504" y="600" width="16" height="16" fill="#140099"/><rect x="1520" y="600" width="16" height="16" fill="#190099"/><rect x="1536" y="600" width="16" height="16" fill="#1d0099"/><rect x="1552" y="600" width="16" height="16" fill="#220099"/><rect x="1568" y="600" width="16" height="16" fill="#270099"/><rect x="1584" y="600" width="16" height="16" fill="#2d0099"/><rect x="1600" y="600" width="16" height="16" fill="#320099"/><rect x="1616" y="600" width="16" height="16" fill="#380099"/><rect x="1632" y="600" width="16" height="16" fill="#3e0099"/><rect x="1648" y="600" width="16" height="16" fill="#450099"/></g></g><defs><linearGradient id="insu" x1="0" y1="0" x2="1" y2="0.4"><stop offset="0" stop-color="#6a9400"/><stop offset="0.5" stop-color="#8a9000"/><stop offset="1" stop-color="#9a7a00"/></linearGradient><linearGradient id="insd" x1="0" y1="0.3" x2="1" y2="0.7"><stop offset="0" stop-color="#c4ff00"/><stop offset="0.45" stop-color="#ffff10"/><stop offset="1" stop-color="#ffb000"/></linearGradient></defs><path d="M1460,442 H1657 V557 L1460,455.7 Z" fill="url(#insu)"/><path d="M1460,455.7 L1657,557 V572 H1460 Z" fill="url(#insd)"/><defs><linearGradient id="cardg" x1="0" y1="0" x2="0" y2="1"><stop offset="0" stop-color="#b2b2b2"/><stop offset="0.35" stop-color="#9c9c9c"/><stop offset="1" stop-color="#767676"/></linearGradient><linearGradient id="cardsel" x1="0" y1="0" x2="0" y2="1"><stop offset="0" stop-color="#1c1c1c"/><stop offset="1" stop-color="#2e2e2e"/></linearGradient><linearGradient id="swsh" x1="0" y1="0" x2="0" y2="1"><stop offset="0" stop-color="#000" stop-opacity="0.28"/><stop offset="0.25" stop-color="#000" stop-opacity="0"/><stop offset="1" stop-color="#fff" stop-opacity="0.06"/></linearGradient><linearGradient id="btn2" x1="0" y1="0" x2="0" y2="1"><stop offset="0" stop-color="#b4b4b4"/><stop offset="1" stop-color="#787878"/></linearGradient><linearGradient id="btn2d" x1="0" y1="0" x2="0" y2="1"><stop offset="0" stop-color="#7a7a7a"/><stop offset="1" stop-color="#5a5a5a"/></linearGradient><linearGradient id="btn2k" x1="0" y1="0" x2="0" y2="1"><stop offset="0" stop-color="#3c3c3c"/><stop offset="1" stop-color="#2c2c2c"/></linearGradient><linearGradient id="circg" x1="0" y1="0" x2="0" y2="1"><stop offset="0" stop-color="#000" stop-opacity="0.22"/><stop offset="1" stop-color="#fff" stop-opacity="0.18"/></linearGradient></defs><clipPath id="cardclip"><rect x="6" y="925" width="1265" height="70"/></clipPath><g clip-path="url(#cardclip)"><rect x="-26.9" y="932" width="62" height="60" rx="5.5" fill="url(#cardg)"/><rect x="-26.4" y="932.5" width="61" height="59" rx="5" fill="none" stroke="#c4c4c4" stroke-opacity="0.35" stroke-width="1"/><rect x="-20.9" y="937.7" width="50.2" height="15.3" rx="4.5" fill="#8078c0"/><rect x="-20.9" y="937.7" width="50.2" height="15.3" rx="4.5" fill="url(#swsh)"/><text x="-17.1" y="971.4" font-size="13.5" fill="#262626" text-anchor="start" font-weight="700" textLength="26" lengthAdjust="spacingAndGlyphs" >Blue</text><text x="-17.1" y="986.9" font-size="13.5" fill="#262626" text-anchor="start" font-weight="700" textLength="42" lengthAdjust="spacingAndGlyphs" >Flower</text><rect x="38.1" y="932" width="62" height="60" rx="5.5" fill="url(#cardg)"/><rect x="38.6" y="932.5" width="61" height="59" rx="5" fill="none" stroke="#c4c4c4" stroke-opacity="0.35" stroke-width="1"/><rect x="44.1" y="937.7" width="50.2" height="15.3" rx="4.5" fill="#5ec0a8"/><rect x="44.1" y="937.7" width="50.2" height="15.3" rx="4.5" fill="url(#swsh)"/><text x="50.6" y="971.4" font-size="13.5" fill="#262626" text-anchor="start" font-weight="700" textLength="36.5" lengthAdjust="spacingAndGlyphs" >Bluish</text><text x="50.6" y="986.9" font-size="13.5" fill="#262626" text-anchor="start" font-weight="700" textLength="36.4" lengthAdjust="spacingAndGlyphs" >Green</text><rect x="103.1" y="932" width="62" height="60" rx="5.5" fill="url(#cardg)"/><rect x="103.6" y="932.5" width="61" height="59" rx="5" fill="none" stroke="#c4c4c4" stroke-opacity="0.35" stroke-width="1"/><rect x="109.1" y="937.7" width="50.2" height="30.5" rx="4.5" fill="#e07828"/><rect x="109.1" y="937.7" width="50.2" height="30.5" rx="4.5" fill="url(#swsh)"/><text x="111.8" y="986.9" font-size="13.5" fill="#262626" text-anchor="start" font-weight="700" textLength="44.2" lengthAdjust="spacingAndGlyphs" >Orange</text><rect x="168.1" y="932" width="62" height="60" rx="5.5" fill="url(#cardg)"/><rect x="168.6" y="932.5" width="61" height="59" rx="5" fill="none" stroke="#c4c4c4" stroke-opacity="0.35" stroke-width="1"/><rect x="174.1" y="937.7" width="50.2" height="15.3" rx="4.5" fill="#4a5cb0"/><rect x="174.1" y="937.7" width="50.2" height="15.3" rx="4.5" fill="url(#swsh)"/><text x="173.9" y="971.4" font-size="13.5" fill="#262626" text-anchor="start" font-weight="700" textLength="49.8" lengthAdjust="spacingAndGlyphs" >Purplish</text><text x="173.9" y="986.9" font-size="13.5" fill="#262626" text-anchor="start" font-weight="700" textLength="26.5" lengthAdjust="spacingAndGlyphs" >Blue</text><rect x="233.1" y="932" width="62" height="60" rx="5.5" fill="url(#cardg)"/><rect x="233.6" y="932.5" width="61" height="59" rx="5" fill="none" stroke="#c4c4c4" stroke-opacity="0.35" stroke-width="1"/><rect x="239.1" y="937.7" width="50.2" height="15.3" rx="4.5" fill="#d05060"/><rect x="239.1" y="937.7" width="50.2" height="15.3" rx="4.5" fill="url(#swsh)"/><text x="233.4" y="971.4" font-size="13.5" fill="#262626" text-anchor="start" font-weight="700" textLength="61" lengthAdjust="spacingAndGlyphs" >Moderate</text><text x="233.4" y="986.9" font-size="13.5" fill="#262626" text-anchor="start" font-weight="700" textLength="23.7" lengthAdjust="spacingAndGlyphs" >Red</text><rect x="298.1" y="932" width="62" height="60" rx="5.5" fill="url(#cardg)"/><rect x="298.6" y="932.5" width="61" height="59" rx="5" fill="none" stroke="#c4c4c4" stroke-opacity="0.35" stroke-width="1"/><rect x="304.1" y="937.7" width="50.2" height="30.5" rx="4.5" fill="#5e3a78"/><rect x="304.1" y="937.7" width="50.2" height="30.5" rx="4.5" fill="url(#swsh)"/><text x="309.0" y="986.9" font-size="13.5" fill="#262626" text-anchor="start" font-weight="700" textLength="39.7" lengthAdjust="spacingAndGlyphs" >Purple</text><rect x="363.1" y="932" width="62" height="60" rx="5.5" fill="url(#cardg)"/><rect x="363.6" y="932.5" width="61" height="59" rx="5" fill="none" stroke="#c4c4c4" stroke-opacity="0.35" stroke-width="1"/><rect x="369.1" y="937.7" width="50.2" height="15.3" rx="4.5" fill="#9cc040"/><rect x="369.1" y="937.7" width="50.2" height="15.3" rx="4.5" fill="url(#swsh)"/><text x="373.6" y="971.4" font-size="13.5" fill="#262626" text-anchor="start" font-weight="700" textLength="40.5" lengthAdjust="spacingAndGlyphs" >Yellow</text><text x="373.6" y="986.9" font-size="13.5" fill="#262626" text-anchor="start" font-weight="700" textLength="37.5" lengthAdjust="spacingAndGlyphs" >Green</text><rect x="428.1" y="932" width="62" height="60" rx="5.5" fill="url(#cardg)"/><rect x="428.6" y="932.5" width="61" height="59" rx="5" fill="none" stroke="#c4c4c4" stroke-opacity="0.35" stroke-width="1"/><rect x="434.1" y="937.7" width="50.2" height="15.3" rx="4.5" fill="#e8a030"/><rect x="434.1" y="937.7" width="50.2" height="15.3" rx="4.5" fill="url(#swsh)"/><text x="436.6" y="971.4" font-size="13.5" fill="#262626" text-anchor="start" font-weight="700" textLength="44.5" lengthAdjust="spacingAndGlyphs" >Orange</text><text x="436.6" y="986.9" font-size="13.5" fill="#262626" text-anchor="start" font-weight="700" textLength="40.2" lengthAdjust="spacingAndGlyphs" >Yellow</text><rect x="493.1" y="932" width="62" height="60" rx="5.5" fill="url(#cardg)"/><rect x="493.6" y="932.5" width="61" height="59" rx="5" fill="none" stroke="#c4c4c4" stroke-opacity="0.35" stroke-width="1"/><rect x="499.1" y="937.7" width="50.2" height="30.5" rx="4.5" fill="#2c3c9c"/><rect x="499.1" y="937.7" width="50.2" height="30.5" rx="4.5" fill="url(#swsh)"/><text x="510.5" y="986.9" font-size="13.5" fill="#262626" text-anchor="start" font-weight="700" textLength="26.7" lengthAdjust="spacingAndGlyphs" >Blue</text><rect x="558.1" y="932" width="62" height="60" rx="5.5" fill="url(#cardg)"/><rect x="558.6" y="932.5" width="61" height="59" rx="5" fill="none" stroke="#c4c4c4" stroke-opacity="0.35" stroke-width="1"/><rect x="564.1" y="937.7" width="50.2" height="30.5" rx="4.5" fill="#40a048"/><rect x="564.1" y="937.7" width="50.2" height="30.5" rx="4.5" fill="url(#swsh)"/><text x="570.5" y="986.9" font-size="13.5" fill="#262626" text-anchor="start" font-weight="700" textLength="36.7" lengthAdjust="spacingAndGlyphs" >Green</text><rect x="623.1" y="932" width="62" height="60" rx="5.5" fill="url(#cardg)"/><rect x="623.6" y="932.5" width="61" height="59" rx="5" fill="none" stroke="#c4c4c4" stroke-opacity="0.35" stroke-width="1"/><rect x="629.1" y="937.7" width="50.2" height="30.5" rx="4.5" fill="#b02c34"/><rect x="629.1" y="937.7" width="50.2" height="30.5" rx="4.5" fill="url(#swsh)"/><text x="642.1" y="986.9" font-size="13.5" fill="#262626" text-anchor="start" font-weight="700" textLength="23.6" lengthAdjust="spacingAndGlyphs" >Red</text><rect x="688.1" y="932" width="62" height="60" rx="5.5" fill="url(#cardg)"/><rect x="688.6" y="932.5" width="61" height="59" rx="5" fill="none" stroke="#c4c4c4" stroke-opacity="0.35" stroke-width="1"/><rect x="694.1" y="937.7" width="50.2" height="30.5" rx="4.5" fill="#f0c828"/><rect x="694.1" y="937.7" width="50.2" height="30.5" rx="4.5" fill="url(#swsh)"/><text x="699.1" y="986.9" font-size="13.5" fill="#262626" text-anchor="start" font-weight="700" textLength="39.4" lengthAdjust="spacingAndGlyphs" >Yellow</text><rect x="753.1" y="932" width="62" height="60" rx="5.5" fill="url(#cardg)"/><rect x="753.6" y="932.5" width="61" height="59" rx="5" fill="none" stroke="#c4c4c4" stroke-opacity="0.35" stroke-width="1"/><rect x="759.1" y="937.7" width="50.2" height="30.5" rx="4.5" fill="#c0589c"/><rect x="759.1" y="937.7" width="50.2" height="30.5" rx="4.5" fill="url(#swsh)"/><text x="756.9" y="986.9" font-size="13.5" fill="#262626" text-anchor="start" font-weight="700" textLength="54" lengthAdjust="spacingAndGlyphs" >Magenta</text><rect x="818.1" y="932" width="62" height="60" rx="5.5" fill="url(#cardg)"/><rect x="818.6" y="932.5" width="61" height="59" rx="5" fill="none" stroke="#c4c4c4" stroke-opacity="0.35" stroke-width="1"/><rect x="824.1" y="937.7" width="50.2" height="30.5" rx="4.5" fill="#0890b0"/><rect x="824.1" y="937.7" width="50.2" height="30.5" rx="4.5" fill="url(#swsh)"/><text x="834.1" y="986.9" font-size="13.5" fill="#262626" text-anchor="start" font-weight="700" textLength="29.6" lengthAdjust="spacingAndGlyphs" >Cyan</text><rect x="883.1" y="932" width="62" height="60" rx="5.5" fill="url(#cardg)"/><rect x="883.6" y="932.5" width="61" height="59" rx="5" fill="none" stroke="#c4c4c4" stroke-opacity="0.35" stroke-width="1"/><rect x="889.1" y="937.7" width="50.2" height="30.5" rx="4.5" fill="#ff0000"/><text x="883.9" y="986.9" font-size="13.5" fill="#262626" text-anchor="start" font-weight="700" textLength="60" lengthAdjust="spacingAndGlyphs" >100% Red</text><rect x="948.1" y="932" width="62" height="60" rx="5.5" fill="url(#cardg)"/><rect x="948.6" y="932.5" width="61" height="59" rx="5" fill="none" stroke="#c4c4c4" stroke-opacity="0.35" stroke-width="1"/><rect x="954.1" y="937.7" width="50.2" height="15.3" rx="4.5" fill="#00ff00"/><text x="960.4" y="971.4" font-size="13.5" fill="#262626" text-anchor="start" font-weight="700" textLength="36.6" lengthAdjust="spacingAndGlyphs" >100%</text><text x="960.4" y="986.9" font-size="13.5" fill="#262626" text-anchor="start" font-weight="700" textLength="37" lengthAdjust="spacingAndGlyphs" >Green</text><rect x="1013.1" y="932" width="62" height="60" rx="5.5" fill="url(#cardg)"/><rect x="1013.6" y="932.5" width="61" height="59" rx="5" fill="none" stroke="#c4c4c4" stroke-opacity="0.35" stroke-width="1"/><rect x="1019.1" y="937.7" width="50.2" height="15.3" rx="4.5" fill="#0000ff"/><text x="1027.3" y="971.4" font-size="13.5" fill="#262626" text-anchor="start" font-weight="700" textLength="33" lengthAdjust="spacingAndGlyphs" >100%</text><text x="1027.3" y="986.9" font-size="13.5" fill="#262626" text-anchor="start" font-weight="700" textLength="26.4" lengthAdjust="spacingAndGlyphs" >Blue</text><rect x="1078.1" y="932" width="62" height="60" rx="5.5" fill="url(#cardg)"/><rect x="1078.6" y="932.5" width="61" height="59" rx="5" fill="none" stroke="#c4c4c4" stroke-opacity="0.35" stroke-width="1"/><rect x="1084.1" y="937.7" width="50.2" height="15.3" rx="4.5" fill="#00ffff"/><text x="1092.3" y="971.4" font-size="13.5" fill="#262626" text-anchor="start" font-weight="700" textLength="33" lengthAdjust="spacingAndGlyphs" >100%</text><text x="1092.3" y="986.9" font-size="13.5" fill="#262626" text-anchor="start" font-weight="700" textLength="29.2" lengthAdjust="spacingAndGlyphs" >Cyan</text><rect x="1143.1" y="932" width="62" height="60" rx="5.5" fill="url(#cardg)"/><rect x="1143.6" y="932.5" width="61" height="59" rx="5" fill="none" stroke="#c4c4c4" stroke-opacity="0.35" stroke-width="1"/><rect x="1149.1" y="937.7" width="50.2" height="15.3" rx="4.5" fill="#ff00ff"/><text x="1146.8" y="971.4" font-size="13.5" fill="#262626" text-anchor="start" font-weight="700" textLength="33.6" lengthAdjust="spacingAndGlyphs" >100%</text><text x="1146.8" y="986.9" font-size="13.5" fill="#262626" text-anchor="start" font-weight="700" textLength="54" lengthAdjust="spacingAndGlyphs" >Magenta</text><rect x="1208.1" y="932" width="62" height="60" rx="5.5" fill="url(#cardsel)"/><rect x="1214.1" y="937.7" width="50.2" height="15.3" rx="4.5" fill="#ffff00"/><text x="1218.8" y="971.4" font-size="13.5" fill="#ffffff" text-anchor="start" font-weight="700" textLength="33" lengthAdjust="spacingAndGlyphs" >100%</text><text x="1218.8" y="986.9" font-size="13.5" fill="#ffffff" text-anchor="start" font-weight="700" textLength="40.2" lengthAdjust="spacingAndGlyphs" >Yellow</text></g><rect x="6" y="992" width="1265" height="16" fill="#616161"/><rect x="455" y="994" width="797" height="14" rx="7" fill="#4a4a4a"/><rect x="8" y="994" width="13" height="14" rx="2.5" fill="#7c7c7c"/><path d="M11,1001 L17,996.5 L17,1005.5 Z" fill="#3a3a3a"/><rect x="1256" y="994" width="13.5" height="14" rx="2.5" fill="#7c7c7c"/><path d="M1266,1001 L1260,996.5 L1260,1005.5 Z" fill="#3a3a3a"/><rect x="1269.5" y="926" width="2.5" height="82" fill="#2a2a2a"/><rect x="1271.5" y="931" width="402.5" height="77" fill="#2a2a2a"/><path d="M1271.7,1008 V937 Q1271.7,931.4 1277,931.4 H1325.5 Q1330.8,931.4 1330.8,937 V1008 Z" fill="url(#btn2)"/><rect x="1271.7" y="953.8" width="59.1" height="1.2" fill="#4a4a4a"/><rect x="1271.7" y="955" width="59.1" height="53" fill="url(#btn2d)"/><circle cx="1301.6" cy="942.7" r="9.5" fill="url(#circg)"/><path d="M1296,946 L1301.6,940 L1307.2,946 Z" fill="#333"/><rect x="1282.5" y="962.5" width="37" height="37" rx="5" fill="#aaaaaa" stroke="#1e1e1e" stroke-width="3"/><rect x="1284" y="981" width="34" height="17.5" rx="3" fill="#888" fill-opacity="0.5"/><rect x="1293" y="973.2" width="17" height="16.7" fill="#050505"/><rect x="1333.0" y="931.4" width="57.0" height="37.2" rx="3" fill="url(#btn2)"/><rect x="1391.2" y="931.4" width="54.2" height="37.2" rx="3" fill="url(#btn2)"/><rect x="1446.6" y="931.4" width="54.8" height="37.2" rx="3" fill="url(#btn2d)"/><rect x="1502.6" y="931.4" width="55.8" height="37.2" rx="3" fill="url(#btn2)"/><rect x="1559.6" y="931.4" width="55.5" height="37.2" rx="3" fill="url(#btn2k)"/><rect x="1616.3" y="931.4" width="57.1" height="37.2" rx="3" fill="url(#btn2)"/><circle cx="1361.3" cy="950" r="12.3" fill="url(#circg)"/><circle cx="1418.3" cy="950" r="12.3" fill="url(#circg)"/><circle cx="1474" cy="950" r="12.3" fill="url(#circg)"/><circle cx="1530.8" cy="950" r="12.3" fill="url(#circg)"/><circle cx="1587" cy="950" r="12.3" fill="url(#circg)"/><circle cx="1644.6" cy="950" r="12.3" fill="url(#circg)"/><rect x="1357" y="945.5" width="9" height="9" fill="#333"/><path d="M1414.5,944 L1423.5,950 L1414.5,956 Z" fill="#222"/><path d="M1469.5,944.5 H1467.8 V955.5 H1469.5 M1478.5,944.5 H1480.2 V955.5 H1478.5" fill="none" stroke="#2a2a2a" stroke-width="1.8"/><path d="M1471.5,950 H1476.5" stroke="#2a2a2a" stroke-width="1.3" stroke-dasharray="1.2 1"/><path d="M1530.8,949 C1528,945.5 1523.5,945.5 1523.5,949 C1523.5,952.5 1528,952.5 1530.8,949 C1533.6,945.5 1538.1,945.5 1538.1,949 C1538.1,952.5 1533.6,952.5 1530.8,949 Z" fill="none" stroke="#333" stroke-width="2.2"/><path d="M1581.5,947.5 A6,6 0 0 1 1592,946 M1592.5,952.5 A6,6 0 0 1 1582,954" fill="none" stroke="#222" stroke-width="2.4"/><path d="M1593.5,942.5 L1593.5,948 L1588,947 Z M1580.5,957.5 L1580.5,952 L1586,953 Z" fill="#222"/><rect x="1332.4" y="969.8" width="169" height="38.2" rx="3" fill="url(#btn2)"/><rect x="1502.6" y="969.8" width="171.4" height="38.2" rx="3" fill="url(#btn2)"/><rect x="1501.4" y="969.8" width="1.2" height="38.2" fill="#3a3a3a"/><circle cx="1371.3" cy="989.3" r="12.3" fill="url(#circg)"/><circle cx="1637.2" cy="989.3" r="12.3" fill="url(#circg)"/><path d="M1370,984 L1365,989.5 L1370,995 M1375.5,984 L1370.5,989.5 L1375.5,995" fill="none" stroke="#333" stroke-width="2"/><path d="M1632.5,984 L1637.5,989.5 L1632.5,995 M1638,984 L1643,989.5 L1638,995" fill="none" stroke="#333" stroke-width="2"/><text x="1404.7" y="998.7" font-size="26.5" fill="#383838" stroke="#383838" stroke-width="0.3" text-anchor="start" font-weight="400" textLength="63" lengthAdjust="spacingAndGlyphs" >Back</text><text x="1538.3" y="998.7" font-size="26.5" fill="#383838" stroke="#383838" stroke-width="0.3" text-anchor="start" font-weight="400" textLength="64.3" lengthAdjust="spacingAndGlyphs" >Next</text></svg>
<canvas id="cie" width="640" height="492" style="left:1024px;top:122px"></canvas>
<svg id="ov" width="1674" height="1008" viewBox="0 0 1674 1008"><rect x="1150.0" y="145.0" width="13" height="13" fill="none" stroke="#f4f4f4" stroke-width="1.9"/><rect x="1173.9" y="168.9" width="13" height="13" fill="none" stroke="#f4f4f4" stroke-width="1.9"/><rect x="1213.9" y="161.0" width="13" height="13" fill="none" stroke="#f4f4f4" stroke-width="1.9"/><rect x="1210.8" y="183.0" width="13" height="13" fill="none" stroke="#f4f4f4" stroke-width="1.9"/><rect x="1233.9" y="153.0" width="13" height="13" fill="none" stroke="#f4f4f4" stroke-width="1.9"/><rect x="1260.8" y="156.9" width="13" height="13" fill="none" stroke="#f4f4f4" stroke-width="1.9"/><rect x="1293.0" y="163.7" width="13" height="13" fill="none" stroke="#f4f4f4" stroke-width="1.9"/><rect x="1264.8" y="203.0" width="13" height="13" fill="none" stroke="#f4f4f4" stroke-width="1.9"/><rect x="1275.8" y="196.7" width="13" height="13" fill="none" stroke="#f4f4f4" stroke-width="1.9"/><rect x="1180.8" y="213.7" width="13" height="13" fill="none" stroke="#f4f4f4" stroke-width="1.9"/><rect x="1164.8" y="232.8" width="13" height="13" fill="none" stroke="#f4f4f4" stroke-width="1.9"/><rect x="1170.1" y="264.5" width="13" height="13" fill="none" stroke="#f4f4f4" stroke-width="1.9"/><rect x="1203.7" y="261.9" width="13" height="13" fill="none" stroke="#f4f4f4" stroke-width="1.9"/><rect x="1224.2" y="266.9" width="13" height="13" fill="none" stroke="#f4f4f4" stroke-width="1.9"/><rect x="1259.9" y="284.8" width="13" height="13" fill="none" stroke="#f4f4f4" stroke-width="1.9"/><rect x="1336.1" y="167.5" width="13" height="13" fill="none" stroke="#f4f4f4" stroke-width="1.9"/><rect x="1497.0" y="177.5" width="13" height="13" fill="none" stroke="#f4f4f4" stroke-width="1.9"/><rect x="1415.8" y="197.6" width="13" height="13" fill="none" stroke="#f4f4f4" stroke-width="1.9"/><rect x="1355.1" y="209.7" width="13" height="13" fill="none" stroke="#f4f4f4" stroke-width="1.9"/><rect x="1322.5" y="255.5" width="13" height="13" fill="none" stroke="#f4f4f4" stroke-width="1.9"/><rect x="1342.0" y="335.0" width="13" height="13" fill="none" stroke="#f4f4f4" stroke-width="1.9"/><rect x="1207.1" y="314.9" width="13" height="13" fill="none" stroke="#f4f4f4" stroke-width="1.9"/><rect x="1207.1" y="364.5" width="13" height="13" fill="none" stroke="#f4f4f4" stroke-width="1.9"/><rect x="1203.8" y="477.0" width="13" height="13" fill="none" stroke="#f4f4f4" stroke-width="1.9"/><circle cx="1156" cy="151" r="4.6" fill="#00ff00" stroke="#111" stroke-width="1.3"/><circle cx="1179.3" cy="175.9" r="4.6" fill="#5a8a58" stroke="#111" stroke-width="1.3"/><circle cx="1219" cy="167" r="4.6" fill="#a0b050" stroke="#111" stroke-width="1.3"/><circle cx="1215.9" cy="187.7" r="4.6" fill="#5f6a50" stroke="#111" stroke-width="1.3"/><circle cx="1239.1" cy="159.1" r="4.6" fill="#ffff00" stroke="#111" stroke-width="1.3"/><circle cx="1266.4" cy="163" r="4.6" fill="#e8c030" stroke="#111" stroke-width="1.3"/><circle cx="1299" cy="169" r="4.6" fill="#e0a040" stroke="#111" stroke-width="1.3"/><circle cx="1268.9" cy="210.7" r="4.6" fill="#c09080" stroke="#111" stroke-width="1.3"/><circle cx="1285.5" cy="202.9" r="4.6" fill="#6a5448" stroke="#111" stroke-width="1.3"/><circle cx="1187.3" cy="224.6" r="4.6" fill="#70a090" stroke="#111" stroke-width="1.3"/><circle cx="1170" cy="243.75" r="4.6" fill="#00ffff" stroke="#111" stroke-width="1.3"/><circle cx="1174" cy="276" r="4.6" fill="#1880a0" stroke="#111" stroke-width="1.3"/><circle cx="1209.1" cy="273.75" r="4.6" fill="#6a80a0" stroke="#111" stroke-width="1.3"/><circle cx="1229.3" cy="279.1" r="4.6" fill="#8080a8" stroke="#111" stroke-width="1.3"/><circle cx="1266.4" cy="300.5" r="4.6" fill="#604870" stroke="#111" stroke-width="1.3"/><circle cx="1340.8" cy="174.5" r="4.6" fill="#e09040" stroke="#111" stroke-width="1.3"/><circle cx="1504.6" cy="182.75" r="4.6" fill="#ff0000" stroke="#111" stroke-width="1.3"/><circle cx="1429.9" cy="203" r="4.6" fill="#b04050" stroke="#111" stroke-width="1.3"/><circle cx="1360.5" cy="219.4" r="4.6" fill="#c05070" stroke="#111" stroke-width="1.3"/><circle cx="1326.6" cy="268.6" r="4.6" fill="#c060a0" stroke="#111" stroke-width="1.3"/><circle cx="1342.6" cy="348.3" r="4.6" fill="#ff00ff" stroke="#111" stroke-width="1.3"/><circle cx="1210.3" cy="330.75" r="4.6" fill="#5a6aa0" stroke="#111" stroke-width="1.3"/><circle cx="1210.3" cy="387.7" r="4.6" fill="#505a90" stroke="#111" stroke-width="1.3"/><circle cx="1207.7" cy="487" r="4.6" fill="#0000ff" stroke="#111" stroke-width="1.3"/><rect x="1226.9" y="221.7" width="13" height="13" fill="none" stroke="#000" stroke-width="2.5"/><circle cx="1232.5" cy="232.7" r="4.8" fill="#a4a4a4" stroke="#111" stroke-width="1.3"/><circle cx="1241.8" cy="264.3" r="5" fill="#000"/><rect x="1456.5" y="439.5" width="204" height="136" fill="none" stroke="#303030" stroke-width="3"/><rect x="1459.5" y="441.5" width="198" height="131" fill="none" stroke="#a0a0a0" stroke-width="1.6"/><circle cx="1549" cy="508.5" r="4.5" fill="#ffff00" stroke="#111" stroke-width="1.3"/><rect x="1550.5" y="498.6" width="14" height="14" fill="none" stroke="#f4f4f4" stroke-width="2"/><rect x="1408" y="581" width="252" height="28" fill="#2b2b2b"/><text x="1409" y="603.5" font-size="20" fill="#f4f4f4" stroke="#f4f4f4" stroke-width="0.3" text-anchor="start" font-weight="400" textLength="211" lengthAdjust="spacingAndGlyphs" >RGB Triplet: 255, 255, 0</text></svg>
<script>(function(){
var cv=document.getElementById('cie'); if(!cv||!cv.getContext) return;
var ctx=cv.getContext('2d');
var L=1024, T=122, WC=640, HC=492;
var X0=1023.7, SU=1064, Y0=613.0, SV=820.5;
var xy=[[0.17411,0.00496],[0.17401,0.00498],[0.1738,0.00492],[0.17356,0.00492],[0.17334,0.0048],[0.17302,0.00478],[0.17258,0.0048],[0.17209,0.00483],[0.17141,0.0051],[0.1703,0.00579],[0.16888,0.0069],[0.1669,0.00856],[0.16441,0.01086],[0.1611,0.01379],[0.15664,0.0177],[0.15099,0.02274],[0.14396,0.0297],[0.1355,0.03988],[0.12412,0.0578],[0.10959,0.08684],[0.09129,0.1327],[0.06871,0.20072],[0.04539,0.29498],[0.02346,0.4127],[0.00817,0.53842],[0.00386,0.65482],[0.01387,0.75019],[0.03885,0.81202],[0.0743,0.8338],[0.11416,0.82621],[0.15472,0.80586],[0.19288,0.78163],[0.22962,0.75433],[0.26578,0.72432],[0.3016,0.69231],[0.33736,0.65885],[0.3731,0.62445],[0.40874,0.58961],[0.44406,0.55471],[0.47877,0.5202],[0.51249,0.48659],[0.54479,0.45443],[0.57515,0.42423],[0.60293,0.3965],[0.62704,0.37249],[0.64823,0.35139],[0.66576,0.33401],[0.68008,0.31975],[0.6915,0.30834],[0.70061,0.2993],[0.70792,0.29203],[0.71403,0.28593],[0.71903,0.28093],[0.72303,0.27695],[0.72599,0.27401],[0.72827,0.27173],[0.72997,0.27003],[0.73109,0.26891],[0.73199,0.26801],[0.73272,0.26728],[0.73342,0.26658],[0.73405,0.26595],[0.7344,0.2656],[0.73459,0.26541],[0.73469,0.26531]];
var uv=xy.map(function(p){var d=-2*p[0]+12*p[1]+3;return [4*p[0]/d,9*p[1]/d];});
// catmull-rom densify
var pts=[];
for(var i=0;i<uv.length-1;i++){
  var p0=uv[Math.max(i-1,0)],p1=uv[i],p2=uv[i+1],p3=uv[Math.min(i+2,uv.length-1)];
  for(var s=0;s<8;s++){var t=s/8,t2=t*t,t3=t2*t;
    pts.push([0.5*((2*p1[0])+(-p0[0]+p2[0])*t+(2*p0[0]-5*p1[0]+4*p2[0]-p3[0])*t2+(-p0[0]+3*p1[0]-3*p2[0]+p3[0])*t3),
              0.5*((2*p1[1])+(-p0[1]+p2[1])*t+(2*p0[1]-5*p1[1]+4*p2[1]-p3[1])*t2+(-p0[1]+3*p1[1]-3*p2[1]+p3[1])*t3)]);}
}
pts.push(uv[uv.length-1]);
var PR=[0.4507,0.5229],PG=[0.125,0.5625],PB=[0.1754,0.1579];
function lin(u,v){var den=6*u-16*v+12;var x=9*u/den,y=4*v/den;if(y<1e-4)y=1e-4;var X=x/y,Z=(1-x-y)/y;
  return [3.2406*X-1.5372-0.4986*Z,-0.9689*X+1.8758+0.0415*Z,0.0557*X-0.2040+1.0570*Z];}
function gam(c){return c<=0.0031308?12.92*c:1.055*Math.pow(c,1/2.4)-0.055;}
var GP=window.CIEGP||1;function inCol(u,v){var c=lin(u,v);var r=Math.max(c[0],0),g=Math.max(c[1],0),b=Math.max(c[2],0);var m=Math.max(r,g,b)||1;return [Math.pow(r/m,GP),Math.pow(g/m,GP),Math.pow(b/m,GP)];}
function proj(p,a,b){var dx=b[0]-a[0],dy=b[1]-a[1];var t=((p[0]-a[0])*dx+(p[1]-a[1])*dy)/(dx*dx+dy*dy);t=Math.max(0,Math.min(1,t));return [a[0]+t*dx,a[1]+t*dy];}
function d2(p,q){return (p[0]-q[0])*(p[0]-q[0])+(p[1]-q[1])*(p[1]-q[1]);}
var K=window.CIEK||0.6;
function color(u,v){
  var c=lin(u,v);
  if(c[0]>=0&&c[1]>=0&&c[2]>=0){return inCol(u,v);}
  var p=[u,v];var q1=proj(p,PR,PG),q2=proj(p,PG,PB),q3=proj(p,PB,PR);
  var q=q1; if(d2(p,q2)<d2(p,q)) q=q2; if(d2(p,q3)<d2(p,q)) q=q3;
  var e=inCol(q[0]+(0.1978-q[0])*0.002,q[1]+(0.4683-q[1])*0.002);
  return [e[0]*K,e[1]*K,e[2]*K];
}
function render(w,h,map){
  var off=document.createElement('canvas');off.width=w;off.height=h;var o=off.getContext('2d');
  var img=o.createImageData(w,h);var d=img.data;
  for(var py=0;py<h;py++){for(var px=0;px<w;px++){var uvp=map(px+0.5,py+0.5);var c=color(uvp[0],uvp[1]);var k=(py*w+px)*4;
    d[k]=Math.round(c[0]*255);d[k+1]=Math.round(c[1]*255);d[k+2]=Math.round(c[2]*255);d[k+3]=255;}}
  o.putImageData(img,0,0);return off;
}
var main=render(WC,HC,function(px,py){return [(L+px-X0)/SU,(Y0-(T+py))/SV];});
ctx.save();ctx.beginPath();
for(var i=0;i<pts.length;i++){var X=pts[i][0]*SU+X0-L,Y=Y0-pts[i][1]*SV-T;if(i==0)ctx.moveTo(X,Y);else ctx.lineTo(X,Y);}
ctx.closePath();ctx.clip();ctx.drawImage(main,0,0);ctx.restore();
// inset
var IX=1460,IY=442,IW=197,IH=130;
var SXi=window.CIESXI||3500,SYi=window.CIESYI||2160;
var Ycx=1557.5,Ycy=505.6,yx=0.4193,yy=0.5053;
var ins=render(IW,IH,function(px,py){var x=yx+(IX+px-Ycx)/SXi,y=yy-(IY+py-Ycy)/SYi;var d=-2*x+12*y+3;return [4*x/d,9*y/d];});
ctx.drawImage(ins,IX-L,IY-T);
var fb=document.getElementById('ciefb'); if(fb) fb.setAttribute('display','none');
})();
</script>
</body></html>
